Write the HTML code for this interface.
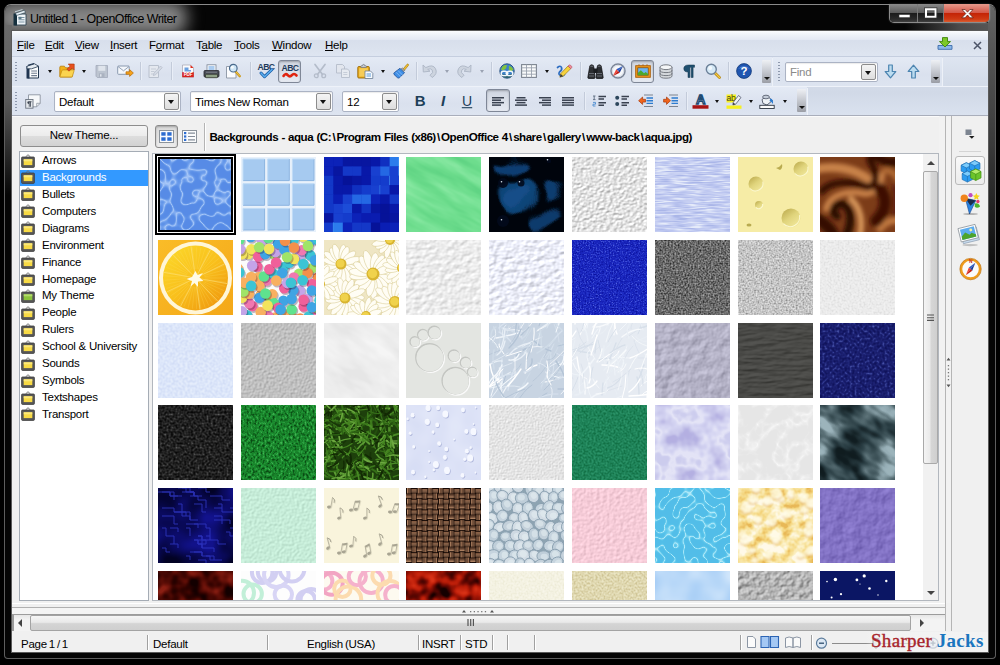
<!DOCTYPE html>
<html><head><meta charset="utf-8"><title>Untitled 1 - OpenOffice Writer</title>
<style>
*{box-sizing:border-box;margin:0;padding:0}
html,body{width:1000px;height:665px;overflow:hidden;background:#000}
body{position:relative;font-family:"Liberation Sans",sans-serif;font-size:11.5px;letter-spacing:-.25px;color:#000}
.abs{position:absolute}
#frame{left:4px;top:4px;width:992px;height:655px;border:1px solid #5e5e5e;border-top-color:#8a8a8a;border-radius:7px 7px 4px 4px;background:#050505}
#titleglow{left:-10px;top:-4px;width:192px;height:34px;border-radius:14px;background:#868686;filter:blur(8px)}#glowclip{left:5px;top:5px;width:300px;height:200px;overflow:hidden;border-radius:6px 0 0 0}
#title{left:30px;top:11.5px;font-size:12.4px;color:#000;white-space:nowrap;letter-spacing:-.52px}
#client{left:12px;top:31px;width:976px;height:621px;background:#f0f0f0;overflow:hidden;box-shadow:0 0 0 1px #5a5a5a}
#menubar{left:0;top:0;width:976px;height:26px;background:linear-gradient(#fcfdff 0,#eff3f9 14%,#e4e9f4 33%,#d8dfec 35%,#dae1ed 60%,#dfe6f2 100%)}
.mi{position:absolute;top:8px;white-space:nowrap}
.mi u{text-decoration:underline;text-underline-offset:1px}
#tbarea{left:0;top:26px;width:976px;height:59px;background:linear-gradient(#dee5f1 0,#d5ddea 35%,#d1d9e7 60%,#dae2ef 100%)}
.tb{position:absolute;background:linear-gradient(#e4eaf5,#dae1ee 60%,#dde4f0);box-shadow:1px 1px 0 #edf1f8}
.grip{position:absolute;width:2px;background-image:repeating-linear-gradient(#8e99ad 0 1px,transparent 1px 3px)}
.sep{position:absolute;width:1px;background:#c3cbda;box-shadow:1px 0 0 #e9eef7}
.ic{position:absolute;overflow:visible}
.dd{position:absolute;width:0;height:0;margin-left:.5px;border-left:2.5px solid transparent;border-right:2.5px solid transparent;border-top:3px solid #111}
.dd.dis{border-top-color:#9aa2b2}
.pressed{position:absolute;border:1px solid #7f8797;border-radius:3px;background:linear-gradient(#cfd5e0,#e6eaf2);box-shadow:inset 0 1px 2px rgba(0,0,0,.25)}
.combo{position:absolute;background:#fff;border:1px solid #abb3c4;border-radius:2px;box-shadow:inset 0 1px 1px rgba(0,0,0,.08)}
.combo span{position:absolute;left:4px;top:3px;white-space:nowrap}
.cbtn{position:absolute;right:1px;top:1px;bottom:1px;width:15px;border:1px solid #8c8c8c;border-radius:2px;background:linear-gradient(#f4f4f4,#dedede)}
.cbtn:after{content:"";position:absolute;left:3px;top:6px;border-left:3.5px solid transparent;border-right:3.5px solid transparent;border-top:4px solid #111}
.ovf{position:absolute;width:9px;border-radius:1px;background:linear-gradient(#eef0f4 0,#c9ccd3 45%,#9b9ea6 100%)}
.ovf:after{content:"";position:absolute;left:1.5px;bottom:3px;border-left:3px solid transparent;border-right:3px solid transparent;border-top:3px solid #111}
#panel{left:0;top:85px;width:976px;height:515px;background:#f0f0f0}
.btn{position:absolute;border:1px solid #8e8e8e;border-radius:3px;background:linear-gradient(#f5f5f5 0,#ececec 48%,#dddddd 52%,#d2d2d2 100%);text-align:center}
#list{left:8px;top:121px;width:129px;height:449px;background:#fff;border:1px solid #a5acb5}
.li{position:absolute;left:0;width:128px;height:16px;white-space:nowrap}
.li span{position:absolute;left:22px;top:1px}
.li.sel{background:#3399ff;color:#fff}
#gview{left:141px;top:122px;width:785px;height:448px;background:#fff;border:1px solid #b2b7be;overflow:hidden}
.th{position:absolute;width:75px;height:75px;overflow:hidden}
.th svg{position:absolute;left:0;top:0}
#status{left:0;top:600px;width:976px;height:21px;background:#f0f0f0}
.st{position:absolute;top:7px;white-space:nowrap;word-spacing:-1px}
.bs{margin:0 1.3px}.ssep{position:absolute;top:4px;width:1px;height:15px;background:#a0a0a0;box-shadow:1px 0 0 #fff}
</style></head><body>
<svg width="0" height="0" style="position:absolute"><defs><filter id="f0" x="0" y="0" width="100%" height="100%" color-interpolation-filters="sRGB"><feTurbulence type="turbulence" baseFrequency="0.085 0.085" numOctaves="1" seed="7"/><feColorMatrix type="matrix" values="0 0 0 1 0 0 0 0 1 0 0 0 0 1 0 0 0 0 0 1"/><feComponentTransfer><feFuncR type="table" tableValues="0.659 0.528 0.427 0.371 0.347 0.345 0.345 0.345 0.345 0.345 0.345 0.345 0.345 0.345 0.345 0.345 0.345 0.345 0.345 0.345 0.345 0.345 0.345 0.345 0.345"/><feFuncG type="table" tableValues="0.784 0.690 0.618 0.575 0.551 0.549 0.549 0.549 0.549 0.549 0.549 0.549 0.549 0.549 0.549 0.549 0.549 0.549 0.549 0.549 0.549 0.549 0.549 0.549 0.549"/><feFuncB type="table" tableValues="0.973 0.945 0.926 0.912 0.903 0.902 0.902 0.902 0.902 0.902 0.902 0.902 0.902 0.902 0.902 0.902 0.902 0.902 0.902 0.902 0.902 0.902 0.902 0.902 0.902"/></feComponentTransfer></filter><filter id="f1" x="0" y="0" width="100%" height="100%" color-interpolation-filters="sRGB"><feTurbulence type="fractalNoise" baseFrequency="0.08" numOctaves="2" seed="4"/><feColorMatrix type="matrix" values="0 0 0 0 .64  0 0 0 0 .78  0 0 0 0 .93  .35 0 0 0 -.1"/><feComposite in2="SourceGraphic" operator="in"/></filter><filter id="f2" x="0" y="0" width="100%" height="100%" color-interpolation-filters="sRGB"><feTurbulence type="fractalNoise" baseFrequency="0.03 0.14" numOctaves="3" seed="6"/><feColorMatrix type="matrix" values="0 0 0 1 0 0 0 0 1 0 0 0 0 1 0 0 0 0 0 1"/><feComponentTransfer><feFuncR type="table" tableValues="0.376 0.376 0.376 0.376 0.376 0.378 0.388 0.398 0.408 0.418 0.427 0.437 0.447 0.457 0.467 0.478 0.492 0.505 0.518 0.531 0.533 0.533 0.533 0.533 0.533"/><feFuncG type="table" tableValues="0.831 0.831 0.831 0.831 0.831 0.833 0.839 0.846 0.852 0.859 0.865 0.870 0.875 0.879 0.884 0.889 0.894 0.899 0.904 0.909 0.910 0.910 0.910 0.910 0.910"/><feFuncB type="table" tableValues="0.518 0.518 0.518 0.518 0.518 0.519 0.525 0.532 0.539 0.545 0.552 0.560 0.569 0.577 0.585 0.594 0.604 0.614 0.624 0.633 0.635 0.635 0.635 0.635 0.635"/></feComponentTransfer></filter><filter id="f3" x="-20%" y="-20%" width="140%" height="140%"><feTurbulence type="fractalNoise" baseFrequency="0.035" numOctaves="2" seed="3" result="n"/><feGaussianBlur in="SourceGraphic" stdDeviation="1.4" result="b"/><feDisplacementMap in="b" in2="n" scale="22" xChannelSelector="R" yChannelSelector="G"/></filter><filter id="f4" x="-20%" y="-20%" width="140%" height="140%"><feGaussianBlur stdDeviation="0.4"/></filter><filter id="f5" x="0" y="0" width="100%" height="100%" color-interpolation-filters="sRGB"><feTurbulence type="fractalNoise" baseFrequency="0.3 0.4" numOctaves="2" seed="3"/><feDiffuseLighting surfaceScale="1.0" diffuseConstant="1" lighting-color="#fff"><feDistantLight azimuth="225" elevation="45"/></feDiffuseLighting><feColorMatrix type="matrix" values="0.7 0 0 0 0.395 0 0.7 0 0 0.395 0 0 0.7 0 0.395 0 0 0 0 1"/></filter><filter id="f6" x="0" y="0" width="100%" height="100%" color-interpolation-filters="sRGB"><feTurbulence type="fractalNoise" baseFrequency="0.06 0.7" numOctaves="2" seed="8"/><feColorMatrix type="matrix" values="0 0 0 1 0 0 0 0 1 0 0 0 0 1 0 0 0 0 0 1"/><feComponentTransfer><feFuncR type="table" tableValues="0.667 0.667 0.667 0.667 0.667 0.667 0.667 0.684 0.702 0.720 0.737 0.753 0.769 0.784 0.800 0.825 0.851 0.876 0.902 0.902 0.902 0.902 0.902 0.902 0.902"/><feFuncG type="table" tableValues="0.714 0.714 0.714 0.714 0.714 0.714 0.714 0.729 0.745 0.761 0.776 0.790 0.804 0.818 0.831 0.855 0.878 0.902 0.925 0.925 0.925 0.925 0.925 0.925 0.925"/><feFuncB type="table" tableValues="0.910 0.910 0.910 0.910 0.910 0.910 0.910 0.918 0.925 0.933 0.941 0.945 0.949 0.953 0.957 0.963 0.969 0.975 0.980 0.980 0.980 0.980 0.980 0.980 0.980"/></feComponentTransfer></filter><filter id="f7" x="-10%" y="-10%" width="120%" height="120%"><feGaussianBlur stdDeviation="2"/></filter><filter id="f8" x="0" y="0" width="100%" height="100%" color-interpolation-filters="sRGB"><feTurbulence type="fractalNoise" baseFrequency="0.16 0.22" numOctaves="2" seed="5"/><feDiffuseLighting surfaceScale="1.0" diffuseConstant="1" lighting-color="#fff"><feDistantLight azimuth="225" elevation="45"/></feDiffuseLighting><feColorMatrix type="matrix" values="0.45 0 0 0 0.607 0 0.45 0 0 0.607 0 0 0.45 0 0.607 0 0 0 0 1"/></filter><filter id="f9" x="0" y="0" width="100%" height="100%" color-interpolation-filters="sRGB"><feTurbulence type="fractalNoise" baseFrequency="0.15 0.22" numOctaves="2" seed="7"/><feDiffuseLighting surfaceScale="1.3" diffuseConstant="1" lighting-color="#fff"><feDistantLight azimuth="225" elevation="45"/></feDiffuseLighting><feColorMatrix type="matrix" values="0.55 0 0 0 0.537 0 0.55 0 0 0.544 0 0 0.55 0 0.588 0 0 0 0 1"/></filter><filter id="f10" x="0" y="0" width="100%" height="100%" color-interpolation-filters="sRGB"><feTurbulence type="fractalNoise" baseFrequency="0.7 0.7" numOctaves="2" seed="2"/><feColorMatrix type="matrix" values="0 0 0 1 0 0 0 0 1 0 0 0 0 1 0 0 0 0 0 1"/><feComponentTransfer><feFuncR type="table" tableValues="0.047 0.047 0.047 0.047 0.047 0.047 0.047 0.058 0.069 0.080 0.089 0.095 0.102 0.108 0.131 0.157 0.183 0.212 0.251 0.290 0.329 0.345 0.345 0.345 0.345"/><feFuncG type="table" tableValues="0.078 0.078 0.078 0.078 0.078 0.078 0.078 0.092 0.105 0.118 0.130 0.141 0.152 0.163 0.187 0.216 0.244 0.275 0.314 0.353 0.392 0.408 0.408 0.408 0.408"/><feFuncB type="table" tableValues="0.627 0.627 0.627 0.627 0.627 0.627 0.627 0.651 0.675 0.699 0.719 0.732 0.745 0.758 0.775 0.792 0.810 0.827 0.842 0.857 0.872 0.878 0.878 0.878 0.878"/></feComponentTransfer></filter><filter id="f11" x="0" y="0" width="100%" height="100%" color-interpolation-filters="sRGB"><feTurbulence type="fractalNoise" baseFrequency="0.6 0.6" numOctaves="1" seed="4"/><feColorMatrix type="matrix" values="0 0 0 1 0 0 0 0 1 0 0 0 0 1 0 0 0 0 0 1"/><feComponentTransfer><feFuncR type="table" tableValues="0.149 0.149 0.149 0.149 0.149 0.157 0.196 0.235 0.275 0.314 0.350 0.383 0.416 0.448 0.481 0.515 0.549 0.583 0.618 0.652 0.659 0.659 0.659 0.659 0.659"/><feFuncG type="table" tableValues="0.149 0.149 0.149 0.149 0.149 0.157 0.196 0.235 0.275 0.314 0.350 0.383 0.416 0.448 0.481 0.515 0.549 0.583 0.618 0.652 0.659 0.659 0.659 0.659 0.659"/><feFuncB type="table" tableValues="0.149 0.149 0.149 0.149 0.149 0.157 0.196 0.235 0.275 0.314 0.350 0.383 0.416 0.448 0.481 0.515 0.549 0.583 0.618 0.652 0.659 0.659 0.659 0.659 0.659"/></feComponentTransfer></filter><filter id="f12" x="0" y="0" width="100%" height="100%" color-interpolation-filters="sRGB"><feTurbulence type="fractalNoise" baseFrequency="0.6 0.6" numOctaves="1" seed="6"/><feColorMatrix type="matrix" values="0 0 0 1 0 0 0 0 1 0 0 0 0 1 0 0 0 0 0 1"/><feComponentTransfer><feFuncR type="table" tableValues="0.549 0.549 0.549 0.549 0.549 0.556 0.592 0.628 0.664 0.700 0.730 0.751 0.773 0.794 0.815 0.836 0.858 0.879 0.900 0.921 0.925 0.925 0.925 0.925 0.925"/><feFuncG type="table" tableValues="0.549 0.549 0.549 0.549 0.549 0.556 0.592 0.628 0.664 0.700 0.730 0.751 0.773 0.794 0.815 0.836 0.858 0.879 0.900 0.921 0.925 0.925 0.925 0.925 0.925"/><feFuncB type="table" tableValues="0.549 0.549 0.549 0.549 0.549 0.556 0.592 0.628 0.664 0.700 0.730 0.751 0.773 0.794 0.815 0.836 0.858 0.879 0.900 0.921 0.925 0.925 0.925 0.925 0.925"/></feComponentTransfer></filter><filter id="f13" x="0" y="0" width="100%" height="100%" color-interpolation-filters="sRGB"><feTurbulence type="fractalNoise" baseFrequency="0.5 0.5" numOctaves="1" seed="9"/><feColorMatrix type="matrix" values="0 0 0 1 0 0 0 0 1 0 0 0 0 1 0 0 0 0 0 1"/><feComponentTransfer><feFuncR type="table" tableValues="0.878 0.878 0.878 0.878 0.878 0.878 0.878 0.886 0.894 0.902 0.910 0.918 0.925 0.929 0.933 0.937 0.941 0.945 0.949 0.949 0.949 0.949 0.949 0.949 0.949"/><feFuncG type="table" tableValues="0.878 0.878 0.878 0.878 0.878 0.878 0.878 0.886 0.894 0.902 0.910 0.918 0.925 0.929 0.933 0.937 0.941 0.945 0.949 0.949 0.949 0.949 0.949 0.949 0.949"/><feFuncB type="table" tableValues="0.878 0.878 0.878 0.878 0.878 0.878 0.878 0.886 0.894 0.902 0.910 0.918 0.925 0.929 0.933 0.937 0.941 0.945 0.949 0.949 0.949 0.949 0.949 0.949 0.949"/></feComponentTransfer></filter><filter id="f14" x="0" y="0" width="100%" height="100%" color-interpolation-filters="sRGB"><feTurbulence type="fractalNoise" baseFrequency="0.4 0.4" numOctaves="1" seed="3"/><feColorMatrix type="matrix" values="0 0 0 1 0 0 0 0 1 0 0 0 0 1 0 0 0 0 0 1"/><feComponentTransfer><feFuncR type="table" tableValues="0.824 0.824 0.824 0.824 0.824 0.824 0.824 0.830 0.837 0.843 0.850 0.856 0.863 0.869 0.876 0.882 0.889 0.895 0.902 0.902 0.902 0.902 0.902 0.902 0.902"/><feFuncG type="table" tableValues="0.867 0.867 0.867 0.867 0.867 0.867 0.867 0.873 0.878 0.884 0.890 0.896 0.902 0.907 0.912 0.918 0.923 0.928 0.933 0.933 0.933 0.933 0.933 0.933 0.933"/><feFuncB type="table" tableValues="0.965 0.965 0.965 0.965 0.965 0.965 0.965 0.967 0.970 0.973 0.975 0.978 0.980 0.982 0.983 0.984 0.986 0.987 0.988 0.988 0.988 0.988 0.988 0.988 0.988"/></feComponentTransfer></filter><filter id="f15" x="0" y="0" width="100%" height="100%" color-interpolation-filters="sRGB"><feTurbulence type="fractalNoise" baseFrequency="0.45 0.45" numOctaves="1" seed="3"/><feDiffuseLighting surfaceScale="0.8" diffuseConstant="1" lighting-color="#fff"><feDistantLight azimuth="225" elevation="45"/></feDiffuseLighting><feColorMatrix type="matrix" values="0.45 0 0 0 0.435 0 0.45 0 0 0.435 0 0 0.45 0 0.435 0 0 0 0 1"/></filter><filter id="f16" x="0" y="0" width="100%" height="100%" color-interpolation-filters="sRGB"><feTurbulence type="fractalNoise" baseFrequency="0.04 0.1" numOctaves="3" seed="11"/><feColorMatrix type="matrix" values="0 0 0 1 0 0 0 0 1 0 0 0 0 1 0 0 0 0 0 1"/><feComponentTransfer><feFuncR type="table" tableValues="0.902 0.902 0.902 0.902 0.902 0.902 0.902 0.908 0.914 0.920 0.925 0.929 0.933 0.937 0.941 0.946 0.951 0.956 0.961 0.961 0.961 0.961 0.961 0.961 0.961"/><feFuncG type="table" tableValues="0.902 0.902 0.902 0.902 0.902 0.902 0.902 0.908 0.914 0.920 0.925 0.929 0.933 0.937 0.941 0.946 0.951 0.956 0.961 0.961 0.961 0.961 0.961 0.961 0.961"/><feFuncB type="table" tableValues="0.902 0.902 0.902 0.902 0.902 0.902 0.902 0.908 0.914 0.920 0.925 0.929 0.933 0.937 0.941 0.946 0.951 0.956 0.961 0.961 0.961 0.961 0.961 0.961 0.961"/></feComponentTransfer></filter><filter id="f17" x="-20%" y="-20%" width="140%" height="140%"><feGaussianBlur stdDeviation="0.45"/></filter><filter id="f18" x="-20%" y="-20%" width="140%" height="140%"><feGaussianBlur stdDeviation="0.45"/></filter><filter id="f19" x="0" y="0" width="100%" height="100%" color-interpolation-filters="sRGB"><feTurbulence type="fractalNoise" baseFrequency="0.1 0.1" numOctaves="3" seed="5"/><feDiffuseLighting surfaceScale="1.3" diffuseConstant="1" lighting-color="#fff"><feDistantLight azimuth="225" elevation="45"/></feDiffuseLighting><feColorMatrix type="matrix" values="0.5 0 0 0 0.352 0 0.5 0 0 0.344 0 0 0.5 0 0.423 0 0 0 0 1"/></filter><filter id="f20" x="0" y="0" width="100%" height="100%" color-interpolation-filters="sRGB"><feTurbulence type="fractalNoise" baseFrequency="0.05 0.25" numOctaves="3" seed="2"/><feDiffuseLighting surfaceScale="1.5" diffuseConstant="1" lighting-color="#fff"><feDistantLight azimuth="225" elevation="45"/></feDiffuseLighting><feColorMatrix type="matrix" values="0.2 0 0 0 0.149 0 0.2 0 0 0.149 0 0 0.2 0 0.137 0 0 0 0 1"/></filter><filter id="f21" x="0" y="0" width="100%" height="100%" color-interpolation-filters="sRGB"><feTurbulence type="fractalNoise" baseFrequency="0.4 0.4" numOctaves="1" seed="5"/><feColorMatrix type="matrix" values="0 0 0 1 0 0 0 0 1 0 0 0 0 1 0 0 0 0 0 1"/><feComponentTransfer><feFuncR type="table" tableValues="0.063 0.063 0.063 0.063 0.063 0.063 0.063 0.063 0.070 0.079 0.088 0.096 0.103 0.110 0.117 0.144 0.176 0.207 0.244 0.292 0.339 0.386 0.392 0.392 0.392"/><feFuncG type="table" tableValues="0.078 0.078 0.078 0.078 0.078 0.078 0.078 0.078 0.086 0.095 0.104 0.113 0.122 0.131 0.140 0.171 0.208 0.244 0.285 0.334 0.384 0.433 0.439 0.439 0.439"/><feFuncB type="table" tableValues="0.361 0.361 0.361 0.361 0.361 0.361 0.361 0.361 0.373 0.389 0.405 0.420 0.434 0.447 0.461 0.497 0.537 0.578 0.618 0.656 0.694 0.733 0.737 0.737 0.737"/></feComponentTransfer></filter><filter id="f22" x="0" y="0" width="100%" height="100%" color-interpolation-filters="sRGB"><feTurbulence type="fractalNoise" baseFrequency="0.45 0.45" numOctaves="1" seed="8"/><feColorMatrix type="matrix" values="0 0 0 1 0 0 0 0 1 0 0 0 0 1 0 0 0 0 0 1"/><feComponentTransfer><feFuncR type="table" tableValues="0.031 0.031 0.031 0.031 0.031 0.031 0.031 0.048 0.064 0.080 0.097 0.113 0.129 0.146 0.162 0.178 0.204 0.243 0.282 0.322 0.361 0.376 0.376 0.376 0.376"/><feFuncG type="table" tableValues="0.031 0.031 0.031 0.031 0.031 0.031 0.031 0.048 0.064 0.080 0.097 0.113 0.129 0.146 0.162 0.178 0.204 0.243 0.282 0.322 0.361 0.376 0.376 0.376 0.376"/><feFuncB type="table" tableValues="0.031 0.031 0.031 0.031 0.031 0.031 0.031 0.048 0.064 0.080 0.097 0.113 0.129 0.146 0.162 0.178 0.204 0.243 0.282 0.322 0.361 0.376 0.376 0.376 0.376"/></feComponentTransfer></filter><filter id="f23" x="0" y="0" width="100%" height="100%" color-interpolation-filters="sRGB"><feTurbulence type="fractalNoise" baseFrequency="0.5 0.35" numOctaves="2" seed="3"/><feColorMatrix type="matrix" values="0 0 0 1 0 0 0 0 1 0 0 0 0 1 0 0 0 0 0 1"/><feComponentTransfer><feFuncR type="table" tableValues="0.039 0.039 0.039 0.039 0.039 0.039 0.039 0.050 0.061 0.071 0.082 0.091 0.098 0.105 0.112 0.124 0.156 0.188 0.220 0.252 0.259 0.259 0.259 0.259 0.259"/><feFuncG type="table" tableValues="0.290 0.290 0.290 0.290 0.290 0.290 0.290 0.333 0.376 0.419 0.461 0.492 0.516 0.539 0.562 0.586 0.615 0.643 0.672 0.700 0.706 0.706 0.706 0.706 0.706"/><feFuncB type="table" tableValues="0.078 0.078 0.078 0.078 0.078 0.078 0.078 0.094 0.111 0.127 0.143 0.157 0.169 0.181 0.194 0.210 0.238 0.267 0.295 0.324 0.329 0.329 0.329 0.329 0.329"/></feComponentTransfer></filter><filter id="f24" x="0" y="0" width="100%" height="100%" color-interpolation-filters="sRGB"><feTurbulence type="fractalNoise" baseFrequency="0.05 0.05" numOctaves="1" seed="2"/><feColorMatrix type="matrix" values="0 0 0 1 0 0 0 0 1 0 0 0 0 1 0 0 0 0 0 1"/><feComponentTransfer><feFuncR type="table" tableValues="0.847 0.847 0.847 0.847 0.847 0.847 0.847 0.847 0.850 0.854 0.858 0.863 0.867 0.871 0.875 0.879 0.883 0.886 0.886 0.886 0.886 0.886 0.886 0.886 0.886"/><feFuncG type="table" tableValues="0.871 0.871 0.871 0.871 0.871 0.871 0.871 0.871 0.874 0.877 0.881 0.885 0.888 0.892 0.896 0.899 0.903 0.906 0.906 0.906 0.906 0.906 0.906 0.906 0.906"/><feFuncB type="table" tableValues="0.961 0.961 0.961 0.961 0.961 0.961 0.961 0.961 0.962 0.964 0.965 0.967 0.969 0.970 0.972 0.974 0.975 0.976 0.976 0.976 0.976 0.976 0.976 0.976 0.976"/></feComponentTransfer></filter><filter id="f25" x="0" y="0" width="100%" height="100%" color-interpolation-filters="sRGB"><feTurbulence type="fractalNoise" baseFrequency="0.7 0.7" numOctaves="1" seed="6"/><feDiffuseLighting surfaceScale="0.7" diffuseConstant="1" lighting-color="#fff"><feDistantLight azimuth="225" elevation="45"/></feDiffuseLighting><feColorMatrix type="matrix" values="0.55 0 0 0 0.505 0 0.55 0 0 0.505 0 0 0.55 0 0.505 0 0 0 0 1"/></filter><filter id="f26" x="0" y="0" width="100%" height="100%" color-interpolation-filters="sRGB"><feTurbulence type="fractalNoise" baseFrequency="0.5 0.5" numOctaves="1" seed="3"/><feColorMatrix type="matrix" values="0 0 0 1 0 0 0 0 1 0 0 0 0 1 0 0 0 0 0 1"/><feComponentTransfer><feFuncR type="table" tableValues="0.071 0.071 0.071 0.071 0.071 0.071 0.071 0.078 0.086 0.094 0.102 0.110 0.118 0.127 0.136 0.145 0.154 0.163 0.173 0.173 0.173 0.173 0.173 0.173 0.173"/><feFuncG type="table" tableValues="0.439 0.439 0.439 0.439 0.439 0.439 0.439 0.451 0.463 0.475 0.486 0.498 0.510 0.522 0.533 0.545 0.557 0.569 0.580 0.580 0.580 0.580 0.580 0.580 0.580"/><feFuncB type="table" tableValues="0.267 0.267 0.267 0.267 0.267 0.267 0.267 0.280 0.293 0.306 0.319 0.332 0.345 0.356 0.366 0.376 0.387 0.397 0.408 0.408 0.408 0.408 0.408 0.408 0.408"/></feComponentTransfer></filter><filter id="f27" x="0" y="0" width="100%" height="100%" color-interpolation-filters="sRGB"><feTurbulence type="fractalNoise" baseFrequency="0.045 0.045" numOctaves="3" seed="10"/><feColorMatrix type="matrix" values="0 0 0 1 0 0 0 0 1 0 0 0 0 1 0 0 0 0 0 1"/><feComponentTransfer><feFuncR type="table" tableValues="0.706 0.706 0.706 0.706 0.706 0.706 0.706 0.713 0.740 0.767 0.790 0.811 0.831 0.861 0.891 0.895 0.853 0.812 0.800 0.800 0.800 0.800 0.800 0.800 0.800"/><feFuncG type="table" tableValues="0.690 0.690 0.690 0.690 0.690 0.690 0.690 0.699 0.728 0.758 0.784 0.808 0.831 0.861 0.891 0.895 0.853 0.812 0.800 0.800 0.800 0.800 0.800 0.800 0.800"/><feFuncB type="table" tableValues="0.886 0.886 0.886 0.886 0.886 0.886 0.886 0.890 0.901 0.913 0.925 0.937 0.949 0.958 0.967 0.967 0.952 0.937 0.933 0.933 0.933 0.933 0.933 0.933 0.933"/></feComponentTransfer></filter><filter id="f28" x="0" y="0" width="100%" height="100%" color-interpolation-filters="sRGB"><feTurbulence type="turbulence" baseFrequency="0.05 0.05" numOctaves="3" seed="4"/><feColorMatrix type="matrix" values="0 0 0 1 0 0 0 0 1 0 0 0 0 1 0 0 0 0 0 1"/><feComponentTransfer><feFuncR type="table" tableValues="0.973 0.961 0.950 0.939 0.931 0.923 0.915 0.910 0.904 0.902 0.902 0.902 0.902 0.902 0.902 0.902 0.902 0.902 0.902 0.902 0.902 0.902 0.902 0.902 0.902"/><feFuncG type="table" tableValues="0.973 0.961 0.950 0.939 0.931 0.923 0.915 0.910 0.904 0.902 0.902 0.902 0.902 0.902 0.902 0.902 0.902 0.902 0.902 0.902 0.902 0.902 0.902 0.902 0.902"/><feFuncB type="table" tableValues="0.973 0.961 0.950 0.939 0.931 0.923 0.915 0.910 0.904 0.902 0.902 0.902 0.902 0.902 0.902 0.902 0.902 0.902 0.902 0.902 0.902 0.902 0.902 0.902 0.902"/></feComponentTransfer></filter><filter id="f29" x="0" y="0" width="100%" height="100%" color-interpolation-filters="sRGB"><feTurbulence type="fractalNoise" baseFrequency="0.04 0.08" numOctaves="3" seed="7"/><feColorMatrix type="matrix" values="0 0 0 1 0 0 0 0 1 0 0 0 0 1 0 0 0 0 0 1"/><feComponentTransfer><feFuncR type="table" tableValues="0.063 0.063 0.063 0.063 0.063 0.063 0.063 0.071 0.103 0.134 0.165 0.205 0.247 0.289 0.341 0.424 0.506 0.589 0.612 0.612 0.612 0.612 0.612 0.612 0.612"/><feFuncG type="table" tableValues="0.110 0.110 0.110 0.110 0.110 0.110 0.110 0.121 0.161 0.201 0.241 0.285 0.329 0.374 0.428 0.513 0.598 0.682 0.706 0.706 0.706 0.706 0.706 0.706 0.706"/><feFuncB type="table" tableValues="0.125 0.125 0.125 0.125 0.125 0.125 0.125 0.137 0.180 0.222 0.264 0.308 0.353 0.398 0.452 0.539 0.626 0.713 0.737 0.737 0.737 0.737 0.737 0.737 0.737"/></feComponentTransfer></filter><filter id="f30" x="0" y="0" width="100%" height="100%" color-interpolation-filters="sRGB"><feTurbulence type="fractalNoise" baseFrequency="0.03 0.03" numOctaves="2" seed="5"/><feColorMatrix type="matrix" values="0 0 0 1 0 0 0 0 1 0 0 0 0 1 0 0 0 0 0 1"/><feComponentTransfer><feFuncR type="table" tableValues="0.008 0.008 0.008 0.008 0.008 0.008 0.008 0.008 0.012 0.018 0.024 0.030 0.036 0.042 0.047 0.053 0.059 0.065 0.071 0.071 0.071 0.071 0.071 0.071 0.071"/><feFuncG type="table" tableValues="0.008 0.008 0.008 0.008 0.008 0.008 0.008 0.008 0.012 0.018 0.024 0.030 0.036 0.042 0.047 0.053 0.059 0.065 0.071 0.071 0.071 0.071 0.071 0.071 0.071"/><feFuncB type="table" tableValues="0.141 0.141 0.141 0.141 0.141 0.141 0.141 0.141 0.174 0.214 0.255 0.296 0.336 0.375 0.410 0.444 0.479 0.514 0.549 0.549 0.549 0.549 0.549 0.549 0.549"/></feComponentTransfer></filter><filter id="f31" x="0" y="0" width="100%" height="100%" color-interpolation-filters="sRGB"><feTurbulence type="fractalNoise" baseFrequency="0.4 0.4" numOctaves="1" seed="8"/><feDiffuseLighting surfaceScale="0.7" diffuseConstant="1" lighting-color="#fff"><feDistantLight azimuth="225" elevation="45"/></feDiffuseLighting><feColorMatrix type="matrix" values="0.35 0 0 0 0.529 0 0.35 0 0 0.678 0 0 0.35 0 0.600 0 0 0 0 1"/></filter><filter id="f32" x="0" y="0" width="100%" height="100%" color-interpolation-filters="sRGB"><feTurbulence type="fractalNoise" baseFrequency="0.3 0.3" numOctaves="2" seed="4"/><feDiffuseLighting surfaceScale="0.8" diffuseConstant="1" lighting-color="#fff"><feDistantLight azimuth="225" elevation="45"/></feDiffuseLighting><feColorMatrix type="matrix" values="0.35 0 0 0 0.717 0 0.35 0 0 0.553 0 0 0.35 0 0.600 0 0 0 0 1"/></filter><filter id="f33" x="0" y="0" width="100%" height="100%" color-interpolation-filters="sRGB"><feTurbulence type="turbulence" baseFrequency="0.1 0.1" numOctaves="1" seed="4"/><feColorMatrix type="matrix" values="0 0 0 1 0 0 0 0 1 0 0 0 0 1 0 0 0 0 0 1"/><feComponentTransfer><feFuncR type="table" tableValues="0.722 0.464 0.356 0.325 0.322 0.322 0.322 0.322 0.322 0.322 0.322 0.322 0.322 0.322 0.322 0.322 0.322 0.322 0.322 0.322 0.322 0.322 0.322 0.322 0.322"/><feFuncG type="table" tableValues="0.925 0.825 0.773 0.748 0.745 0.745 0.745 0.745 0.745 0.745 0.745 0.745 0.745 0.745 0.745 0.745 0.745 0.745 0.745 0.745 0.745 0.745 0.745 0.745 0.745"/><feFuncB type="table" tableValues="0.980 0.943 0.924 0.911 0.910 0.910 0.910 0.910 0.910 0.910 0.910 0.910 0.910 0.910 0.910 0.910 0.910 0.910 0.910 0.910 0.910 0.910 0.910 0.910 0.910"/></feComponentTransfer></filter><filter id="f34" x="0" y="0" width="100%" height="100%" color-interpolation-filters="sRGB"><feTurbulence type="fractalNoise" baseFrequency="0.09 0.09" numOctaves="3" seed="12"/><feColorMatrix type="matrix" values="0 0 0 1 0 0 0 0 1 0 0 0 0 1 0 0 0 0 0 1"/><feComponentTransfer><feFuncR type="table" tableValues="0.910 0.910 0.910 0.910 0.910 0.910 0.910 0.928 0.946 0.959 0.965 0.972 0.978 0.984 0.989 0.994 0.999 1.000 1.000 1.000 1.000 1.000 1.000 1.000 1.000"/><feFuncG type="table" tableValues="0.722 0.722 0.722 0.722 0.722 0.722 0.722 0.764 0.807 0.842 0.866 0.890 0.909 0.928 0.945 0.960 0.976 0.980 0.980 0.980 0.980 0.980 0.980 0.980 0.980"/><feFuncB type="table" tableValues="0.345 0.345 0.345 0.345 0.345 0.345 0.345 0.400 0.455 0.509 0.564 0.619 0.673 0.728 0.783 0.838 0.892 0.910 0.910 0.910 0.910 0.910 0.910 0.910 0.910"/></feComponentTransfer></filter><filter id="f35" x="-20%" y="-20%" width="140%" height="140%"><feGaussianBlur stdDeviation="0.8"/></filter><filter id="f36" x="0" y="0" width="100%" height="100%" color-interpolation-filters="sRGB"><feTurbulence type="fractalNoise" baseFrequency="0.1 0.1" numOctaves="3" seed="9"/><feDiffuseLighting surfaceScale="1.2" diffuseConstant="1" lighting-color="#fff"><feDistantLight azimuth="225" elevation="45"/></feDiffuseLighting><feColorMatrix type="matrix" values="0.4 0 0 0 0.227 0 0.4 0 0 0.164 0 0 0.4 0 0.486 0 0 0 0 1"/></filter><filter id="f37" x="0" y="0" width="100%" height="100%" color-interpolation-filters="sRGB"><feTurbulence type="fractalNoise" baseFrequency="0.07 0.07" numOctaves="2" seed="3"/><feColorMatrix type="matrix" values="0 0 0 1 0 0 0 0 1 0 0 0 0 1 0 0 0 0 0 1"/><feComponentTransfer><feFuncR type="table" tableValues="0.078 0.078 0.078 0.078 0.078 0.078 0.078 0.078 0.108 0.145 0.183 0.220 0.260 0.302 0.343 0.384 0.424 0.463 0.502 0.541 0.549 0.549 0.549 0.549 0.549"/><feFuncG type="table" tableValues="0.000 0.000 0.000 0.000 0.000 0.000 0.000 0.000 0.003 0.007 0.011 0.015 0.025 0.037 0.049 0.060 0.075 0.091 0.107 0.122 0.125 0.125 0.125 0.125 0.125"/><feFuncB type="table" tableValues="0.000 0.000 0.000 0.000 0.000 0.000 0.000 0.000 0.001 0.002 0.003 0.004 0.009 0.016 0.023 0.030 0.041 0.053 0.064 0.076 0.078 0.078 0.078 0.078 0.078"/></feComponentTransfer></filter><filter id="f38" x="-20%" y="-20%" width="140%" height="140%"><feGaussianBlur stdDeviation="0.5"/></filter><filter id="f39" x="-20%" y="-20%" width="140%" height="140%"><feGaussianBlur stdDeviation="0.5"/></filter><filter id="f40" x="0" y="0" width="100%" height="100%" color-interpolation-filters="sRGB"><feTurbulence type="fractalNoise" baseFrequency="0.07 0.07" numOctaves="2" seed="8"/><feColorMatrix type="matrix" values="0 0 0 1 0 0 0 0 1 0 0 0 0 1 0 0 0 0 0 1"/><feComponentTransfer><feFuncR type="table" tableValues="0.086 0.086 0.086 0.086 0.086 0.086 0.086 0.111 0.201 0.290 0.380 0.466 0.549 0.632 0.715 0.757 0.795 0.834 0.863 0.863 0.863 0.863 0.863 0.863 0.863"/><feFuncG type="table" tableValues="0.000 0.000 0.000 0.000 0.000 0.000 0.000 0.002 0.011 0.019 0.028 0.044 0.065 0.087 0.108 0.133 0.159 0.184 0.204 0.204 0.204 0.204 0.204 0.204 0.204"/><feFuncB type="table" tableValues="0.000 0.000 0.000 0.000 0.000 0.000 0.000 0.001 0.003 0.005 0.007 0.012 0.018 0.024 0.031 0.047 0.064 0.081 0.094 0.094 0.094 0.094 0.094 0.094 0.094"/></feComponentTransfer></filter><filter id="f41" x="0" y="0" width="100%" height="100%" color-interpolation-filters="sRGB"><feTurbulence type="fractalNoise" baseFrequency="0.5 0.5" numOctaves="1" seed="3"/><feColorMatrix type="matrix" values="0 0 0 1 0 0 0 0 1 0 0 0 0 1 0 0 0 0 0 1"/><feComponentTransfer><feFuncR type="table" tableValues="0.933 0.933 0.933 0.933 0.933 0.933 0.933 0.937 0.941 0.945 0.949 0.953 0.957 0.959 0.962 0.965 0.967 0.970 0.973 0.973 0.973 0.973 0.973 0.973 0.973"/><feFuncG type="table" tableValues="0.925 0.925 0.925 0.925 0.925 0.925 0.925 0.929 0.933 0.937 0.941 0.945 0.949 0.952 0.954 0.957 0.959 0.962 0.965 0.965 0.965 0.965 0.965 0.965 0.965"/><feFuncB type="table" tableValues="0.847 0.847 0.847 0.847 0.847 0.847 0.847 0.854 0.860 0.867 0.873 0.880 0.886 0.892 0.897 0.902 0.907 0.912 0.918 0.918 0.918 0.918 0.918 0.918 0.918"/></feComponentTransfer></filter><filter id="f42" x="0" y="0" width="100%" height="100%" color-interpolation-filters="sRGB"><feTurbulence type="fractalNoise" baseFrequency="0.5 0.5" numOctaves="1" seed="5"/><feColorMatrix type="matrix" values="0 0 0 1 0 0 0 0 1 0 0 0 0 1 0 0 0 0 0 1"/><feComponentTransfer><feFuncR type="table" tableValues="0.812 0.812 0.812 0.812 0.812 0.812 0.812 0.823 0.834 0.845 0.856 0.867 0.878 0.886 0.894 0.902 0.910 0.918 0.925 0.925 0.925 0.925 0.925 0.925 0.925"/><feFuncG type="table" tableValues="0.769 0.769 0.769 0.769 0.769 0.769 0.769 0.782 0.795 0.808 0.821 0.834 0.847 0.856 0.865 0.875 0.884 0.893 0.902 0.902 0.902 0.902 0.902 0.902 0.902"/><feFuncB type="table" tableValues="0.588 0.588 0.588 0.588 0.588 0.588 0.588 0.605 0.622 0.639 0.656 0.673 0.690 0.705 0.719 0.733 0.748 0.762 0.776 0.776 0.776 0.776 0.776 0.776 0.776"/></feComponentTransfer></filter><filter id="f43" x="0" y="0" width="100%" height="100%" color-interpolation-filters="sRGB"><feTurbulence type="fractalNoise" baseFrequency="0.03 0.03" numOctaves="2" seed="3"/><feColorMatrix type="matrix" values="0 0 0 1 0 0 0 0 1 0 0 0 0 1 0 0 0 0 0 1"/><feComponentTransfer><feFuncR type="table" tableValues="0.643 0.643 0.643 0.643 0.643 0.643 0.643 0.643 0.656 0.673 0.689 0.705 0.722 0.741 0.761 0.780 0.800 0.816 0.816 0.816 0.816 0.816 0.816 0.816 0.816"/><feFuncG type="table" tableValues="0.800 0.800 0.800 0.800 0.800 0.800 0.800 0.800 0.808 0.818 0.827 0.837 0.847 0.858 0.870 0.881 0.893 0.902 0.902 0.902 0.902 0.902 0.902 0.902 0.902"/><feFuncB type="table" tableValues="0.965 0.965 0.965 0.965 0.965 0.965 0.965 0.965 0.966 0.968 0.969 0.971 0.973 0.976 0.979 0.982 0.986 0.988 0.988 0.988 0.988 0.988 0.988 0.988 0.988"/></feComponentTransfer></filter><filter id="f44" x="0" y="0" width="100%" height="100%" color-interpolation-filters="sRGB"><feTurbulence type="fractalNoise" baseFrequency="0.2 0.2" numOctaves="2" seed="6"/><feDiffuseLighting surfaceScale="1.5" diffuseConstant="1" lighting-color="#fff"><feDistantLight azimuth="225" elevation="45"/></feDiffuseLighting><feColorMatrix type="matrix" values="0.6 0 0 0 0.289 0 0.6 0 0 0.289 0 0 0.6 0 0.289 0 0 0 0 1"/></filter><filter id="f45" x="-20%" y="-20%" width="140%" height="140%"><feGaussianBlur stdDeviation="0.7"/></filter></defs></svg>
<div class="abs" id="frame"></div>
<div class="abs" style="left:905px;top:23px;width:90px;height:8px;background:linear-gradient(90deg,rgba(90,90,90,0),#4a4a4a 60%,#585858)"></div><div class="abs" style="left:988px;top:5px;width:7px;height:280px;border-radius:0 6px 0 0;background:linear-gradient(#646464,#4a4a4a 30%,#3a3a3a 50%,rgba(20,20,20,0))"></div><div class="abs" id="glowclip"><div class="abs" id="titleglow"></div><div class="abs" style="left:0;top:20px;width:7px;height:170px;background:linear-gradient(#6a6a6a,#585858 45%,rgba(40,40,40,0))"></div></div>
<svg class="ic" style="left:12.0px;top:9.0px" width="16" height="17" viewBox="0 0 16 17"><path d="M2.500 5h11.500v11H2.500z" fill="#eef4f8" stroke="#2c4454" stroke-width=".9"/><path d="M1.500 4.500h3.500v12H1.500z" fill="#16303e"/><path d="M3.500 4.200l9-3 1 2.300-9 3z" fill="#e4eef4" stroke="#2c4454" stroke-width=".6"/><path d="M3 2.800l7.500-2.300" stroke="#c4d4dc" stroke-width="1"/><path d="M6.500 8.500h6M6.500 10.800h6M6.500 13h6" stroke="#7c94a4" stroke-width="1.100"/><rect x="6.500" y="7.800" width="3" height="2.400" fill="#5c7c8c"/></svg>
<div class="abs" id="title">Untitled 1 - OpenOffice Writer</div>
<div class="abs" style="left:889px;top:4px;width:101px;height:19px;border:1px solid #8c8c8c;border-top:none;border-radius:0 0 5px 5px;overflow:hidden;box-shadow:0 0 2px rgba(255,255,255,.25)"><div class="abs" style="left:0;top:0;width:28px;height:19px;background:linear-gradient(#8a8a8a 0,#5c5c5c 45%,#1b1b1b 50%,#2a2a2a 80%,#4a4a4a 100%);border-right:1px solid #7a7a7a"></div><div class="abs" style="left:28px;top:0;width:26px;height:19px;background:linear-gradient(#8a8a8a 0,#5c5c5c 45%,#1b1b1b 50%,#2a2a2a 80%,#4a4a4a 100%);border-right:1px solid #7a7a7a"></div><div class="abs" style="left:54px;top:0;width:46px;height:19px;background:linear-gradient(#e79a8c 0,#d4594a 45%,#c42406 50%,#cf3a14 80%,#de6a3c 100%)"></div><svg class="abs" style="left:0;top:0" width="100" height="19" viewBox="0 0 100 19"><rect x="9" y="10.5" width="11" height="3.2" fill="#fff" stroke="#333" stroke-width=".6"/><rect x="36" y="5.2" width="9.6" height="7.6" fill="none" stroke="#fff" stroke-width="2"/><rect x="34.6" y="3.8" width="12.4" height="10.4" fill="none" stroke="#333" stroke-width=".6"/><path d="M72 5.5 L75.2 5.5 L77.5 8.2 L79.8 5.5 L83 5.5 L79.2 9.6 L83.2 13.8 L79.9 13.8 L77.5 11 L75.1 13.8 L71.8 13.8 L75.8 9.6 Z" fill="#fff" stroke="#5a1a10" stroke-width=".7"/></svg></div>
<div class="abs" id="client">
 <div class="abs" id="menubar"><div class="mi" style="left:5px"><u>F</u>ile</div><div class="mi" style="left:33px"><u>E</u>dit</div><div class="mi" style="left:63px"><u>V</u>iew</div><div class="mi" style="left:98px"><u>I</u>nsert</div><div class="mi" style="left:137px">F<u>o</u>rmat</div><div class="mi" style="left:184px">T<u>a</u>ble</div><div class="mi" style="left:222px"><u>T</u>ools</div><div class="mi" style="left:260px"><u>W</u>indow</div><div class="mi" style="left:313px"><u>H</u>elp</div><svg class="ic" style="left:924.5px;top:5.5px" width="16" height="13" viewBox="0 0 16 13"><path d="M1 8.500h14v3.800H1z" fill="#8cb8e8" stroke="#3c6cac" stroke-width=".9"/><path d="M5.500 .6h5v4h3L8 10 2.500 4.600h3z" fill="#7cc828" stroke="#3c8408" stroke-width=".9" stroke-linejoin="round"/></svg><svg class="ic" style="left:960.5px;top:9.5px" width="9" height="9" viewBox="0 0 9 9"><path d="M1 1l7 7M8 1L1 8" stroke="#4c5468" stroke-width="1.500"/></svg></div>
 <div class="abs" id="tbarea"></div>
 <div class="tb" style="left:0;top:26px;width:760px;height:29px"></div><div class="tb" style="left:761px;top:26px;width:169px;height:29px"></div><div class="tb" style="left:0;top:56px;width:795px;height:28px"></div><div class="abs" style="left:0;top:25px;width:976px;height:1px;background:#c5cedf"></div><div class="abs" style="left:0;top:55px;width:976px;height:1px;background:#eef2f9"></div><div class="abs" style="left:0;top:84px;width:976px;height:1px;background:#a9aebb"></div><div class="grip" style="left:3px;top:31px;height:19px"></div><div class="grip" style="left:766px;top:31px;height:19px"></div><div class="grip" style="left:3px;top:61px;height:19px"></div><div class="pressed" style="left:266px;top:29px;width:23px;height:23px"></div><div class="pressed" style="left:619px;top:29px;width:23px;height:23px"></div><div class="pressed" style="left:474px;top:58px;width:24px;height:23px"></div><svg class="ic" style="left:13.0px;top:32.0px" width="16" height="16" viewBox="0 0 16 16"><path d="M2.500 3.500h11v11.500h-11z" fill="#fcfdfe" stroke="#22364e" stroke-width="1"/><path d="M1.500 3h3v12.500h-3z" fill="#1f3450"/><path d="M2 3.200L9.500 .8l4.300 2.500-7.300 2.500H2z" fill="#e6ecf2" stroke="#22364e" stroke-width=".8" stroke-linejoin="round"/><path d="M3 2.300l6-1.800" stroke="#1f3450" stroke-width="1.200"/><path d="M6.200 8h5.800M6.200 10.300h5.800M6.200 12.600h5.800" stroke="#6f7c8e" stroke-width="1.100"/></svg><svg class="ic" style="left:47.0px;top:32.0px" width="16" height="16" viewBox="0 0 16 16"><path d="M.8 4.2q0-1 1-1h3.6l1.2 1.6h5.6q1 0 1 1V13q0 1-1 1H1.8q-1 0-1-1z" fill="#f2b21a" stroke="#b87c08" stroke-width=".8"/><path d="M.8 14l2-6.2q.3-.9 1.2-.9h10.400q1 0 .7.900L13.200 14z" fill="#fbd450" stroke="#c08a10" stroke-width=".7"/><path d="M9.200 1h6v6l-2-2-3.200 3.200-2-2L11.200 3z" fill="#e8501c" stroke="#a83008" stroke-width=".6"/></svg><svg class="ic" style="left:81.5px;top:32.0px" width="16" height="16" viewBox="0 0 16 16"><path d="M2 2.500h11.500v12H3.300L2 13.200z" fill="#bcc4d0" stroke="#a2aaba" stroke-width=".8"/><rect x="4.300" y="2.800" width="7" height="5" fill="#dfe4ec"/><rect x="5" y="10.300" width="5.500" height="4" fill="#aab2c0"/><rect x="6" y="11.200" width="1.500" height="2.400" fill="#dfe4ec"/></svg><svg class="ic" style="left:104.5px;top:34.0px" width="17" height="12" viewBox="0 0 17 12"><rect x=".7" y="1" width="11.500" height="8.300" rx=".8" fill="#f4f7fb" stroke="#8a9ab0" stroke-width="1"/><path d="M1 1.500l5.500 4.300L12 1.500" fill="none" stroke="#8a9ab0" stroke-width=".9"/><path d="M9 6.800h3.600V4.600L16.400 8l-3.800 3.400V9.200H9z" fill="#f6a21a" stroke="#b46a08" stroke-width=".7"/></svg><svg class="ic" style="left:135.0px;top:32.0px" width="16" height="16" viewBox="0 0 16 16"><path d="M2 2.500h9.500v12H2z" fill="#e4e8ef" stroke="#b4bcca" stroke-width=".9"/><path d="M4 6h5M4 8.500h3.500M4 11h3" stroke="#c4cbd6" stroke-width="1"/><path d="M13.500 3l1.700 1.700-6.500 7-2.400.900.700-2.500z" fill="#d4dae4" stroke="#b4bcca" stroke-width=".7"/></svg><svg class="ic" style="left:169.0px;top:33.0px" width="14" height="14" viewBox="0 0 14 14"><path d="M1.500 1h8l3 3v9.200h-11z" fill="#fbfbfd" stroke="#a4a4b0" stroke-width=".7"/><path d="M9.500 1l3 3h-3z" fill="#e02818"/><path d="M3.500 3.500h4v2.500h2.500v1.500h-6.500z" fill="#6aa0e0"/><rect x="1.200" y="8.200" width="11.600" height="5" fill="#d6201c"/><text x="7" y="12.300" font-size="4.600" font-family="Liberation Sans,sans-serif" font-weight="bold" fill="#fff" text-anchor="middle">PDF</text></svg><svg class="ic" style="left:190.5px;top:32.5px" width="17" height="15" viewBox="0 0 17 15"><rect x="4" y=".8" width="9" height="6.500" fill="#fbfcfe" stroke="#7a8494" stroke-width=".8"/><path d="M5.500 3h6M5.500 5h6" stroke="#5a9ae0" stroke-width="1.100"/><path d="M1 7.500q0-1 1-1h13q1 0 1 1V12q0 1-1 1H2q-1 0-1-1z" fill="#4a4e58" stroke="#24262c" stroke-width=".8"/><rect x="2.500" y="10.300" width="12" height="3.400" rx=".6" fill="#8ea086" stroke="#2c3028" stroke-width=".7"/><path d="M3 8.200h11" stroke="#8a8e98" stroke-width=".8"/></svg><svg class="ic" style="left:213.0px;top:32.0px" width="16" height="16" viewBox="0 0 16 16"><path d="M1.500 3.500h7l2.500 2.500v9h-9.500z" fill="#fbfcfe" stroke="#8a94a4" stroke-width=".9"/><path d="M10.500 8.500l4.300 4.700" stroke="#c89418" stroke-width="2.400" stroke-linecap="round"/><path d="M10.500 8.500l4.300 4.700" stroke="#f0c848" stroke-width="1" stroke-linecap="round"/><circle cx="8.300" cy="5.200" r="3.800" fill="#cfe6f6" stroke="#4a6a8c" stroke-width="1.200"/><circle cx="7.300" cy="4.200" r="1.500" fill="#fff" opacity=".8"/></svg><svg class="ic" style="left:246.0px;top:32.0px" width="16" height="16" viewBox="0 0 16 16"><text x="8" y="7" font-size="8.600" font-family="Liberation Sans,sans-serif" font-weight="bold" fill="#1e3a5c" text-anchor="middle" letter-spacing="-.5">ABC</text><path d="M3 10l3.500 3.700 7.500-7.200" fill="none" stroke="#1c5ea8" stroke-width="3" stroke-linecap="round" stroke-linejoin="round"/><path d="M3 10l3.500 3.700 7.500-7.200" fill="none" stroke="#5cb0f0" stroke-width="1.400" stroke-linecap="round" stroke-linejoin="round"/></svg><svg class="ic" style="left:269.5px;top:32.0px" width="16" height="16" viewBox="0 0 16 16"><text x="8" y="8" font-size="8.600" font-family="Liberation Sans,sans-serif" font-weight="bold" fill="#1e3a5c" text-anchor="middle" letter-spacing="-.5">ABC</text><path d="M1.500 13q2-3.200 4.200-.8t4.200 0 4.600.3" fill="none" stroke="#e02410" stroke-width="2.600" stroke-linecap="round"/></svg><svg class="ic" style="left:299.5px;top:32.0px" width="16" height="16" viewBox="0 0 16 16"><path d="M3 1.500l7.500 10M13 1.500L5.500 11.500" stroke="#b4bcca" stroke-width="1.700" stroke-linecap="round"/><circle cx="4.300" cy="12.800" r="1.900" fill="none" stroke="#b4bcca" stroke-width="1.300"/><circle cx="11.700" cy="12.800" r="1.900" fill="none" stroke="#b4bcca" stroke-width="1.300"/></svg><svg class="ic" style="left:323.0px;top:32.0px" width="16" height="16" viewBox="0 0 16 16"><path d="M1.500 1.500h6l2 2v6.500h-8z" fill="#e2e6ee" stroke="#b4bcca" stroke-width=".9"/><path d="M6.500 6h6l2 2v6.500h-8z" fill="#e6eaf0" stroke="#b4bcca" stroke-width=".9"/><path d="M8.300 9.500h4M8.300 11.500h4" stroke="#c2c9d5" stroke-width=".9"/></svg><svg class="ic" style="left:344.5px;top:32.5px" width="17" height="15" viewBox="0 0 17 15"><rect x=".8" y="2.500" width="11.500" height="11.500" rx="1" fill="#e9ab1c" stroke="#9a6a08" stroke-width=".9"/><rect x="2.200" y="4.200" width="8.700" height="8.400" fill="#f6cc58"/><path d="M3.800 3.500v-1q0-.8.800-.8h.9q0-1.300 1.100-1.300t1.100 1.300h.9q.8 0 .8.800v1z" fill="#c8ccd4" stroke="#70747c" stroke-width=".7"/><path d="M8 7h5.500l2.300 2.300v5.200H8z" fill="#f8fbfe" stroke="#6a7c94" stroke-width=".8"/><path d="M9.500 10h4.500M9.500 12h4.500" stroke="#5a9ad8" stroke-width="1"/></svg><svg class="ic" style="left:381.0px;top:32.0px" width="16" height="16" viewBox="0 0 16 16"><path d="M9.500 6.800L14 1.300q.7-.6 1.300 0t0 1.300L10.800 8z" fill="#f2c030" stroke="#a87c10" stroke-width=".7"/><path d="M7 5.300l4.500 4.500-5.200 5q-1 .6-2-.2L1 11.400q-.6-.9.200-1.700z" fill="#3f8ee6" stroke="#1c4c94" stroke-width=".8"/><path d="M3 9.200l4.500 4.500M5 7.500l4.500 4.500" stroke="#8cc0f6" stroke-width=".8"/><path d="M8.200 5.800l2.600 2.600 1-1-2.600-2.600z" fill="#a8aeb8" stroke="#5c626c" stroke-width=".5"/></svg><svg class="ic" style="left:410.0px;top:32.0px" width="16" height="16" viewBox="0 0 16 16"><path d="M1 2l.3 7 6.700-.8-2.300-1.800q3-1.600 4.600.8t-2.300 5l2.200 2.300q5.800-3.800 3.300-8.800T3.800 4.600z" fill="#cdd4df" stroke="#b0b9c8" stroke-width="1" stroke-linejoin="round"/></svg><svg class="ic" style="left:444.0px;top:32.0px" width="16" height="16" viewBox="0 0 16 16"><path d="M15 2l-.3 7-6.700-.8 2.300-1.800q-3-1.600-4.600.8t2.300 5L5.800 14.500Q0 10.700 2.500 5.700t9.700-1.100z" fill="#cdd4df" stroke="#b0b9c8" stroke-width="1" stroke-linejoin="round"/></svg><svg class="ic" style="left:487.0px;top:32.0px" width="16" height="16" viewBox="0 0 16 16"><circle cx="8" cy="8" r="7.200" fill="#3f82c8" stroke="#234c7c" stroke-width=".9"/><path d="M3.500 3.500q2.500-2 4.500-1.200L7 5.500 4 7.500 2 6.500zM10 2.800q3 .8 4.400 3.700l-2.200 2-2.400-1.800z" fill="#84c43c"/><path d="M1.500 10.500q2.500 4.300 6.500 4.500t6.500-4.500q-6.500 2.500-13 0z" fill="#2c5a3c" opacity=".55"/><rect x="2.200" y="8.200" width="5.800" height="4.400" rx="2.200" fill="none" stroke="#f4f8fc" stroke-width="1.400"/><rect x="8" y="8.200" width="5.800" height="4.400" rx="2.200" fill="none" stroke="#f4f8fc" stroke-width="1.400"/><path d="M6.500 10.400h3" stroke="#f4f8fc" stroke-width="1.300"/></svg><svg class="ic" style="left:509.0px;top:33.0px" width="16" height="14" viewBox="0 0 16 14"><rect x=".6" y=".6" width="14.800" height="12.800" fill="#fafbfc" stroke="#7c8490" stroke-width="1.100"/><path d="M.6 3.800h14.800M.6 7h14.800M.6 10.200h14.800M5.500 .6v12.800M10.500 .6v12.800" stroke="#9aa2ae" stroke-width=".9"/></svg><svg class="ic" style="left:544.0px;top:32.5px" width="16" height="15" viewBox="0 0 16 15"><path d="M1.500 3.500q3-2.500 4 0t-2 4.500q-1.500 2.500 1 3.500t4-1" fill="none" stroke="#2c6cc0" stroke-width="1.700" stroke-linecap="round"/><path d="M12 2l2.700 2.700-7.500 7.500-3.300 1 .7-3.400z" fill="#f6d23c" stroke="#9c7c14" stroke-width=".7"/><path d="M12 2l2.700 2.700 1-1q.5-.7-.2-1.500l-1-1q-.8-.6-1.500 0z" fill="#f08c9c" stroke="#b04858" stroke-width=".6"/><path d="M4.600 9.800l2.600 2.400-3.300 1z" fill="#3c3c3c"/></svg><svg class="ic" style="left:575.0px;top:32.5px" width="17" height="15" viewBox="0 0 17 15"><path d="M2.500 3.500q0-2.700 2.200-2.700t2.200 2.700L8 13.500q0 1-1 1H1.800q-1 0-1-1zM10.100 3.500q0-2.700 2.200-2.700t2.200 2.700l1.700 10q0 1-1 1H10q-1 0-1-1z" fill="#2c2e32" stroke="#0c0c0e" stroke-width=".7"/><rect x="6.700" y="4.500" width="3.600" height="4.500" fill="#1c1e22"/><path d="M2 9.500h5M10 9.500h5M2 12h5M10 12h5" stroke="#6c7078" stroke-width=".9"/><path d="M3.300 2.200h3M10.700 2.200h3" stroke="#70747c" stroke-width="1"/></svg><svg class="ic" style="left:598.0px;top:32.0px" width="16" height="16" viewBox="0 0 16 16"><circle cx="8" cy="8" r="7" fill="#f6f8fb" stroke="#7c8698" stroke-width="1.500"/><circle cx="8" cy="8" r="5.600" fill="none" stroke="#c8d0dc" stroke-width=".7"/><path d="M8 8L6.300 6.300 13 3z" fill="#2c5cc8"/><path d="M8 8l1.700 1.700L13 3z" fill="#1c3c94"/><path d="M8 8L6.300 6.300 3 13z" fill="#f04030"/><path d="M8 8l1.700 1.700L3 13z" fill="#c01c14"/></svg><svg class="ic" style="left:623.0px;top:33.0px" width="16" height="14" viewBox="0 0 16 14"><rect x=".7" y="1.700" width="14.600" height="11.600" fill="#f09a1c" stroke="#a85c08" stroke-width=".9"/><rect x="2.800" y="3.800" width="10.400" height="7.400" fill="#6cb4f0" stroke="#7c4408" stroke-width=".7"/><path d="M2.800 11.200V9l3-2.700L9 9.300l1.700-1.400 2.500 2v1.300z" fill="#4ca82c"/><path d="M4 1.500V.6M8 1.500V.6M12 1.500V.6" stroke="#a85c08" stroke-width="1.200"/></svg><svg class="ic" style="left:646.5px;top:32.5px" width="14" height="15" viewBox="0 0 14 15"><path d="M1 3.200v8.600q0 2.400 6 2.400t6-2.400V3.200z" fill="#d4d8dc" stroke="#6c7078" stroke-width=".9"/><ellipse cx="7" cy="3.200" rx="6" ry="2.400" fill="#f4f6f8" stroke="#6c7078" stroke-width=".9"/><path d="M1 6.200q0 2.400 6 2.400t6-2.400M1 9.200q0 2.400 6 2.400t6-2.400" fill="none" stroke="#6c7078" stroke-width=".9"/></svg><svg class="ic" style="left:671.0px;top:33.0px" width="12" height="14" viewBox="0 0 12 14"><path d="M5.800 1h5.700v2.300h-1.400V13.500H8.200V3.300H6.900V13.500H5V8Q.8 8 .8 4.500T5.800 1z" fill="#1f5070" stroke="#123248" stroke-width=".5"/></svg><svg class="ic" style="left:692.5px;top:32.0px" width="16" height="16" viewBox="0 0 16 16"><path d="M9.700 9.700l4.800 4.800" stroke="#b8860c" stroke-width="2.800" stroke-linecap="round"/><path d="M9.700 9.700l4.800 4.800" stroke="#f4cc48" stroke-width="1.200" stroke-linecap="round"/><circle cx="6.300" cy="6.300" r="5" fill="#d4e8f6" stroke="#6c8098" stroke-width="1.400"/><circle cx="5.200" cy="5" r="2" fill="#fff" opacity=".7"/></svg><svg class="ic" style="left:724.0px;top:32.0px" width="16" height="16" viewBox="0 0 16 16"><circle cx="8" cy="8" r="7.400" fill="#1f55b0" stroke="#123878" stroke-width=".8"/><path d="M2 6q6-6 12 0-6-2.500-12 0z" fill="#5c8cd8" opacity=".8"/><text x="8" y="12.200" font-size="11.500" font-family="Liberation Sans,sans-serif" font-weight="bold" fill="#fff" text-anchor="middle">?</text></svg><svg class="ic" style="left:871.5px;top:32.5px" width="13" height="15" viewBox="0 0 13 15"><path d="M4.700 1h3.600v6.500h3.500L6.500 13.800 1.200 7.500h3.500z" fill="#bcdcf0" stroke="#4c84b0" stroke-width="1.200" stroke-linejoin="round"/></svg><svg class="ic" style="left:894.5px;top:32.5px" width="13" height="15" viewBox="0 0 13 15"><path d="M4.700 14h3.600V7.500h3.500L6.500 1.200 1.200 7.500h3.500z" fill="#bcdcf0" stroke="#4c84b0" stroke-width="1.200" stroke-linejoin="round"/></svg><div class="dd" style="left:35px;top:39px"></div><div class="dd" style="left:69px;top:39px"></div><div class="dd" style="left:368px;top:39px"></div><div class="dd dis" style="left:432.5px;top:39px"></div><div class="dd dis" style="left:467px;top:39px"></div><div class="dd" style="left:532px;top:39px"></div><div class="sep" style="left:128px;top:31px;height:18px"></div><div class="sep" style="left:159px;top:31px;height:18px"></div><div class="sep" style="left:238px;top:31px;height:18px"></div><div class="sep" style="left:404px;top:31px;height:18px"></div><div class="sep" style="left:479px;top:31px;height:18px"></div><div class="sep" style="left:568px;top:31px;height:18px"></div><div class="sep" style="left:716px;top:31px;height:18px"></div><div class="ovf" style="left:750px;top:29px;height:23px"></div><div class="ovf" style="left:919px;top:29px;height:23px"></div><div class="ovf" style="left:785px;top:58px;height:23px"></div><div class="combo" style="left:773px;top:31px;width:93px;height:20px"><span style="color:#8a8a8a">Find</span><div class="cbtn"></div></div><svg class="ic" style="left:13.0px;top:62.5px" width="16" height="15" viewBox="0 0 16 15"><path d="M3.500 .8h11.700v8.500l-3.500 3.500h-8.200z" fill="#f6f8fa" stroke="#8c94a0" stroke-width=".9"/><path d="M15.200 9.300h-3.500v3.500" fill="none" stroke="#8c94a0" stroke-width=".8"/><rect x=".7" y="5.500" width="7.300" height="8.700" fill="#e4e8ec" stroke="#6c7480" stroke-width=".9"/><path d="M4.200 7.300h2.300v.9h-.6v4.500h-.8V8.200h-.5v4.500h-.8V10Q2.300 10 2.300 8.600t1.900-1.300z" fill="#3c4450"/></svg><div class="combo" style="left:42px;top:60px;width:127px;height:21px"><span style="top:3.5px">Default</span><div class="cbtn"></div></div><div class="combo" style="left:178px;top:60px;width:143px;height:21px"><span style="top:3.5px">Times New Roman</span><div class="cbtn"></div></div><div class="combo" style="left:330px;top:60px;width:57px;height:21px"><span style="top:3.5px">12</span><div class="cbtn"></div></div><svg class="ic" style="left:402.0px;top:63.0px" width="12" height="14" viewBox="0 0 12 14"><text x="6" y="12.300" font-size="15" font-family="Liberation Sans,sans-serif" font-weight="bold" fill="#1d3f58" text-anchor="middle">B</text></svg><svg class="ic" style="left:425.0px;top:63.0px" width="12" height="14" viewBox="0 0 12 14"><text x="6" y="12.300" font-size="15" font-family="Liberation Sans,sans-serif" font-weight="bold" font-style="italic" fill="#1d3f58" text-anchor="middle">I</text></svg><svg class="ic" style="left:449.0px;top:62.5px" width="12" height="15" viewBox="0 0 12 15"><text x="6" y="11.500" font-size="14" font-family="Liberation Sans,sans-serif" fill="#1d3f58" text-anchor="middle">U</text><path d="M.8 13.700h10.400" stroke="#1d3f58" stroke-width="1.100"/></svg><svg class="ic" style="left:480.0px;top:64.5px" width="12" height="11" viewBox="0 0 12 11"><rect x="0" y="1.00" width="12" height="1.500" fill="#3a4250"/><rect x="0" y="3.45" width="9" height="1.500" fill="#3a4250"/><rect x="0" y="5.90" width="12" height="1.500" fill="#3a4250"/><rect x="0" y="8.35" width="9" height="1.500" fill="#3a4250"/></svg><svg class="ic" style="left:503.0px;top:64.5px" width="12" height="11" viewBox="0 0 12 11"><rect x="1.5" y="1.00" width="9.0" height="1.500" fill="#3a4250"/><rect x="0" y="3.45" width="12" height="1.500" fill="#3a4250"/><rect x="1.5" y="5.90" width="9.0" height="1.500" fill="#3a4250"/><rect x="0" y="8.35" width="12" height="1.500" fill="#3a4250"/></svg><svg class="ic" style="left:526.5px;top:64.5px" width="12" height="11" viewBox="0 0 12 11"><rect x="0" y="1.00" width="12" height="1.500" fill="#3a4250"/><rect x="3" y="3.45" width="9" height="1.500" fill="#3a4250"/><rect x="0" y="5.90" width="12" height="1.500" fill="#3a4250"/><rect x="3" y="8.35" width="9" height="1.500" fill="#3a4250"/></svg><svg class="ic" style="left:550.0px;top:64.5px" width="12" height="11" viewBox="0 0 12 11"><rect x="0" y="1.00" width="12" height="1.500" fill="#3a4250"/><rect x="0" y="3.45" width="12" height="1.500" fill="#3a4250"/><rect x="0" y="5.90" width="12" height="1.500" fill="#3a4250"/><rect x="0" y="8.35" width="12" height="1.500" fill="#3a4250"/></svg><svg class="ic" style="left:580.0px;top:64.0px" width="15" height="12" viewBox="0 0 15 12"><path d="M1 1h2.500M2.200 1v3.600M1 4.600h2.500" stroke="#5c6c80" stroke-width=".9" fill="none"/><path d="M1 7.400h2.500v1.800h-2.500v1.800h2.500" stroke="#4c8cd0" stroke-width=".9" fill="none"/><path d="M6.500 1.600h7.500M6.500 4h5.500M6.500 7.800h7.500M6.500 10.200h5.500" stroke="#3a4250" stroke-width="1.500"/></svg><svg class="ic" style="left:603.0px;top:64.0px" width="15" height="12" viewBox="0 0 15 12"><circle cx="2.200" cy="2.800" r="2" fill="#2c465c"/><circle cx="2.200" cy="9" r="2" fill="#2c465c"/><path d="M6.500 1.600h7.500M6.500 4h5.500M6.500 7.800h7.500M6.500 10.200h5.500" stroke="#3a4250" stroke-width="1.500"/></svg><svg class="ic" style="left:626.0px;top:63.0px" width="16" height="14" viewBox="0 0 16 14"><path d="M6 1h9M6 12.500h9" stroke="#7c8490" stroke-width="1.100"/><path d="M8.500 4h6.500M8.500 6.700h6.500M8.500 9.400h6.500" stroke="#2c7cd0" stroke-width="1.400"/><path d="M7.500 5.300H4.600V3L.6 6.700l4 3.700V8.100h2.900z" fill="#f0641c" stroke="#a83808" stroke-width=".7" stroke-linejoin="round"/></svg><svg class="ic" style="left:650.5px;top:63.0px" width="16" height="14" viewBox="0 0 16 14"><path d="M6 1h9M6 12.500h9" stroke="#7c8490" stroke-width="1.100"/><path d="M8.500 4h6.500M8.500 6.700h6.500M8.500 9.400h6.500" stroke="#2c7cd0" stroke-width="1.400"/><path d="M.6 5.300h2.900V3l4 3.700-4 3.700V8.100H.6z" fill="#f0641c" stroke="#a83808" stroke-width=".7" stroke-linejoin="round"/></svg><svg class="ic" style="left:679.5px;top:62.5px" width="17" height="15" viewBox="0 0 17 15"><text x="8.500" y="10" font-size="13" font-family="Liberation Sans,sans-serif" font-weight="bold" fill="#e4eef6" stroke="#1d4a72" stroke-width="1.300" text-anchor="middle">A</text><rect x=".5" y="11.200" width="16" height="3.500" fill="#a81414"/></svg><svg class="ic" style="left:714.0px;top:62.5px" width="16" height="15" viewBox="0 0 16 15"><rect x=".5" y=".5" width="9.500" height="8" fill="#f6f020"/><text x="5" y="7.200" font-size="8.500" font-family="Liberation Sans,sans-serif" fill="#3c3c1c" text-anchor="middle">ab</text><path d="M12.500 1.500l2.500 2L9.500 10.300l-2.600.8.300-2.700z" fill="#f0f2f6" stroke="#50586c" stroke-width=".8"/><path d="M6.900 11.100l.3-2.700 2.300 1.900z" fill="#3c3c3c"/><rect x=".5" y="11.500" width="15" height="3.300" fill="#f6f020"/></svg><svg class="ic" style="left:747.0px;top:62.5px" width="16" height="15" viewBox="0 0 16 15"><path d="M3 5.500l5-3.500 5.500 4.500-5.500 4.500-4-1.500z" fill="#eef2f6" stroke="#4c5464" stroke-width=".9" stroke-linejoin="round"/><ellipse cx="7" cy="3" rx="3.400" ry="1.800" fill="#c4ccd8" stroke="#4c5464" stroke-width=".8"/><path d="M11.500 4.500q3 .5 2.500 5.500-1.500-2.500-3.500-3z" fill="#2c7cd0"/><rect x=".8" y="11.300" width="14.400" height="3.200" fill="#fbfbfb" stroke="#2c3440" stroke-width=".9"/></svg><div class="dd" style="left:702px;top:69px"></div><div class="dd" style="left:736px;top:69px"></div><div class="dd" style="left:770px;top:69px"></div><div class="sep" style="left:572px;top:61px;height:18px"></div><div class="sep" style="left:674px;top:61px;height:18px"></div>
 <div class="abs" id="panel"><div class="abs" style="left:0;top:0;width:976px;height:1px;background:#fbfbfb"></div><div class="btn" style="left:8px;top:9px;width:128px;height:22px;line-height:18.5px">New Theme...</div><div class="pressed" style="left:143px;top:9px;width:23px;height:23px;background:linear-gradient(#d9d9d9,#ececec);border-color:#8a8a8a"></div><svg class="ic" style="left:147.0px;top:14.0px" width="15" height="13" viewBox="0 0 15 13"><rect x=".5" y=".5" width="14" height="12" fill="#fbfcfd" stroke="#8c949c" stroke-width="1"/><rect x="2.300" y="2.200" width="4.300" height="3.500" fill="#2c6cd0"/><rect x="8.300" y="2.200" width="4.300" height="3.500" fill="#2c6cd0"/><rect x="2.300" y="7.300" width="4.300" height="3.500" fill="#2c6cd0"/><rect x="8.300" y="7.300" width="4.300" height="3.500" fill="#2c6cd0"/></svg><svg class="ic" style="left:170.0px;top:13.5px" width="15" height="13" viewBox="0 0 15 13"><rect x=".5" y=".5" width="14" height="12" fill="#fbfcfd" stroke="#8c949c" stroke-width="1"/><rect x="2" y="2" width="2.300" height="2.200" fill="#2c6cd0"/><rect x="2" y="5.400" width="2.300" height="2.200" fill="#2c6cd0"/><rect x="2" y="8.800" width="2.300" height="2.200" fill="#2c6cd0"/><path d="M6 3.100h7M6 6.500h7M6 9.900h7" stroke="#848c98" stroke-width="1.100"/></svg><div class="sep" style="left:192px;top:7px;height:28px;background:#b4b4b4;box-shadow:1px 0 0 #fff"></div><div class="abs" id="hdr" style="left:197.5px;top:13.5px;font-weight:bold;font-size:11.6px;white-space:nowrap;letter-spacing:-0.5px;word-spacing:.6px">Backgrounds - aqua (C:<span class="bs">\</span>Program Files (x86)<span class="bs">\</span>OpenOffice 4<span class="bs">\</span>share<span class="bs">\</span>gallery<span class="bs">\</span>www-back<span class="bs">\</span>aqua.jpg)</div><div class="abs" id="list" style="left:7px;top:35px;width:130px;height:450px"><div class="li" style="top:1.00px"><svg class="ic" style="left:1.0px;top:0.5px" width="14" height="14" viewBox="0 0 14 14"><path d="M4.500 3L7 .7 9.500 3" fill="none" stroke="#6c6c6c" stroke-width=".9"/><rect x=".6" y="3" width="12.800" height="10.400" rx=".8" fill="#585858" stroke="#3c3c3c" stroke-width=".8"/><rect x="2.700" y="5.300" width="8.600" height="5.800" fill="#f8da44"/><rect x="2.700" y="5.300" width="8.600" height="2" fill="#fbe87c"/></svg><span>Arrows</span></div><div class="li sel" style="top:17.93px"><svg class="ic" style="left:1.0px;top:0.5px" width="14" height="14" viewBox="0 0 14 14"><path d="M4.500 3L7 .7 9.500 3" fill="none" stroke="#6c6c6c" stroke-width=".9"/><rect x=".6" y="3" width="12.800" height="10.400" rx=".8" fill="#585858" stroke="#3c3c3c" stroke-width=".8"/><rect x="2.700" y="5.300" width="8.600" height="5.800" fill="#f8da44"/><rect x="2.700" y="5.300" width="8.600" height="2" fill="#fbe87c"/></svg><span>Backgrounds</span></div><div class="li" style="top:34.86px"><svg class="ic" style="left:1.0px;top:0.5px" width="14" height="14" viewBox="0 0 14 14"><path d="M4.500 3L7 .7 9.500 3" fill="none" stroke="#6c6c6c" stroke-width=".9"/><rect x=".6" y="3" width="12.800" height="10.400" rx=".8" fill="#585858" stroke="#3c3c3c" stroke-width=".8"/><rect x="2.700" y="5.300" width="8.600" height="5.800" fill="#f8da44"/><rect x="2.700" y="5.300" width="8.600" height="2" fill="#fbe87c"/></svg><span>Bullets</span></div><div class="li" style="top:51.79px"><svg class="ic" style="left:1.0px;top:0.5px" width="14" height="14" viewBox="0 0 14 14"><path d="M4.500 3L7 .7 9.500 3" fill="none" stroke="#6c6c6c" stroke-width=".9"/><rect x=".6" y="3" width="12.800" height="10.400" rx=".8" fill="#585858" stroke="#3c3c3c" stroke-width=".8"/><rect x="2.700" y="5.300" width="8.600" height="5.800" fill="#f8da44"/><rect x="2.700" y="5.300" width="8.600" height="2" fill="#fbe87c"/></svg><span>Computers</span></div><div class="li" style="top:68.72px"><svg class="ic" style="left:1.0px;top:0.5px" width="14" height="14" viewBox="0 0 14 14"><path d="M4.500 3L7 .7 9.500 3" fill="none" stroke="#6c6c6c" stroke-width=".9"/><rect x=".6" y="3" width="12.800" height="10.400" rx=".8" fill="#585858" stroke="#3c3c3c" stroke-width=".8"/><rect x="2.700" y="5.300" width="8.600" height="5.800" fill="#f8da44"/><rect x="2.700" y="5.300" width="8.600" height="2" fill="#fbe87c"/></svg><span>Diagrams</span></div><div class="li" style="top:85.65px"><svg class="ic" style="left:1.0px;top:0.5px" width="14" height="14" viewBox="0 0 14 14"><path d="M4.500 3L7 .7 9.500 3" fill="none" stroke="#6c6c6c" stroke-width=".9"/><rect x=".6" y="3" width="12.800" height="10.400" rx=".8" fill="#585858" stroke="#3c3c3c" stroke-width=".8"/><rect x="2.700" y="5.300" width="8.600" height="5.800" fill="#f8da44"/><rect x="2.700" y="5.300" width="8.600" height="2" fill="#fbe87c"/></svg><span>Environment</span></div><div class="li" style="top:102.58px"><svg class="ic" style="left:1.0px;top:0.5px" width="14" height="14" viewBox="0 0 14 14"><path d="M4.500 3L7 .7 9.500 3" fill="none" stroke="#6c6c6c" stroke-width=".9"/><rect x=".6" y="3" width="12.800" height="10.400" rx=".8" fill="#585858" stroke="#3c3c3c" stroke-width=".8"/><rect x="2.700" y="5.300" width="8.600" height="5.800" fill="#f8da44"/><rect x="2.700" y="5.300" width="8.600" height="2" fill="#fbe87c"/></svg><span>Finance</span></div><div class="li" style="top:119.51px"><svg class="ic" style="left:1.0px;top:0.5px" width="14" height="14" viewBox="0 0 14 14"><path d="M4.500 3L7 .7 9.500 3" fill="none" stroke="#6c6c6c" stroke-width=".9"/><rect x=".6" y="3" width="12.800" height="10.400" rx=".8" fill="#585858" stroke="#3c3c3c" stroke-width=".8"/><rect x="2.700" y="5.300" width="8.600" height="5.800" fill="#f8da44"/><rect x="2.700" y="5.300" width="8.600" height="2" fill="#fbe87c"/></svg><span>Homepage</span></div><div class="li" style="top:136.44px"><svg class="ic" style="left:1.0px;top:0.5px" width="14" height="14" viewBox="0 0 14 14"><path d="M4.500 3L7 .7 9.500 3" fill="none" stroke="#6c6c6c" stroke-width=".9"/><rect x=".6" y="3" width="12.800" height="10.400" rx=".8" fill="#585858" stroke="#3c3c3c" stroke-width=".8"/><rect x="2.700" y="5.300" width="8.600" height="5.800" fill="#8cc43c"/><rect x="2.700" y="5.300" width="8.600" height="2" fill="#b4dc6c"/></svg><span>My Theme</span></div><div class="li" style="top:153.37px"><svg class="ic" style="left:1.0px;top:0.5px" width="14" height="14" viewBox="0 0 14 14"><path d="M4.500 3L7 .7 9.500 3" fill="none" stroke="#6c6c6c" stroke-width=".9"/><rect x=".6" y="3" width="12.800" height="10.400" rx=".8" fill="#585858" stroke="#3c3c3c" stroke-width=".8"/><rect x="2.700" y="5.300" width="8.600" height="5.800" fill="#f8da44"/><rect x="2.700" y="5.300" width="8.600" height="2" fill="#fbe87c"/></svg><span>People</span></div><div class="li" style="top:170.30px"><svg class="ic" style="left:1.0px;top:0.5px" width="14" height="14" viewBox="0 0 14 14"><path d="M4.500 3L7 .7 9.500 3" fill="none" stroke="#6c6c6c" stroke-width=".9"/><rect x=".6" y="3" width="12.800" height="10.400" rx=".8" fill="#585858" stroke="#3c3c3c" stroke-width=".8"/><rect x="2.700" y="5.300" width="8.600" height="5.800" fill="#f8da44"/><rect x="2.700" y="5.300" width="8.600" height="2" fill="#fbe87c"/></svg><span>Rulers</span></div><div class="li" style="top:187.23px"><svg class="ic" style="left:1.0px;top:0.5px" width="14" height="14" viewBox="0 0 14 14"><path d="M4.500 3L7 .7 9.500 3" fill="none" stroke="#6c6c6c" stroke-width=".9"/><rect x=".6" y="3" width="12.800" height="10.400" rx=".8" fill="#585858" stroke="#3c3c3c" stroke-width=".8"/><rect x="2.700" y="5.300" width="8.600" height="5.800" fill="#f8da44"/><rect x="2.700" y="5.300" width="8.600" height="2" fill="#fbe87c"/></svg><span>School &amp; University</span></div><div class="li" style="top:204.16px"><svg class="ic" style="left:1.0px;top:0.5px" width="14" height="14" viewBox="0 0 14 14"><path d="M4.500 3L7 .7 9.500 3" fill="none" stroke="#6c6c6c" stroke-width=".9"/><rect x=".6" y="3" width="12.800" height="10.400" rx=".8" fill="#585858" stroke="#3c3c3c" stroke-width=".8"/><rect x="2.700" y="5.300" width="8.600" height="5.800" fill="#f8da44"/><rect x="2.700" y="5.300" width="8.600" height="2" fill="#fbe87c"/></svg><span>Sounds</span></div><div class="li" style="top:221.09px"><svg class="ic" style="left:1.0px;top:0.5px" width="14" height="14" viewBox="0 0 14 14"><path d="M4.500 3L7 .7 9.500 3" fill="none" stroke="#6c6c6c" stroke-width=".9"/><rect x=".6" y="3" width="12.800" height="10.400" rx=".8" fill="#585858" stroke="#3c3c3c" stroke-width=".8"/><rect x="2.700" y="5.300" width="8.600" height="5.800" fill="#f8da44"/><rect x="2.700" y="5.300" width="8.600" height="2" fill="#fbe87c"/></svg><span>Symbols</span></div><div class="li" style="top:238.02px"><svg class="ic" style="left:1.0px;top:0.5px" width="14" height="14" viewBox="0 0 14 14"><path d="M4.500 3L7 .7 9.500 3" fill="none" stroke="#6c6c6c" stroke-width=".9"/><rect x=".6" y="3" width="12.800" height="10.400" rx=".8" fill="#585858" stroke="#3c3c3c" stroke-width=".8"/><rect x="2.700" y="5.300" width="8.600" height="5.800" fill="#f8da44"/><rect x="2.700" y="5.300" width="8.600" height="2" fill="#fbe87c"/></svg><span>Textshapes</span></div><div class="li" style="top:254.95px"><svg class="ic" style="left:1.0px;top:0.5px" width="14" height="14" viewBox="0 0 14 14"><path d="M4.500 3L7 .7 9.500 3" fill="none" stroke="#6c6c6c" stroke-width=".9"/><rect x=".6" y="3" width="12.800" height="10.400" rx=".8" fill="#585858" stroke="#3c3c3c" stroke-width=".8"/><rect x="2.700" y="5.300" width="8.600" height="5.800" fill="#f8da44"/><rect x="2.700" y="5.300" width="8.600" height="2" fill="#fbe87c"/></svg><span>Transport</span></div></div><div class="abs" id="gview" style="left:140px;top:37px;width:787px;height:448px"><div class="abs" style="left:2px;top:0px;width:81px;height:81px;border:2px solid #000"></div><div class="abs" style="left:5px;top:3px;width:75px;height:75px;border:2px solid #000"></div><div class="th" style="left:7px;top:5px;width:71px;height:71px"><svg width="71" height="71" viewBox="0 0 75 75"><rect width="75" height="75" filter="url(#f0)"/></svg></div><div class="th" style="left:88px;top:3px"><svg width="75" height="75" viewBox="0 0 75 75"><rect width="75" height="75" fill="#e8f1fb"/><rect x="2" y="2" width="21.600" height="21.600" fill="#a6caf0"/><path d="M2 23.6h21.600v-21.600" fill="none" stroke="#8cb4e0" stroke-width="1"/><path d="M2 23.6v-21.600h21.600" fill="none" stroke="#c0dcf6" stroke-width="1"/><rect x="26.7" y="2" width="21.600" height="21.600" fill="#a6caf0"/><path d="M26.7 23.6h21.600v-21.600" fill="none" stroke="#8cb4e0" stroke-width="1"/><path d="M26.7 23.6v-21.600h21.600" fill="none" stroke="#c0dcf6" stroke-width="1"/><rect x="51.4" y="2" width="21.600" height="21.600" fill="#a6caf0"/><path d="M51.4 23.6h21.600v-21.600" fill="none" stroke="#8cb4e0" stroke-width="1"/><path d="M51.4 23.6v-21.600h21.600" fill="none" stroke="#c0dcf6" stroke-width="1"/><rect x="2" y="26.7" width="21.600" height="21.600" fill="#a6caf0"/><path d="M2 48.3h21.600v-21.600" fill="none" stroke="#8cb4e0" stroke-width="1"/><path d="M2 48.3v-21.600h21.600" fill="none" stroke="#c0dcf6" stroke-width="1"/><rect x="26.7" y="26.7" width="21.600" height="21.600" fill="#a6caf0"/><path d="M26.7 48.3h21.600v-21.600" fill="none" stroke="#8cb4e0" stroke-width="1"/><path d="M26.7 48.3v-21.600h21.600" fill="none" stroke="#c0dcf6" stroke-width="1"/><rect x="51.4" y="26.7" width="21.600" height="21.600" fill="#a6caf0"/><path d="M51.4 48.3h21.600v-21.600" fill="none" stroke="#8cb4e0" stroke-width="1"/><path d="M51.4 48.3v-21.600h21.600" fill="none" stroke="#c0dcf6" stroke-width="1"/><rect x="2" y="51.4" width="21.600" height="21.600" fill="#a6caf0"/><path d="M2 73.0h21.600v-21.600" fill="none" stroke="#8cb4e0" stroke-width="1"/><path d="M2 73.0v-21.600h21.600" fill="none" stroke="#c0dcf6" stroke-width="1"/><rect x="26.7" y="51.4" width="21.600" height="21.600" fill="#a6caf0"/><path d="M26.7 73.0h21.600v-21.600" fill="none" stroke="#8cb4e0" stroke-width="1"/><path d="M26.7 73.0v-21.600h21.600" fill="none" stroke="#c0dcf6" stroke-width="1"/><rect x="51.4" y="51.4" width="21.600" height="21.600" fill="#a6caf0"/><path d="M51.4 73.0h21.600v-21.600" fill="none" stroke="#8cb4e0" stroke-width="1"/><path d="M51.4 73.0v-21.600h21.600" fill="none" stroke="#c0dcf6" stroke-width="1"/></svg></div><div class="th" style="left:171px;top:3px"><svg width="75" height="75" viewBox="0 0 75 75"><rect width="75" height="75" fill="#0818a8"/><rect x="0.0" y="0.0" width="9.7" height="9.7" fill="#0c22b8"/><rect x="9.4" y="0.0" width="9.7" height="9.7" fill="#0c22b8"/><rect x="18.8" y="0.0" width="9.7" height="9.7" fill="#0816a0"/><rect x="28.1" y="0.0" width="9.7" height="9.7" fill="#0816a0"/><rect x="37.5" y="0.0" width="9.7" height="9.7" fill="#0816a0"/><rect x="46.9" y="0.0" width="9.7" height="9.7" fill="#0818a8"/><rect x="56.2" y="0.0" width="9.7" height="9.7" fill="#1030c0"/><rect x="65.6" y="0.0" width="9.7" height="9.7" fill="#2c7cec"/><path d="M75.0 0.0v9.4" stroke="#48a0f8" stroke-width="1"/><rect x="0.0" y="9.4" width="9.7" height="9.7" fill="#0c22b8"/><rect x="9.4" y="9.4" width="9.7" height="9.7" fill="#0816a0"/><rect x="18.8" y="9.4" width="9.7" height="9.7" fill="#1438c8"/><rect x="28.1" y="9.4" width="9.7" height="9.7" fill="#1438c8"/><rect x="37.5" y="9.4" width="9.7" height="9.7" fill="#0818a8"/><rect x="46.9" y="9.4" width="9.7" height="9.7" fill="#1840d0"/><rect x="56.2" y="9.4" width="9.7" height="9.7" fill="#2468e4"/><rect x="65.6" y="9.4" width="9.7" height="9.7" fill="#1840d0"/><path d="M75.0 9.4v9.4" stroke="#48a0f8" stroke-width="1"/><rect x="0.0" y="18.8" width="9.7" height="9.7" fill="#1238c8"/><rect x="9.4" y="18.8" width="9.7" height="9.7" fill="#0818a8"/><rect x="18.8" y="18.8" width="9.7" height="9.7" fill="#061298"/><rect x="28.1" y="18.8" width="9.7" height="9.7" fill="#0816a0"/><rect x="37.5" y="18.8" width="9.7" height="9.7" fill="#0818a8"/><rect x="46.9" y="18.8" width="9.7" height="9.7" fill="#143ccc"/><rect x="56.2" y="18.8" width="9.7" height="9.7" fill="#143ccc"/><path d="M65.6 18.8v9.4" stroke="#48a0f8" stroke-width="1"/><rect x="65.6" y="18.8" width="9.7" height="9.7" fill="#1840d0"/><rect x="0.0" y="28.1" width="9.7" height="9.7" fill="#1238c8"/><rect x="9.4" y="28.1" width="9.7" height="9.7" fill="#0818a8"/><rect x="18.8" y="28.1" width="9.7" height="9.7" fill="#0818a8"/><rect x="28.1" y="28.1" width="9.7" height="9.7" fill="#1030c0"/><rect x="37.5" y="28.1" width="9.7" height="9.7" fill="#143ccc"/><rect x="46.9" y="28.1" width="9.7" height="9.7" fill="#1840d0"/><path d="M56.2 28.1v9.4" stroke="#48a0f8" stroke-width="1"/><rect x="56.2" y="28.1" width="9.7" height="9.7" fill="#1840d0"/><rect x="65.6" y="28.1" width="9.7" height="9.7" fill="#0818a8"/><rect x="0.0" y="37.5" width="9.7" height="9.7" fill="#1238c8"/><rect x="9.4" y="37.5" width="9.7" height="9.7" fill="#0a1eb4"/><rect x="18.8" y="37.5" width="9.7" height="9.7" fill="#1840d0"/><rect x="28.1" y="37.5" width="9.7" height="9.7" fill="#2468e4"/><rect x="37.5" y="37.5" width="9.7" height="9.7" fill="#2468e4"/><rect x="46.9" y="37.5" width="9.7" height="9.7" fill="#0c22b8"/><rect x="56.2" y="37.5" width="9.7" height="9.7" fill="#0818a8"/><rect x="65.6" y="37.5" width="9.7" height="9.7" fill="#1438c8"/><rect x="0.0" y="46.9" width="9.7" height="9.7" fill="#1238c8"/><rect x="9.4" y="46.9" width="9.7" height="9.7" fill="#1840d0"/><rect x="18.8" y="46.9" width="9.7" height="9.7" fill="#1c4cd8"/><rect x="28.1" y="46.9" width="9.7" height="9.7" fill="#0818a8"/><rect x="37.5" y="46.9" width="9.7" height="9.7" fill="#1234c4"/><rect x="46.9" y="46.9" width="9.7" height="9.7" fill="#0816a0"/><rect x="56.2" y="46.9" width="9.7" height="9.7" fill="#061298"/><rect x="65.6" y="46.9" width="9.7" height="9.7" fill="#0818a8"/><rect x="0.0" y="56.2" width="9.7" height="9.7" fill="#0816a0"/><rect x="9.4" y="56.2" width="9.7" height="9.7" fill="#1840d0"/><rect x="18.8" y="56.2" width="9.7" height="9.7" fill="#143ccc"/><rect x="28.1" y="56.2" width="9.7" height="9.7" fill="#0c22b8"/><rect x="37.5" y="56.2" width="9.7" height="9.7" fill="#0a1cb0"/><rect x="46.9" y="56.2" width="9.7" height="9.7" fill="#0a1cb0"/><rect x="56.2" y="56.2" width="9.7" height="9.7" fill="#061298"/><rect x="65.6" y="56.2" width="9.7" height="9.7" fill="#0816a0"/><rect x="0.0" y="65.6" width="9.7" height="9.7" fill="#143ccc"/><path d="M9.4 65.6v9.4" stroke="#48a0f8" stroke-width="1"/><rect x="9.4" y="65.6" width="9.7" height="9.7" fill="#2c7cec"/><rect x="18.8" y="65.6" width="9.7" height="9.7" fill="#0c22b8"/><rect x="28.1" y="65.6" width="9.7" height="9.7" fill="#1438c8"/><rect x="37.5" y="65.6" width="9.7" height="9.7" fill="#1438c8"/><rect x="46.9" y="65.6" width="9.7" height="9.7" fill="#061298"/><rect x="56.2" y="65.6" width="9.7" height="9.7" fill="#0a1eb4"/><rect x="65.6" y="65.6" width="9.7" height="9.7" fill="#0c22b8"/></svg></div><div class="th" style="left:253px;top:3px"><svg width="75" height="75" viewBox="0 0 75 75"><g transform="rotate(28 37 37) scale(1.5) translate(-12 -12)"><rect width="75" height="75" filter="url(#f2)"/></g></svg></div><div class="th" style="left:336px;top:3px"><svg width="75" height="75" viewBox="0 0 75 75"><rect width="75" height="75" fill="#00040c"/><g filter="url(#f3)"><ellipse cx="22" cy="9" rx="17" ry="7" fill="#0e3e72" transform="rotate(-12 22 9)"/><path d="M14 30 C22 20 40 24 46 32 C50 42 44 56 34 56 C22 58 10 46 14 30z" fill="#104478"/><ellipse cx="63" cy="32" rx="8" ry="14" fill="#0e3c70"/><ellipse cx="54" cy="64" rx="14" ry="8" fill="#0e3a6c" transform="rotate(-20 54 64)"/><ellipse cx="30" cy="40" rx="10" ry="8" fill="#164e88"/></g><circle cx="14" cy="26" r="5" fill="#020a1c" opacity=".9"/><circle cx="12.5" cy="24.8" r=".8" fill="#dfe8f0" filter="url(#f4)"/><circle cx="32" cy="26" r="3.5" fill="#020a1c" opacity=".9"/><circle cx="30.5" cy="24.8" r=".8" fill="#dfe8f0" filter="url(#f4)"/><circle cx="14" cy="64" r="6" fill="#020a1c" opacity=".9"/><circle cx="12.5" cy="62.8" r=".8" fill="#dfe8f0" filter="url(#f4)"/><circle cx="60" cy="4" r="2.2" fill="#020a1c" opacity=".9"/><circle cx="58.5" cy="2.8" r=".8" fill="#dfe8f0" filter="url(#f4)"/></svg></div><div class="th" style="left:419px;top:3px"><svg width="75" height="75" viewBox="0 0 75 75"><rect width="75" height="75" filter="url(#f5)"/></svg></div><div class="th" style="left:502px;top:3px"><svg width="75" height="75" viewBox="0 0 75 75"><rect width="75" height="75" filter="url(#f6)"/></svg></div><div class="th" style="left:585px;top:3px"><svg width="75" height="75" viewBox="0 0 75 75"><rect width="75" height="75" fill="#f6eca6"/><defs><linearGradient id="ch" x1=".2" y1=".1" x2=".8" y2=".9"><stop offset="0" stop-color="#c4b458"/><stop offset=".45" stop-color="#e0d47c"/><stop offset="1" stop-color="#f0e698"/></linearGradient></defs><circle cx="18" cy="27" r="7.5" fill="url(#ch)"/><path d="M12.0 31.5a7.5 7.5 0 0 0 12.8 -6.8" fill="none" stroke="#fdf9d4" stroke-width="1.100" opacity=".9"/><circle cx="63" cy="12" r="7.5" fill="url(#ch)"/><path d="M57.0 16.5a7.5 7.5 0 0 0 12.8 -6.8" fill="none" stroke="#fdf9d4" stroke-width="1.100" opacity=".9"/><circle cx="21" cy="48" r="4" fill="url(#ch)"/><path d="M17.8 50.4a4 4 0 0 0 6.8 -3.6" fill="none" stroke="#fdf9d4" stroke-width="1.100" opacity=".9"/><circle cx="53" cy="61" r="9.5" fill="url(#ch)"/><path d="M45.4 66.7a9.5 9.5 0 0 0 16.1 -8.6" fill="none" stroke="#fdf9d4" stroke-width="1.100" opacity=".9"/><path d="M38 11q4-1 6-4q1 4-2 6z" fill="#b9ab50"/><ellipse cx="11" cy="68" rx="2.500" ry="1.500" fill="#b9ab50"/></svg></div><div class="th" style="left:667px;top:3px"><svg width="75" height="75" viewBox="0 0 75 75"><rect width="75" height="75" fill="#7c3c18"/><g filter="url(#f7)" fill="none" stroke-linecap="round"><path d="M-4 12 C15 8 35 12 48 22" stroke="#c8824a" stroke-width="9"/><path d="M6 52 C10 36 30 33 45 37 C56 37 61 28 62 18" stroke="#c98248" stroke-width="6"/><path d="M31 42 C40 50 43 62 40 78" stroke="#d8985c" stroke-width="6"/><path d="M60 72 C66 64 74 62 80 64" stroke="#c07840" stroke-width="7"/><path d="M64 14 C70 12 74 16 78 22" stroke="#b06a34" stroke-width="6"/><path d="M2 34 C12 22 34 25 48 30 C59 29 56 12 50 4 C49 0 52 -3 56 -4" stroke="#340a00" stroke-width="7"/><path d="M26 78 C33 64 31 50 22 47 C13 47 11 56 17 59" stroke="#2c0800" stroke-width="8"/><path d="M56 -2 C62 5 72 6 80 4" stroke="#340a00" stroke-width="10"/><path d="M60 32 C68 42 66 54 56 64" stroke="#3c1002" stroke-width="12"/><path d="M-3 62 C4 66 12 72 14 80" stroke="#340a00" stroke-width="12"/><path d="M74 30 C76 40 76 50 74 58" stroke="#5a1c08" stroke-width="5"/></g></svg></div><div class="th" style="left:5px;top:86px"><svg width="75" height="75" viewBox="0 0 75 75"><defs><linearGradient id="obg" x1="0" y1="0" x2="1" y2="1"><stop offset="0" stop-color="#fabc28"/><stop offset="1" stop-color="#f4a818"/></linearGradient><linearGradient id="og" x1=".15" y1=".1" x2=".85" y2=".9"><stop offset="0" stop-color="#fbd428"/><stop offset=".5" stop-color="#f9c01c"/><stop offset="1" stop-color="#f09c10"/></linearGradient></defs><rect width="75" height="75" fill="url(#obg)"/><circle cx="37.500" cy="38" r="36.500" fill="#fff6d8"/><circle cx="37.500" cy="38" r="32.500" fill="url(#og)"/><path d="M37.500 38L69.0 43.6" stroke="#fde488" stroke-width="1" opacity=".55"/><path d="M37.500 38L59.7 61.0" stroke="#fde488" stroke-width="1" opacity=".55"/><path d="M37.500 38L42.0 69.7" stroke="#fde488" stroke-width="1" opacity=".55"/><path d="M37.500 38L22.5 66.3" stroke="#fde488" stroke-width="1" opacity=".55"/><path d="M37.500 38L8.7 52.0" stroke="#fde488" stroke-width="1" opacity=".55"/><path d="M37.500 38L6.0 32.4" stroke="#fde488" stroke-width="1" opacity=".55"/><path d="M37.500 38L15.3 15.0" stroke="#fde488" stroke-width="1" opacity=".55"/><path d="M37.500 38L33.0 6.3" stroke="#fde488" stroke-width="1" opacity=".55"/><path d="M37.500 38L52.5 9.7" stroke="#fde488" stroke-width="1" opacity=".55"/><path d="M37.500 38L66.3 24.0" stroke="#fde488" stroke-width="1" opacity=".55"/><path d="M46.5 38.0L68.5 38.0" stroke="#fde070" stroke-width=".5" opacity=".4"/><path d="M46.4 39.3L68.2 42.3" stroke="#fde070" stroke-width=".5" opacity=".4"/><path d="M46.2 40.5L67.3 46.5" stroke="#fde070" stroke-width=".5" opacity=".4"/><path d="M45.7 41.7L65.8 50.6" stroke="#fde070" stroke-width=".5" opacity=".4"/><path d="M45.1 42.8L63.8 54.4" stroke="#fde070" stroke-width=".5" opacity=".4"/><path d="M44.4 43.8L61.2 57.9" stroke="#fde070" stroke-width=".5" opacity=".4"/><path d="M43.5 44.7L58.2 61.0" stroke="#fde070" stroke-width=".5" opacity=".4"/><path d="M42.5 45.5L54.8 63.7" stroke="#fde070" stroke-width=".5" opacity=".4"/><path d="M41.4 46.1L51.1 65.9" stroke="#fde070" stroke-width=".5" opacity=".4"/><path d="M40.3 46.6L47.1 67.5" stroke="#fde070" stroke-width=".5" opacity=".4"/><path d="M39.1 46.9L42.9 68.5" stroke="#fde070" stroke-width=".5" opacity=".4"/><path d="M37.8 47.0L38.6 69.0" stroke="#fde070" stroke-width=".5" opacity=".4"/><path d="M36.6 47.0L34.3 68.8" stroke="#fde070" stroke-width=".5" opacity=".4"/><path d="M35.3 46.7L30.0 68.1" stroke="#fde070" stroke-width=".5" opacity=".4"/><path d="M34.1 46.3L25.9 66.7" stroke="#fde070" stroke-width=".5" opacity=".4"/><path d="M33.0 45.8L22.0 64.8" stroke="#fde070" stroke-width=".5" opacity=".4"/><path d="M32.0 45.1L18.4 62.4" stroke="#fde070" stroke-width=".5" opacity=".4"/><path d="M31.0 44.3L15.2 59.5" stroke="#fde070" stroke-width=".5" opacity=".4"/><path d="M30.2 43.3L12.4 56.2" stroke="#fde070" stroke-width=".5" opacity=".4"/><path d="M29.6 42.2L10.1 52.6" stroke="#fde070" stroke-width=".5" opacity=".4"/><path d="M29.0 41.1L8.4 48.6" stroke="#fde070" stroke-width=".5" opacity=".4"/><path d="M28.7 39.9L7.2 44.4" stroke="#fde070" stroke-width=".5" opacity=".4"/><path d="M28.5 38.6L6.6 40.2" stroke="#fde070" stroke-width=".5" opacity=".4"/><path d="M28.5 37.4L6.6 35.8" stroke="#fde070" stroke-width=".5" opacity=".4"/><path d="M28.7 36.1L7.2 31.6" stroke="#fde070" stroke-width=".5" opacity=".4"/><path d="M29.0 34.9L8.4 27.4" stroke="#fde070" stroke-width=".5" opacity=".4"/><path d="M29.6 33.8L10.1 23.4" stroke="#fde070" stroke-width=".5" opacity=".4"/><path d="M30.2 32.7L12.4 19.8" stroke="#fde070" stroke-width=".5" opacity=".4"/><path d="M31.0 31.7L15.2 16.5" stroke="#fde070" stroke-width=".5" opacity=".4"/><path d="M32.0 30.9L18.4 13.6" stroke="#fde070" stroke-width=".5" opacity=".4"/><path d="M33.0 30.2L22.0 11.2" stroke="#fde070" stroke-width=".5" opacity=".4"/><path d="M34.1 29.7L25.9 9.3" stroke="#fde070" stroke-width=".5" opacity=".4"/><path d="M35.3 29.3L30.0 7.9" stroke="#fde070" stroke-width=".5" opacity=".4"/><path d="M36.6 29.0L34.3 7.2" stroke="#fde070" stroke-width=".5" opacity=".4"/><path d="M37.8 29.0L38.6 7.0" stroke="#fde070" stroke-width=".5" opacity=".4"/><path d="M39.1 29.1L42.9 7.5" stroke="#fde070" stroke-width=".5" opacity=".4"/><path d="M40.3 29.4L47.1 8.5" stroke="#fde070" stroke-width=".5" opacity=".4"/><path d="M41.4 29.9L51.1 10.1" stroke="#fde070" stroke-width=".5" opacity=".4"/><path d="M42.5 30.5L54.8 12.3" stroke="#fde070" stroke-width=".5" opacity=".4"/><path d="M43.5 31.3L58.2 15.0" stroke="#fde070" stroke-width=".5" opacity=".4"/><path d="M44.4 32.2L61.2 18.1" stroke="#fde070" stroke-width=".5" opacity=".4"/><path d="M45.1 33.2L63.8 21.6" stroke="#fde070" stroke-width=".5" opacity=".4"/><path d="M45.7 34.3L65.8 25.4" stroke="#fde070" stroke-width=".5" opacity=".4"/><path d="M46.2 35.5L67.3 29.5" stroke="#fde070" stroke-width=".5" opacity=".4"/><path d="M46.4 36.7L68.2 33.7" stroke="#fde070" stroke-width=".5" opacity=".4"/><path d="M37.500 31l2 4 5.500-2-3.500 4.500 4 3.500-5.500 .5 0 5.500-3.500-4-4 3.500 1.500-5.500-5.500-2 5.500-2z" fill="#fffbe6"/></svg></div><div class="th" style="left:88px;top:86px"><svg width="75" height="75" viewBox="0 0 75 75"><rect width="75" height="75" fill="#fbfbfb"/><circle cx="17.4" cy="28.0" r="5.300" fill="#301030" opacity=".3"/><circle cx="16.2" cy="26.4" r="5.300" fill="#f0609a"/><circle cx="12.4" cy="27.2" r="5.300" fill="#301030" opacity=".3"/><circle cx="11.2" cy="25.6" r="5.300" fill="#c4a4e8"/><circle cx="26.4" cy="42.2" r="5.300" fill="#301030" opacity=".3"/><circle cx="25.2" cy="40.6" r="5.300" fill="#f078b0"/><circle cx="34.3" cy="15.8" r="5.300" fill="#301030" opacity=".3"/><circle cx="33.1" cy="14.2" r="5.300" fill="#a0e468"/><circle cx="19.0" cy="38.8" r="5.300" fill="#301030" opacity=".3"/><circle cx="17.8" cy="37.2" r="5.300" fill="#f8b060"/><circle cx="70.2" cy="16.6" r="5.300" fill="#301030" opacity=".3"/><circle cx="69.0" cy="15.0" r="5.300" fill="#3cc4d4"/><circle cx="12.5" cy="67.6" r="5.300" fill="#301030" opacity=".3"/><circle cx="11.3" cy="66.0" r="5.300" fill="#f0609a"/><circle cx="29.6" cy="58.6" r="5.300" fill="#301030" opacity=".3"/><circle cx="28.4" cy="57.0" r="5.300" fill="#a0e468"/><circle cx="7.3" cy="77.0" r="5.300" fill="#301030" opacity=".3"/><circle cx="6.1" cy="75.4" r="5.300" fill="#3cc4d4"/><circle cx="21.2" cy="79.5" r="5.300" fill="#301030" opacity=".3"/><circle cx="20.0" cy="77.9" r="5.300" fill="#f0609a"/><circle cx="60.2" cy="52.0" r="5.300" fill="#301030" opacity=".3"/><circle cx="59.0" cy="50.4" r="5.300" fill="#c4a4e8"/><circle cx="76.7" cy="76.0" r="5.300" fill="#301030" opacity=".3"/><circle cx="75.5" cy="74.4" r="5.300" fill="#f078b0"/><circle cx="60.1" cy="16.9" r="5.300" fill="#301030" opacity=".3"/><circle cx="58.9" cy="15.3" r="5.300" fill="#c4a4e8"/><circle cx="43.7" cy="28.9" r="5.300" fill="#301030" opacity=".3"/><circle cx="42.5" cy="27.3" r="5.300" fill="#3cc4d4"/><circle cx="49.5" cy="24.3" r="5.300" fill="#301030" opacity=".3"/><circle cx="48.3" cy="22.7" r="5.300" fill="#3cc4d4"/><circle cx="1.4" cy="80.7" r="5.300" fill="#301030" opacity=".3"/><circle cx="0.2" cy="79.1" r="5.300" fill="#f078b0"/><circle cx="63.9" cy="68.1" r="5.300" fill="#301030" opacity=".3"/><circle cx="62.7" cy="66.5" r="5.300" fill="#f0609a"/><circle cx="8.4" cy="15.5" r="5.300" fill="#301030" opacity=".3"/><circle cx="7.2" cy="13.9" r="5.300" fill="#f2e45c"/><circle cx="11.6" cy="10.8" r="5.300" fill="#301030" opacity=".3"/><circle cx="10.4" cy="9.2" r="5.300" fill="#f2e45c"/><circle cx="20.9" cy="56.6" r="5.300" fill="#301030" opacity=".3"/><circle cx="19.7" cy="55.0" r="5.300" fill="#f8b060"/><circle cx="60.3" cy="80.1" r="5.300" fill="#301030" opacity=".3"/><circle cx="59.1" cy="78.5" r="5.300" fill="#f4904a"/><circle cx="81.6" cy="42.7" r="5.300" fill="#301030" opacity=".3"/><circle cx="80.4" cy="41.1" r="5.300" fill="#a0e468"/><circle cx="11.0" cy="-1.5" r="5.300" fill="#301030" opacity=".3"/><circle cx="9.8" cy="-3.1" r="5.300" fill="#3fa4e4"/><circle cx="33.5" cy="35.4" r="5.300" fill="#301030" opacity=".3"/><circle cx="32.3" cy="33.8" r="5.300" fill="#3cc4d4"/><circle cx="63.3" cy="-1.7" r="5.300" fill="#301030" opacity=".3"/><circle cx="62.1" cy="-3.3" r="5.300" fill="#f2e45c"/><circle cx="68.9" cy="78.4" r="5.300" fill="#301030" opacity=".3"/><circle cx="67.7" cy="76.8" r="5.300" fill="#3cc4d4"/><circle cx="24.1" cy="38.1" r="5.300" fill="#301030" opacity=".3"/><circle cx="22.9" cy="36.5" r="5.300" fill="#5fe28e"/><circle cx="18.5" cy="18.0" r="5.300" fill="#301030" opacity=".3"/><circle cx="17.3" cy="16.4" r="5.300" fill="#f0609a"/><circle cx="35.6" cy="13.7" r="5.300" fill="#301030" opacity=".3"/><circle cx="34.4" cy="12.1" r="5.300" fill="#c4a4e8"/><circle cx="67.4" cy="60.3" r="5.300" fill="#301030" opacity=".3"/><circle cx="66.2" cy="58.7" r="5.300" fill="#c4a4e8"/><circle cx="32.4" cy="55.8" r="5.300" fill="#301030" opacity=".3"/><circle cx="31.2" cy="54.2" r="5.300" fill="#f8b060"/><circle cx="78.1" cy="39.2" r="5.300" fill="#301030" opacity=".3"/><circle cx="76.9" cy="37.6" r="5.300" fill="#f4904a"/><circle cx="43.6" cy="62.4" r="5.300" fill="#301030" opacity=".3"/><circle cx="42.4" cy="60.8" r="5.300" fill="#3fa4e4"/><circle cx="61.9" cy="11.8" r="5.300" fill="#301030" opacity=".3"/><circle cx="60.7" cy="10.2" r="5.300" fill="#f078b0"/><circle cx="72.7" cy="1.3" r="5.300" fill="#301030" opacity=".3"/><circle cx="71.5" cy="-0.3" r="5.300" fill="#3fa4e4"/><circle cx="45.1" cy="75.9" r="5.300" fill="#301030" opacity=".3"/><circle cx="43.9" cy="74.3" r="5.300" fill="#f8b060"/><circle cx="78.0" cy="1.0" r="5.300" fill="#301030" opacity=".3"/><circle cx="76.8" cy="-0.6" r="5.300" fill="#3cc4d4"/><circle cx="42.4" cy="34.6" r="5.300" fill="#301030" opacity=".3"/><circle cx="41.2" cy="33.0" r="5.300" fill="#3fa4e4"/><circle cx="21.7" cy="1.2" r="5.300" fill="#301030" opacity=".3"/><circle cx="20.5" cy="-0.4" r="5.300" fill="#c4a4e8"/><circle cx="68.1" cy="7.5" r="5.300" fill="#301030" opacity=".3"/><circle cx="66.9" cy="5.9" r="5.300" fill="#a0e468"/><circle cx="35.3" cy="79.1" r="5.300" fill="#301030" opacity=".3"/><circle cx="34.1" cy="77.5" r="5.300" fill="#f8b060"/><circle cx="19.6" cy="59.4" r="5.300" fill="#301030" opacity=".3"/><circle cx="18.4" cy="57.8" r="5.300" fill="#3fa4e4"/><circle cx="59.2" cy="35.5" r="5.300" fill="#301030" opacity=".3"/><circle cx="58.0" cy="33.9" r="5.300" fill="#a0e468"/><circle cx="29.5" cy="30.8" r="5.300" fill="#301030" opacity=".3"/><circle cx="28.3" cy="29.2" r="5.300" fill="#f0609a"/><circle cx="28.5" cy="77.8" r="5.300" fill="#301030" opacity=".3"/><circle cx="27.3" cy="76.2" r="5.300" fill="#f078b0"/><circle cx="34.3" cy="65.0" r="5.300" fill="#301030" opacity=".3"/><circle cx="33.1" cy="63.4" r="5.300" fill="#5fe28e"/><circle cx="54.2" cy="20.5" r="5.300" fill="#301030" opacity=".3"/><circle cx="53.0" cy="18.9" r="5.300" fill="#f2e45c"/><circle cx="53.7" cy="1.4" r="5.300" fill="#301030" opacity=".3"/><circle cx="52.5" cy="-0.2" r="5.300" fill="#3cc4d4"/><circle cx="38.4" cy="69.5" r="5.300" fill="#301030" opacity=".3"/><circle cx="37.2" cy="67.9" r="5.300" fill="#f0609a"/><circle cx="-2.2" cy="29.8" r="5.300" fill="#301030" opacity=".3"/><circle cx="-3.4" cy="28.2" r="5.300" fill="#f8b060"/><circle cx="53.4" cy="51.9" r="5.300" fill="#301030" opacity=".3"/><circle cx="52.2" cy="50.3" r="5.300" fill="#3fa4e4"/><circle cx="77.1" cy="69.3" r="5.300" fill="#301030" opacity=".3"/><circle cx="75.9" cy="67.7" r="5.300" fill="#a0e468"/><circle cx="38.3" cy="5.0" r="5.300" fill="#301030" opacity=".3"/><circle cx="37.1" cy="3.4" r="5.300" fill="#3fa4e4"/><circle cx="80.3" cy="55.6" r="5.300" fill="#301030" opacity=".3"/><circle cx="79.1" cy="54.0" r="5.300" fill="#3cc4d4"/><circle cx="-0.6" cy="1.9" r="5.300" fill="#301030" opacity=".3"/><circle cx="-1.8" cy="0.3" r="5.300" fill="#5fe28e"/><circle cx="63.7" cy="61.4" r="5.300" fill="#301030" opacity=".3"/><circle cx="62.5" cy="59.8" r="5.300" fill="#f0609a"/><circle cx="2.1" cy="73.0" r="5.300" fill="#301030" opacity=".3"/><circle cx="0.9" cy="71.4" r="5.300" fill="#c4a4e8"/><circle cx="44.6" cy="11.0" r="5.300" fill="#301030" opacity=".3"/><circle cx="43.4" cy="9.4" r="5.300" fill="#3fa4e4"/><circle cx="44.5" cy="49.8" r="5.300" fill="#301030" opacity=".3"/><circle cx="43.3" cy="48.2" r="5.300" fill="#f0609a"/><circle cx="40.8" cy="71.2" r="5.300" fill="#301030" opacity=".3"/><circle cx="39.6" cy="69.6" r="5.300" fill="#3fa4e4"/><circle cx="9.4" cy="64.8" r="5.300" fill="#301030" opacity=".3"/><circle cx="8.2" cy="63.2" r="5.300" fill="#f078b0"/><circle cx="45.2" cy="2.3" r="5.300" fill="#301030" opacity=".3"/><circle cx="44.0" cy="0.7" r="5.300" fill="#f4904a"/><circle cx="72.1" cy="29.8" r="5.300" fill="#301030" opacity=".3"/><circle cx="70.9" cy="28.2" r="5.300" fill="#a0e468"/><circle cx="67.8" cy="34.5" r="5.300" fill="#301030" opacity=".3"/><circle cx="66.6" cy="32.9" r="5.300" fill="#f4904a"/><circle cx="75.1" cy="21.9" r="5.300" fill="#301030" opacity=".3"/><circle cx="73.9" cy="20.3" r="5.300" fill="#3fa4e4"/><circle cx="72.2" cy="45.6" r="5.300" fill="#301030" opacity=".3"/><circle cx="71.0" cy="44.0" r="5.300" fill="#f0609a"/><circle cx="81.5" cy="7.8" r="5.300" fill="#301030" opacity=".3"/><circle cx="80.3" cy="6.2" r="5.300" fill="#a0e468"/><circle cx="20.9" cy="73.7" r="5.300" fill="#301030" opacity=".3"/><circle cx="19.7" cy="72.1" r="5.300" fill="#f8b060"/><circle cx="36.4" cy="42.2" r="5.300" fill="#301030" opacity=".3"/><circle cx="35.2" cy="40.6" r="5.300" fill="#f8b060"/><circle cx="2.2" cy="59.4" r="5.300" fill="#301030" opacity=".3"/><circle cx="1.0" cy="57.8" r="5.300" fill="#f2e45c"/><circle cx="72.1" cy="52.1" r="5.300" fill="#301030" opacity=".3"/><circle cx="70.9" cy="50.5" r="5.300" fill="#3fa4e4"/><circle cx="51.4" cy="78.1" r="5.300" fill="#301030" opacity=".3"/><circle cx="50.2" cy="76.5" r="5.300" fill="#f8b060"/><circle cx="25.5" cy="15.7" r="5.300" fill="#301030" opacity=".3"/><circle cx="24.3" cy="14.1" r="5.300" fill="#3fa4e4"/><circle cx="9.1" cy="55.3" r="5.300" fill="#301030" opacity=".3"/><circle cx="7.9" cy="53.7" r="5.300" fill="#f8b060"/><circle cx="36.3" cy="24.1" r="5.300" fill="#301030" opacity=".3"/><circle cx="35.1" cy="22.5" r="5.300" fill="#f0609a"/><circle cx="11.3" cy="38.7" r="5.300" fill="#301030" opacity=".3"/><circle cx="10.1" cy="37.1" r="5.300" fill="#f8b060"/><circle cx="81.3" cy="30.8" r="5.300" fill="#301030" opacity=".3"/><circle cx="80.1" cy="29.2" r="5.300" fill="#c4a4e8"/><circle cx="47.3" cy="18.8" r="5.300" fill="#301030" opacity=".3"/><circle cx="46.1" cy="17.2" r="5.300" fill="#a0e468"/><circle cx="51.9" cy="71.1" r="5.300" fill="#301030" opacity=".3"/><circle cx="50.7" cy="69.5" r="5.300" fill="#5fe28e"/><circle cx="51.8" cy="60.5" r="5.300" fill="#301030" opacity=".3"/><circle cx="50.6" cy="58.9" r="5.300" fill="#3fa4e4"/><circle cx="2.1" cy="15.8" r="5.300" fill="#301030" opacity=".3"/><circle cx="0.9" cy="14.2" r="5.300" fill="#f2e45c"/><circle cx="28.5" cy="-0.4" r="5.300" fill="#301030" opacity=".3"/><circle cx="27.3" cy="-2.0" r="5.300" fill="#5fe28e"/><circle cx="27.8" cy="67.2" r="5.300" fill="#301030" opacity=".3"/><circle cx="26.6" cy="65.6" r="5.300" fill="#f2e45c"/><circle cx="54.0" cy="39.2" r="5.300" fill="#301030" opacity=".3"/><circle cx="52.8" cy="37.6" r="5.300" fill="#f078b0"/><circle cx="19.3" cy="8.8" r="5.300" fill="#301030" opacity=".3"/><circle cx="18.1" cy="7.2" r="5.300" fill="#a0e468"/><circle cx="79.7" cy="61.9" r="5.300" fill="#301030" opacity=".3"/><circle cx="78.5" cy="60.3" r="5.300" fill="#3cc4d4"/><circle cx="54.1" cy="9.2" r="5.300" fill="#301030" opacity=".3"/><circle cx="52.9" cy="7.6" r="5.300" fill="#f4904a"/><circle cx="0.3" cy="10.9" r="5.300" fill="#301030" opacity=".3"/><circle cx="-0.9" cy="9.3" r="5.300" fill="#c4a4e8"/><circle cx="3.6" cy="53.0" r="5.300" fill="#301030" opacity=".3"/><circle cx="2.4" cy="51.4" r="5.300" fill="#a0e468"/><circle cx="63.5" cy="25.6" r="5.300" fill="#301030" opacity=".3"/><circle cx="62.3" cy="24.0" r="5.300" fill="#3cc4d4"/><circle cx="47.5" cy="44.7" r="5.300" fill="#301030" opacity=".3"/><circle cx="46.3" cy="43.1" r="5.300" fill="#c4a4e8"/><circle cx="19.7" cy="47.6" r="5.300" fill="#301030" opacity=".3"/><circle cx="18.5" cy="46.0" r="5.300" fill="#f8b060"/><circle cx="51.1" cy="44.3" r="5.300" fill="#301030" opacity=".3"/><circle cx="49.9" cy="42.7" r="5.300" fill="#3cc4d4"/><circle cx="72.1" cy="68.8" r="5.300" fill="#301030" opacity=".3"/><circle cx="70.9" cy="67.2" r="5.300" fill="#3fa4e4"/><circle cx="-0.5" cy="34.1" r="5.300" fill="#301030" opacity=".3"/><circle cx="-1.7" cy="32.5" r="5.300" fill="#3cc4d4"/><circle cx="4.7" cy="44.4" r="5.300" fill="#301030" opacity=".3"/><circle cx="3.5" cy="42.8" r="5.300" fill="#f8b060"/><circle cx="29.3" cy="10.7" r="5.300" fill="#301030" opacity=".3"/><circle cx="28.1" cy="9.1" r="5.300" fill="#f2e45c"/><circle cx="11.3" cy="47.5" r="5.300" fill="#301030" opacity=".3"/><circle cx="10.1" cy="45.9" r="5.300" fill="#3cc4d4"/><circle cx="25.6" cy="55.1" r="5.300" fill="#301030" opacity=".3"/><circle cx="24.4" cy="53.5" r="5.300" fill="#5fe28e"/><circle cx="62.8" cy="41.8" r="5.300" fill="#301030" opacity=".3"/><circle cx="61.6" cy="40.2" r="5.300" fill="#3cc4d4"/></svg></div><div class="th" style="left:171px;top:86px"><svg width="75" height="75" viewBox="0 0 75 75"><rect width="75" height="75" fill="#efe6c4"/><ellipse cx="28.6" cy="24" rx="9.4" ry="3.4" transform="rotate(3 17 24)" fill="#fffdf4" stroke="#d6c88c" stroke-width=".5"/><ellipse cx="27.5" cy="24" rx="8.3" ry="3.4" transform="rotate(21 17 24)" fill="#fffdf4" stroke="#d6c88c" stroke-width=".5"/><ellipse cx="28.3" cy="24" rx="9.1" ry="3.4" transform="rotate(37 17 24)" fill="#fffdf4" stroke="#d6c88c" stroke-width=".5"/><ellipse cx="28.5" cy="24" rx="9.3" ry="3.4" transform="rotate(63 17 24)" fill="#fffdf4" stroke="#d6c88c" stroke-width=".5"/><ellipse cx="28.5" cy="24" rx="9.3" ry="3.4" transform="rotate(83 17 24)" fill="#fffdf4" stroke="#d6c88c" stroke-width=".5"/><ellipse cx="28.6" cy="24" rx="9.4" ry="3.4" transform="rotate(104 17 24)" fill="#fffdf4" stroke="#d6c88c" stroke-width=".5"/><ellipse cx="27.8" cy="24" rx="8.6" ry="3.4" transform="rotate(129 17 24)" fill="#fffdf4" stroke="#d6c88c" stroke-width=".5"/><ellipse cx="28.4" cy="24" rx="9.2" ry="3.4" transform="rotate(149 17 24)" fill="#fffdf4" stroke="#d6c88c" stroke-width=".5"/><ellipse cx="28.1" cy="24" rx="8.9" ry="3.4" transform="rotate(166 17 24)" fill="#fffdf4" stroke="#d6c88c" stroke-width=".5"/><ellipse cx="27.5" cy="24" rx="8.3" ry="3.4" transform="rotate(194 17 24)" fill="#fffdf4" stroke="#d6c88c" stroke-width=".5"/><ellipse cx="28.4" cy="24" rx="9.2" ry="3.4" transform="rotate(215 17 24)" fill="#fffdf4" stroke="#d6c88c" stroke-width=".5"/><ellipse cx="27.7" cy="24" rx="8.5" ry="3.4" transform="rotate(236 17 24)" fill="#fffdf4" stroke="#d6c88c" stroke-width=".5"/><ellipse cx="28.6" cy="24" rx="9.4" ry="3.4" transform="rotate(250 17 24)" fill="#fffdf4" stroke="#d6c88c" stroke-width=".5"/><ellipse cx="27.9" cy="24" rx="8.7" ry="3.4" transform="rotate(278 17 24)" fill="#fffdf4" stroke="#d6c88c" stroke-width=".5"/><ellipse cx="27.4" cy="24" rx="8.2" ry="3.4" transform="rotate(292 17 24)" fill="#fffdf4" stroke="#d6c88c" stroke-width=".5"/><ellipse cx="27.6" cy="24" rx="8.4" ry="3.4" transform="rotate(319 17 24)" fill="#fffdf4" stroke="#d6c88c" stroke-width=".5"/><ellipse cx="28.2" cy="24" rx="9.0" ry="3.4" transform="rotate(343 17 24)" fill="#fffdf4" stroke="#d6c88c" stroke-width=".5"/><ellipse cx="62.3" cy="34" rx="10.7" ry="4.0" transform="rotate(-3 49 34)" fill="#fffdf4" stroke="#d6c88c" stroke-width=".5"/><ellipse cx="62.9" cy="34" rx="11.3" ry="4.0" transform="rotate(20 49 34)" fill="#fffdf4" stroke="#d6c88c" stroke-width=".5"/><ellipse cx="62.0" cy="34" rx="10.4" ry="4.0" transform="rotate(46 49 34)" fill="#fffdf4" stroke="#d6c88c" stroke-width=".5"/><ellipse cx="62.4" cy="34" rx="10.8" ry="4.0" transform="rotate(65 49 34)" fill="#fffdf4" stroke="#d6c88c" stroke-width=".5"/><ellipse cx="63.0" cy="34" rx="11.4" ry="4.0" transform="rotate(88 49 34)" fill="#fffdf4" stroke="#d6c88c" stroke-width=".5"/><ellipse cx="61.7" cy="34" rx="10.1" ry="4.0" transform="rotate(101 49 34)" fill="#fffdf4" stroke="#d6c88c" stroke-width=".5"/><ellipse cx="61.6" cy="34" rx="10.0" ry="4.0" transform="rotate(128 49 34)" fill="#fffdf4" stroke="#d6c88c" stroke-width=".5"/><ellipse cx="61.2" cy="34" rx="9.6" ry="4.0" transform="rotate(149 49 34)" fill="#fffdf4" stroke="#d6c88c" stroke-width=".5"/><ellipse cx="62.1" cy="34" rx="10.5" ry="4.0" transform="rotate(173 49 34)" fill="#fffdf4" stroke="#d6c88c" stroke-width=".5"/><ellipse cx="62.3" cy="34" rx="10.7" ry="4.0" transform="rotate(187 49 34)" fill="#fffdf4" stroke="#d6c88c" stroke-width=".5"/><ellipse cx="61.4" cy="34" rx="9.8" ry="4.0" transform="rotate(210 49 34)" fill="#fffdf4" stroke="#d6c88c" stroke-width=".5"/><ellipse cx="61.3" cy="34" rx="9.7" ry="4.0" transform="rotate(233 49 34)" fill="#fffdf4" stroke="#d6c88c" stroke-width=".5"/><ellipse cx="62.7" cy="34" rx="11.1" ry="4.0" transform="rotate(251 49 34)" fill="#fffdf4" stroke="#d6c88c" stroke-width=".5"/><ellipse cx="61.0" cy="34" rx="9.4" ry="4.0" transform="rotate(277 49 34)" fill="#fffdf4" stroke="#d6c88c" stroke-width=".5"/><ellipse cx="61.0" cy="34" rx="9.4" ry="4.0" transform="rotate(299 49 34)" fill="#fffdf4" stroke="#d6c88c" stroke-width=".5"/><ellipse cx="62.8" cy="34" rx="11.2" ry="4.0" transform="rotate(316 49 34)" fill="#fffdf4" stroke="#d6c88c" stroke-width=".5"/><ellipse cx="61.6" cy="34" rx="10.0" ry="4.0" transform="rotate(340 49 34)" fill="#fffdf4" stroke="#d6c88c" stroke-width=".5"/><ellipse cx="31.8" cy="58" rx="8.6" ry="3.4" transform="rotate(-1 21 58)" fill="#fffdf4" stroke="#d6c88c" stroke-width=".5"/><ellipse cx="33.0" cy="58" rx="9.8" ry="3.4" transform="rotate(17 21 58)" fill="#fffdf4" stroke="#d6c88c" stroke-width=".5"/><ellipse cx="31.8" cy="58" rx="8.6" ry="3.4" transform="rotate(38 21 58)" fill="#fffdf4" stroke="#d6c88c" stroke-width=".5"/><ellipse cx="31.8" cy="58" rx="8.6" ry="3.4" transform="rotate(66 21 58)" fill="#fffdf4" stroke="#d6c88c" stroke-width=".5"/><ellipse cx="31.5" cy="58" rx="8.3" ry="3.4" transform="rotate(90 21 58)" fill="#fffdf4" stroke="#d6c88c" stroke-width=".5"/><ellipse cx="32.8" cy="58" rx="9.6" ry="3.4" transform="rotate(111 21 58)" fill="#fffdf4" stroke="#d6c88c" stroke-width=".5"/><ellipse cx="32.8" cy="58" rx="9.6" ry="3.4" transform="rotate(129 21 58)" fill="#fffdf4" stroke="#d6c88c" stroke-width=".5"/><ellipse cx="32.7" cy="58" rx="9.5" ry="3.4" transform="rotate(148 21 58)" fill="#fffdf4" stroke="#d6c88c" stroke-width=".5"/><ellipse cx="32.0" cy="58" rx="8.8" ry="3.4" transform="rotate(172 21 58)" fill="#fffdf4" stroke="#d6c88c" stroke-width=".5"/><ellipse cx="32.4" cy="58" rx="9.2" ry="3.4" transform="rotate(190 21 58)" fill="#fffdf4" stroke="#d6c88c" stroke-width=".5"/><ellipse cx="31.2" cy="58" rx="8.0" ry="3.4" transform="rotate(211 21 58)" fill="#fffdf4" stroke="#d6c88c" stroke-width=".5"/><ellipse cx="31.5" cy="58" rx="8.3" ry="3.4" transform="rotate(235 21 58)" fill="#fffdf4" stroke="#d6c88c" stroke-width=".5"/><ellipse cx="32.6" cy="58" rx="9.4" ry="3.4" transform="rotate(254 21 58)" fill="#fffdf4" stroke="#d6c88c" stroke-width=".5"/><ellipse cx="31.0" cy="58" rx="7.8" ry="3.4" transform="rotate(272 21 58)" fill="#fffdf4" stroke="#d6c88c" stroke-width=".5"/><ellipse cx="32.2" cy="58" rx="9.0" ry="3.4" transform="rotate(293 21 58)" fill="#fffdf4" stroke="#d6c88c" stroke-width=".5"/><ellipse cx="31.5" cy="58" rx="8.3" ry="3.4" transform="rotate(316 21 58)" fill="#fffdf4" stroke="#d6c88c" stroke-width=".5"/><ellipse cx="32.9" cy="58" rx="9.7" ry="3.4" transform="rotate(338 21 58)" fill="#fffdf4" stroke="#d6c88c" stroke-width=".5"/><ellipse cx="82.8" cy="62" rx="9.4" ry="3.7" transform="rotate(-2 71 62)" fill="#fffdf4" stroke="#d6c88c" stroke-width=".5"/><ellipse cx="83.2" cy="62" rx="9.8" ry="3.7" transform="rotate(25 71 62)" fill="#fffdf4" stroke="#d6c88c" stroke-width=".5"/><ellipse cx="82.9" cy="62" rx="9.5" ry="3.7" transform="rotate(40 71 62)" fill="#fffdf4" stroke="#d6c88c" stroke-width=".5"/><ellipse cx="82.3" cy="62" rx="8.9" ry="3.7" transform="rotate(63 71 62)" fill="#fffdf4" stroke="#d6c88c" stroke-width=".5"/><ellipse cx="82.6" cy="62" rx="9.2" ry="3.7" transform="rotate(83 71 62)" fill="#fffdf4" stroke="#d6c88c" stroke-width=".5"/><ellipse cx="82.6" cy="62" rx="9.2" ry="3.7" transform="rotate(109 71 62)" fill="#fffdf4" stroke="#d6c88c" stroke-width=".5"/><ellipse cx="83.9" cy="62" rx="10.5" ry="3.7" transform="rotate(129 71 62)" fill="#fffdf4" stroke="#d6c88c" stroke-width=".5"/><ellipse cx="82.8" cy="62" rx="9.4" ry="3.7" transform="rotate(152 71 62)" fill="#fffdf4" stroke="#d6c88c" stroke-width=".5"/><ellipse cx="82.6" cy="62" rx="9.2" ry="3.7" transform="rotate(170 71 62)" fill="#fffdf4" stroke="#d6c88c" stroke-width=".5"/><ellipse cx="83.0" cy="62" rx="9.6" ry="3.7" transform="rotate(190 71 62)" fill="#fffdf4" stroke="#d6c88c" stroke-width=".5"/><ellipse cx="83.9" cy="62" rx="10.5" ry="3.7" transform="rotate(215 71 62)" fill="#fffdf4" stroke="#d6c88c" stroke-width=".5"/><ellipse cx="82.0" cy="62" rx="8.6" ry="3.7" transform="rotate(231 71 62)" fill="#fffdf4" stroke="#d6c88c" stroke-width=".5"/><ellipse cx="82.1" cy="62" rx="8.7" ry="3.7" transform="rotate(254 71 62)" fill="#fffdf4" stroke="#d6c88c" stroke-width=".5"/><ellipse cx="83.5" cy="62" rx="10.1" ry="3.7" transform="rotate(271 71 62)" fill="#fffdf4" stroke="#d6c88c" stroke-width=".5"/><ellipse cx="83.4" cy="62" rx="10.0" ry="3.7" transform="rotate(293 71 62)" fill="#fffdf4" stroke="#d6c88c" stroke-width=".5"/><ellipse cx="83.9" cy="62" rx="10.5" ry="3.7" transform="rotate(316 71 62)" fill="#fffdf4" stroke="#d6c88c" stroke-width=".5"/><ellipse cx="82.1" cy="62" rx="8.7" ry="3.7" transform="rotate(342 71 62)" fill="#fffdf4" stroke="#d6c88c" stroke-width=".5"/><ellipse cx="76.9" cy="0" rx="8.9" ry="3.1" transform="rotate(-3 66 0)" fill="#fffdf4" stroke="#d6c88c" stroke-width=".5"/><ellipse cx="75.8" cy="0" rx="7.8" ry="3.1" transform="rotate(22 66 0)" fill="#fffdf4" stroke="#d6c88c" stroke-width=".5"/><ellipse cx="76.6" cy="0" rx="8.6" ry="3.1" transform="rotate(45 66 0)" fill="#fffdf4" stroke="#d6c88c" stroke-width=".5"/><ellipse cx="75.9" cy="0" rx="7.9" ry="3.1" transform="rotate(63 66 0)" fill="#fffdf4" stroke="#d6c88c" stroke-width=".5"/><ellipse cx="75.7" cy="0" rx="7.7" ry="3.1" transform="rotate(81 66 0)" fill="#fffdf4" stroke="#d6c88c" stroke-width=".5"/><ellipse cx="76.3" cy="0" rx="8.3" ry="3.1" transform="rotate(102 66 0)" fill="#fffdf4" stroke="#d6c88c" stroke-width=".5"/><ellipse cx="75.3" cy="0" rx="7.3" ry="3.1" transform="rotate(128 66 0)" fill="#fffdf4" stroke="#d6c88c" stroke-width=".5"/><ellipse cx="75.2" cy="0" rx="7.2" ry="3.1" transform="rotate(150 66 0)" fill="#fffdf4" stroke="#d6c88c" stroke-width=".5"/><ellipse cx="76.3" cy="0" rx="8.3" ry="3.1" transform="rotate(165 66 0)" fill="#fffdf4" stroke="#d6c88c" stroke-width=".5"/><ellipse cx="76.8" cy="0" rx="8.8" ry="3.1" transform="rotate(190 66 0)" fill="#fffdf4" stroke="#d6c88c" stroke-width=".5"/><ellipse cx="76.4" cy="0" rx="8.4" ry="3.1" transform="rotate(213 66 0)" fill="#fffdf4" stroke="#d6c88c" stroke-width=".5"/><ellipse cx="76.7" cy="0" rx="8.7" ry="3.1" transform="rotate(229 66 0)" fill="#fffdf4" stroke="#d6c88c" stroke-width=".5"/><ellipse cx="76.2" cy="0" rx="8.2" ry="3.1" transform="rotate(250 66 0)" fill="#fffdf4" stroke="#d6c88c" stroke-width=".5"/><ellipse cx="76.8" cy="0" rx="8.8" ry="3.1" transform="rotate(279 66 0)" fill="#fffdf4" stroke="#d6c88c" stroke-width=".5"/><ellipse cx="75.9" cy="0" rx="7.9" ry="3.1" transform="rotate(300 66 0)" fill="#fffdf4" stroke="#d6c88c" stroke-width=".5"/><ellipse cx="76.6" cy="0" rx="8.6" ry="3.1" transform="rotate(320 66 0)" fill="#fffdf4" stroke="#d6c88c" stroke-width=".5"/><ellipse cx="76.9" cy="0" rx="8.9" ry="3.1" transform="rotate(335 66 0)" fill="#fffdf4" stroke="#d6c88c" stroke-width=".5"/><ellipse cx="51.9" cy="76" rx="7.9" ry="3.1" transform="rotate(4 42 76)" fill="#fffdf4" stroke="#d6c88c" stroke-width=".5"/><ellipse cx="51.9" cy="76" rx="7.9" ry="3.1" transform="rotate(24 42 76)" fill="#fffdf4" stroke="#d6c88c" stroke-width=".5"/><ellipse cx="52.4" cy="76" rx="8.4" ry="3.1" transform="rotate(40 42 76)" fill="#fffdf4" stroke="#d6c88c" stroke-width=".5"/><ellipse cx="52.6" cy="76" rx="8.6" ry="3.1" transform="rotate(59 42 76)" fill="#fffdf4" stroke="#d6c88c" stroke-width=".5"/><ellipse cx="51.6" cy="76" rx="7.6" ry="3.1" transform="rotate(89 42 76)" fill="#fffdf4" stroke="#d6c88c" stroke-width=".5"/><ellipse cx="51.2" cy="76" rx="7.2" ry="3.1" transform="rotate(110 42 76)" fill="#fffdf4" stroke="#d6c88c" stroke-width=".5"/><ellipse cx="51.6" cy="76" rx="7.6" ry="3.1" transform="rotate(131 42 76)" fill="#fffdf4" stroke="#d6c88c" stroke-width=".5"/><ellipse cx="51.9" cy="76" rx="7.9" ry="3.1" transform="rotate(153 42 76)" fill="#fffdf4" stroke="#d6c88c" stroke-width=".5"/><ellipse cx="51.1" cy="76" rx="7.1" ry="3.1" transform="rotate(174 42 76)" fill="#fffdf4" stroke="#d6c88c" stroke-width=".5"/><ellipse cx="52.6" cy="76" rx="8.6" ry="3.1" transform="rotate(186 42 76)" fill="#fffdf4" stroke="#d6c88c" stroke-width=".5"/><ellipse cx="52.1" cy="76" rx="8.1" ry="3.1" transform="rotate(213 42 76)" fill="#fffdf4" stroke="#d6c88c" stroke-width=".5"/><ellipse cx="51.3" cy="76" rx="7.3" ry="3.1" transform="rotate(228 42 76)" fill="#fffdf4" stroke="#d6c88c" stroke-width=".5"/><ellipse cx="51.1" cy="76" rx="7.1" ry="3.1" transform="rotate(253 42 76)" fill="#fffdf4" stroke="#d6c88c" stroke-width=".5"/><ellipse cx="52.5" cy="76" rx="8.5" ry="3.1" transform="rotate(280 42 76)" fill="#fffdf4" stroke="#d6c88c" stroke-width=".5"/><ellipse cx="52.4" cy="76" rx="8.4" ry="3.1" transform="rotate(301 42 76)" fill="#fffdf4" stroke="#d6c88c" stroke-width=".5"/><ellipse cx="51.2" cy="76" rx="7.2" ry="3.1" transform="rotate(316 42 76)" fill="#fffdf4" stroke="#d6c88c" stroke-width=".5"/><ellipse cx="51.2" cy="76" rx="7.2" ry="3.1" transform="rotate(341 42 76)" fill="#fffdf4" stroke="#d6c88c" stroke-width=".5"/><ellipse cx="5.9" cy="44" rx="7.9" ry="3.1" transform="rotate(0 -4 44)" fill="#fffdf4" stroke="#d6c88c" stroke-width=".5"/><ellipse cx="5.2" cy="44" rx="7.2" ry="3.1" transform="rotate(21 -4 44)" fill="#fffdf4" stroke="#d6c88c" stroke-width=".5"/><ellipse cx="6.0" cy="44" rx="8.0" ry="3.1" transform="rotate(38 -4 44)" fill="#fffdf4" stroke="#d6c88c" stroke-width=".5"/><ellipse cx="6.1" cy="44" rx="8.1" ry="3.1" transform="rotate(59 -4 44)" fill="#fffdf4" stroke="#d6c88c" stroke-width=".5"/><ellipse cx="5.6" cy="44" rx="7.6" ry="3.1" transform="rotate(81 -4 44)" fill="#fffdf4" stroke="#d6c88c" stroke-width=".5"/><ellipse cx="6.1" cy="44" rx="8.1" ry="3.1" transform="rotate(102 -4 44)" fill="#fffdf4" stroke="#d6c88c" stroke-width=".5"/><ellipse cx="5.4" cy="44" rx="7.4" ry="3.1" transform="rotate(126 -4 44)" fill="#fffdf4" stroke="#d6c88c" stroke-width=".5"/><ellipse cx="6.1" cy="44" rx="8.1" ry="3.1" transform="rotate(145 -4 44)" fill="#fffdf4" stroke="#d6c88c" stroke-width=".5"/><ellipse cx="5.8" cy="44" rx="7.8" ry="3.1" transform="rotate(174 -4 44)" fill="#fffdf4" stroke="#d6c88c" stroke-width=".5"/><ellipse cx="5.6" cy="44" rx="7.6" ry="3.1" transform="rotate(187 -4 44)" fill="#fffdf4" stroke="#d6c88c" stroke-width=".5"/><ellipse cx="6.1" cy="44" rx="8.1" ry="3.1" transform="rotate(209 -4 44)" fill="#fffdf4" stroke="#d6c88c" stroke-width=".5"/><ellipse cx="6.1" cy="44" rx="8.1" ry="3.1" transform="rotate(236 -4 44)" fill="#fffdf4" stroke="#d6c88c" stroke-width=".5"/><ellipse cx="5.7" cy="44" rx="7.7" ry="3.1" transform="rotate(251 -4 44)" fill="#fffdf4" stroke="#d6c88c" stroke-width=".5"/><ellipse cx="5.9" cy="44" rx="7.9" ry="3.1" transform="rotate(274 -4 44)" fill="#fffdf4" stroke="#d6c88c" stroke-width=".5"/><ellipse cx="7.0" cy="44" rx="9.0" ry="3.1" transform="rotate(295 -4 44)" fill="#fffdf4" stroke="#d6c88c" stroke-width=".5"/><ellipse cx="6.3" cy="44" rx="8.3" ry="3.1" transform="rotate(318 -4 44)" fill="#fffdf4" stroke="#d6c88c" stroke-width=".5"/><ellipse cx="6.3" cy="44" rx="8.3" ry="3.1" transform="rotate(341 -4 44)" fill="#fffdf4" stroke="#d6c88c" stroke-width=".5"/><ellipse cx="87.7" cy="28" rx="7.7" ry="3.1" transform="rotate(3 78 28)" fill="#fffdf4" stroke="#d6c88c" stroke-width=".5"/><ellipse cx="88.9" cy="28" rx="8.9" ry="3.1" transform="rotate(23 78 28)" fill="#fffdf4" stroke="#d6c88c" stroke-width=".5"/><ellipse cx="88.3" cy="28" rx="8.3" ry="3.1" transform="rotate(39 78 28)" fill="#fffdf4" stroke="#d6c88c" stroke-width=".5"/><ellipse cx="87.1" cy="28" rx="7.1" ry="3.1" transform="rotate(62 78 28)" fill="#fffdf4" stroke="#d6c88c" stroke-width=".5"/><ellipse cx="88.5" cy="28" rx="8.5" ry="3.1" transform="rotate(80 78 28)" fill="#fffdf4" stroke="#d6c88c" stroke-width=".5"/><ellipse cx="88.4" cy="28" rx="8.4" ry="3.1" transform="rotate(102 78 28)" fill="#fffdf4" stroke="#d6c88c" stroke-width=".5"/><ellipse cx="87.7" cy="28" rx="7.7" ry="3.1" transform="rotate(123 78 28)" fill="#fffdf4" stroke="#d6c88c" stroke-width=".5"/><ellipse cx="88.1" cy="28" rx="8.1" ry="3.1" transform="rotate(144 78 28)" fill="#fffdf4" stroke="#d6c88c" stroke-width=".5"/><ellipse cx="87.5" cy="28" rx="7.5" ry="3.1" transform="rotate(172 78 28)" fill="#fffdf4" stroke="#d6c88c" stroke-width=".5"/><ellipse cx="88.8" cy="28" rx="8.8" ry="3.1" transform="rotate(191 78 28)" fill="#fffdf4" stroke="#d6c88c" stroke-width=".5"/><ellipse cx="87.9" cy="28" rx="7.9" ry="3.1" transform="rotate(210 78 28)" fill="#fffdf4" stroke="#d6c88c" stroke-width=".5"/><ellipse cx="88.7" cy="28" rx="8.7" ry="3.1" transform="rotate(235 78 28)" fill="#fffdf4" stroke="#d6c88c" stroke-width=".5"/><ellipse cx="88.3" cy="28" rx="8.3" ry="3.1" transform="rotate(251 78 28)" fill="#fffdf4" stroke="#d6c88c" stroke-width=".5"/><ellipse cx="87.2" cy="28" rx="7.2" ry="3.1" transform="rotate(271 78 28)" fill="#fffdf4" stroke="#d6c88c" stroke-width=".5"/><ellipse cx="87.1" cy="28" rx="7.1" ry="3.1" transform="rotate(301 78 28)" fill="#fffdf4" stroke="#d6c88c" stroke-width=".5"/><ellipse cx="88.5" cy="28" rx="8.5" ry="3.1" transform="rotate(322 78 28)" fill="#fffdf4" stroke="#d6c88c" stroke-width=".5"/><ellipse cx="88.5" cy="28" rx="8.5" ry="3.1" transform="rotate(341 78 28)" fill="#fffdf4" stroke="#d6c88c" stroke-width=".5"/><circle cx="17" cy="24" r="5.5" fill="#d8b430"/><circle cx="16.5" cy="23.5" r="4.0" fill="#f0d24c"/><circle cx="49" cy="34" r="6.5" fill="#d8b430"/><circle cx="48.5" cy="33.5" r="4.7" fill="#f0d24c"/><circle cx="21" cy="58" r="5.5" fill="#d8b430"/><circle cx="20.5" cy="57.5" r="4.0" fill="#f0d24c"/><circle cx="71" cy="62" r="6" fill="#d8b430"/><circle cx="70.5" cy="61.5" r="4.3" fill="#f0d24c"/><circle cx="66" cy="0" r="5" fill="#d8b430"/><circle cx="65.5" cy="-0.5" r="3.6" fill="#f0d24c"/><circle cx="42" cy="76" r="5" fill="#d8b430"/><circle cx="41.5" cy="75.5" r="3.6" fill="#f0d24c"/><circle cx="-4" cy="44" r="5" fill="#d8b430"/><circle cx="-4.5" cy="43.5" r="3.6" fill="#f0d24c"/><circle cx="78" cy="28" r="5" fill="#d8b430"/><circle cx="77.5" cy="27.5" r="3.6" fill="#f0d24c"/></svg></div><div class="th" style="left:253px;top:86px"><svg width="75" height="75" viewBox="0 0 75 75"><rect width="75" height="75" filter="url(#f8)"/></svg></div><div class="th" style="left:336px;top:86px"><svg width="75" height="75" viewBox="0 0 75 75"><rect width="75" height="75" filter="url(#f9)"/></svg></div><div class="th" style="left:419px;top:86px"><svg width="75" height="75" viewBox="0 0 75 75"><rect width="75" height="75" filter="url(#f10)"/></svg></div><div class="th" style="left:502px;top:86px"><svg width="75" height="75" viewBox="0 0 75 75"><rect width="75" height="75" filter="url(#f11)"/></svg></div><div class="th" style="left:585px;top:86px"><svg width="75" height="75" viewBox="0 0 75 75"><rect width="75" height="75" filter="url(#f12)"/></svg></div><div class="th" style="left:667px;top:86px"><svg width="75" height="75" viewBox="0 0 75 75"><rect width="75" height="75" filter="url(#f13)"/></svg></div><div class="th" style="left:5px;top:169px"><svg width="75" height="75" viewBox="0 0 75 75"><rect width="75" height="75" filter="url(#f14)"/></svg></div><div class="th" style="left:88px;top:169px"><svg width="75" height="75" viewBox="0 0 75 75"><rect width="75" height="75" filter="url(#f15)"/></svg></div><div class="th" style="left:171px;top:169px"><svg width="75" height="75" viewBox="0 0 75 75"><g transform="rotate(35 37 37) scale(1.5) translate(-12 -12)"><rect width="75" height="75" filter="url(#f16)"/></g></svg></div><div class="th" style="left:253px;top:169px"><svg width="75" height="75" viewBox="0 0 75 75"><rect width="75" height="75" fill="#e3e5e1"/><circle cx="24.8" cy="35.8" r="13.5" fill="none" stroke="#fafafa" stroke-width="1.3"/><circle cx="23.4" cy="34.4" r="13.5" fill="none" stroke="#c4c6c2" stroke-width="1.6"/><circle cx="24" cy="35" r="13.5" fill="#e5e7e3"/><circle cx="10.0" cy="19.8" r="4.5" fill="none" stroke="#fafafa" stroke-width="1.3"/><circle cx="8.6" cy="18.4" r="4.5" fill="none" stroke="#c4c6c2" stroke-width="1.6"/><circle cx="9.2" cy="19" r="4.5" fill="#e5e7e3"/><circle cx="18.1" cy="13.0" r="5" fill="none" stroke="#fafafa" stroke-width="1.3"/><circle cx="16.7" cy="11.6" r="5" fill="none" stroke="#c4c6c2" stroke-width="1.6"/><circle cx="17.3" cy="12.2" r="5" fill="#e5e7e3"/><circle cx="29.6" cy="10.8" r="6" fill="none" stroke="#fafafa" stroke-width="1.3"/><circle cx="28.2" cy="9.4" r="6" fill="none" stroke="#c4c6c2" stroke-width="1.6"/><circle cx="28.8" cy="10" r="6" fill="#e5e7e3"/><circle cx="50.599999999999994" cy="59.0" r="13" fill="none" stroke="#fafafa" stroke-width="1.3"/><circle cx="49.199999999999996" cy="57.6" r="13" fill="none" stroke="#c4c6c2" stroke-width="1.6"/><circle cx="49.8" cy="58.2" r="13" fill="#e5e7e3"/><circle cx="49.199999999999996" cy="34.0" r="5.5" fill="none" stroke="#fafafa" stroke-width="1.3"/><circle cx="47.8" cy="32.6" r="5.5" fill="none" stroke="#c4c6c2" stroke-width="1.6"/><circle cx="48.4" cy="33.2" r="5.5" fill="#e5e7e3"/><circle cx="60.8" cy="40.8" r="5" fill="none" stroke="#fafafa" stroke-width="1.3"/><circle cx="59.4" cy="39.4" r="5" fill="none" stroke="#c4c6c2" stroke-width="1.6"/><circle cx="60" cy="40" r="5" fill="#e5e7e3"/><circle cx="67.5" cy="50.199999999999996" r="4.5" fill="none" stroke="#fafafa" stroke-width="1.3"/><circle cx="66.10000000000001" cy="48.8" r="4.5" fill="none" stroke="#c4c6c2" stroke-width="1.6"/><circle cx="66.7" cy="49.4" r="4.5" fill="#e5e7e3"/></svg></div><div class="th" style="left:336px;top:169px"><svg width="75" height="75" viewBox="0 0 75 75"><rect width="75" height="75" fill="#c8d4e2"/><g stroke-linecap="round" fill="none" filter="url(#f17)"><path d="M-7 2Q-7 -2 -9 -10" stroke="#ffffff" stroke-width="0.7"/><path d="M5 57Q12 55 22 49" stroke="#e8eff6" stroke-width="1.4"/><path d="M28 80Q34 68 43 62" stroke="#b4c4d6" stroke-width="1"/><path d="M24 76Q27 72 32 66" stroke="#e8eff6" stroke-width="0.7"/><path d="M76 66Q76 57 83 45" stroke="#b4c4d6" stroke-width="1"/><path d="M49 11Q56 3 66 -2" stroke="#d0dce8" stroke-width="0.7"/><path d="M34 15Q40 11 40 -0" stroke="#d0dce8" stroke-width="1.4"/><path d="M79 62Q87 63 93 58" stroke="#e8eff6" stroke-width="1.4"/><path d="M18 7Q27 6 33 8" stroke="#ffffff" stroke-width="1"/><path d="M49 79Q51 73 58 70" stroke="#b4c4d6" stroke-width="1"/><path d="M61 41Q73 31 78 24" stroke="#ffffff" stroke-width="0.7"/><path d="M55 67Q61 61 66 55" stroke="#b4c4d6" stroke-width="1"/><path d="M78 35Q76 27 72 20" stroke="#d0dce8" stroke-width="0.7"/><path d="M14 59Q12 44 13 36" stroke="#d8e2ee" stroke-width="1.4"/><path d="M17 7Q29 3 34 -7" stroke="#ffffff" stroke-width="0.7"/><path d="M75 68Q81 62 87 53" stroke="#f4f8fc" stroke-width="1.4"/><path d="M54 36Q62 29 65 21" stroke="#d8e2ee" stroke-width="0.7"/><path d="M25 38Q34 35 37 29" stroke="#e8eff6" stroke-width="1.4"/><path d="M60 -4Q60 -12 61 -17" stroke="#e8eff6" stroke-width="1"/><path d="M70 19Q70 13 65 1" stroke="#d8e2ee" stroke-width="0.7"/><path d="M34 65Q36 57 41 50" stroke="#d0dce8" stroke-width="1"/><path d="M26 9Q30 11 38 6" stroke="#d8e2ee" stroke-width="0.7"/><path d="M60 -2Q64 -8 69 -16" stroke="#b4c4d6" stroke-width="1.4"/><path d="M8 -5Q19 -4 25 -8" stroke="#d8e2ee" stroke-width="0.7"/><path d="M16 16Q18 12 20 3" stroke="#d8e2ee" stroke-width="0.7"/><path d="M13 5Q25 8 31 9" stroke="#d8e2ee" stroke-width="1.4"/><path d="M9 25Q5 16 -6 11" stroke="#f4f8fc" stroke-width="1"/><path d="M27 11Q26 0 31 -11" stroke="#b4c4d6" stroke-width="1.4"/><path d="M13 67Q12 57 6 55" stroke="#ffffff" stroke-width="0.7"/><path d="M56 59Q62 59 71 54" stroke="#ffffff" stroke-width="1"/><path d="M12 68Q14 60 17 52" stroke="#b4c4d6" stroke-width="1"/><path d="M51 -8Q57 -18 60 -25" stroke="#d0dce8" stroke-width="0.7"/><path d="M33 24Q42 18 53 14" stroke="#f4f8fc" stroke-width="0.7"/><path d="M52 66Q53 63 56 56" stroke="#d0dce8" stroke-width="0.7"/><path d="M64 57Q73 53 86 53" stroke="#b4c4d6" stroke-width="0.7"/><path d="M32 4Q35 -8 33 -14" stroke="#d0dce8" stroke-width="1"/><path d="M33 16Q32 8 30 -4" stroke="#d8e2ee" stroke-width="1"/><path d="M22 8Q31 13 35 10" stroke="#d8e2ee" stroke-width="0.7"/><path d="M58 2Q62 -7 71 -15" stroke="#b4c4d6" stroke-width="1"/><path d="M62 40Q60 31 64 23" stroke="#d8e2ee" stroke-width="0.7"/><path d="M-3 45Q-5 38 -0 27" stroke="#d8e2ee" stroke-width="1.4"/><path d="M64 53Q71 56 77 54" stroke="#f4f8fc" stroke-width="1"/><path d="M4 19Q9 10 5 4" stroke="#f4f8fc" stroke-width="0.7"/><path d="M49 7Q57 2 65 -4" stroke="#e8eff6" stroke-width="1.4"/><path d="M69 5Q72 -3 72 -12" stroke="#e8eff6" stroke-width="1"/><path d="M35 10Q40 4 45 -3" stroke="#ffffff" stroke-width="0.7"/><path d="M55 35Q58 28 60 24" stroke="#b4c4d6" stroke-width="0.7"/><path d="M61 -2Q71 -6 80 -15" stroke="#d0dce8" stroke-width="0.7"/><path d="M1 63Q4 59 10 56" stroke="#ffffff" stroke-width="1.4"/><path d="M-3 18Q-5 5 -1 -3" stroke="#ffffff" stroke-width="1"/><path d="M6 -5Q17 -16 24 -20" stroke="#d0dce8" stroke-width="0.7"/><path d="M14 69Q20 61 26 55" stroke="#d8e2ee" stroke-width="1.4"/><path d="M7 15Q14 14 29 10" stroke="#f4f8fc" stroke-width="1.4"/><path d="M49 1Q53 -10 63 -17" stroke="#d0dce8" stroke-width="1"/><path d="M6 33Q12 22 11 15" stroke="#d0dce8" stroke-width="1"/><path d="M22 49Q28 49 32 41" stroke="#b4c4d6" stroke-width="0.7"/><path d="M-7 39Q-12 29 -11 18" stroke="#b4c4d6" stroke-width="1.4"/><path d="M76 67Q80 60 84 48" stroke="#b4c4d6" stroke-width="0.7"/><path d="M-8 36Q0 31 12 27" stroke="#b4c4d6" stroke-width="0.7"/><path d="M31 13Q39 6 40 4" stroke="#b4c4d6" stroke-width="1.4"/><path d="M57 39Q62 29 61 26" stroke="#d0dce8" stroke-width="1"/><path d="M27 33Q31 28 42 23" stroke="#b4c4d6" stroke-width="1.4"/><path d="M52 60Q58 54 63 51" stroke="#e8eff6" stroke-width="0.7"/><path d="M2 14Q2 6 7 4" stroke="#d0dce8" stroke-width="1.4"/><path d="M31 14Q29 8 35 -0" stroke="#ffffff" stroke-width="0.7"/><path d="M15 31Q9 23 10 21" stroke="#ffffff" stroke-width="1"/><path d="M61 79Q65 68 62 64" stroke="#f4f8fc" stroke-width="0.7"/><path d="M69 66Q78 66 92 66" stroke="#b4c4d6" stroke-width="1.4"/><path d="M70 42Q75 41 75 32" stroke="#f4f8fc" stroke-width="1.4"/><path d="M38 47Q44 42 43 36" stroke="#b4c4d6" stroke-width="1.4"/><path d="M69 2Q67 -5 65 -13" stroke="#d8e2ee" stroke-width="1"/><path d="M50 45Q50 38 56 31" stroke="#d8e2ee" stroke-width="0.7"/><path d="M24 72Q32 67 35 60" stroke="#d0dce8" stroke-width="1.4"/><path d="M63 54Q65 46 65 39" stroke="#d8e2ee" stroke-width="1"/><path d="M63 38Q62 31 60 26" stroke="#d0dce8" stroke-width="1"/><path d="M68 49Q80 50 85 47" stroke="#d0dce8" stroke-width="1.4"/><path d="M33 -2Q39 -14 41 -23" stroke="#d0dce8" stroke-width="1"/><path d="M15 75Q10 68 13 59" stroke="#f4f8fc" stroke-width="1.4"/><path d="M77 80Q83 79 92 71" stroke="#d0dce8" stroke-width="1"/><path d="M28 -7Q33 -22 35 -28" stroke="#ffffff" stroke-width="0.7"/><path d="M44 58Q53 51 59 40" stroke="#b4c4d6" stroke-width="0.7"/><path d="M1 65Q12 64 20 57" stroke="#e8eff6" stroke-width="1"/><path d="M-0 42Q8 37 13 38" stroke="#e8eff6" stroke-width="1.4"/><path d="M13 72Q17 63 21 59" stroke="#ffffff" stroke-width="0.7"/><path d="M69 56Q74 54 79 51" stroke="#d8e2ee" stroke-width="1.4"/><path d="M5 46Q3 33 5 27" stroke="#d0dce8" stroke-width="1.4"/><path d="M29 67Q35 65 39 60" stroke="#f4f8fc" stroke-width="1.4"/><path d="M17 33Q27 30 33 28" stroke="#ffffff" stroke-width="1"/><path d="M8 56Q12 52 11 45" stroke="#ffffff" stroke-width="1"/><path d="M-8 25Q-6 20 -2 16" stroke="#d0dce8" stroke-width="1"/><path d="M1 76Q8 69 13 58" stroke="#e8eff6" stroke-width="1"/><path d="M16 75Q25 70 36 66" stroke="#b4c4d6" stroke-width="1"/><path d="M67 9Q69 2 74 -12" stroke="#f4f8fc" stroke-width="1"/><path d="M36 50Q40 44 48 42" stroke="#ffffff" stroke-width="1.4"/><path d="M8 23Q3 21 4 13" stroke="#d0dce8" stroke-width="0.7"/><path d="M-7 23Q-5 15 -5 0" stroke="#ffffff" stroke-width="1"/><path d="M8 32Q14 28 16 18" stroke="#e8eff6" stroke-width="1.4"/><path d="M59 45Q66 40 70 39" stroke="#e8eff6" stroke-width="1"/><path d="M-7 77Q-6 68 -3 58" stroke="#ffffff" stroke-width="0.7"/><path d="M35 49Q42 49 44 42" stroke="#d8e2ee" stroke-width="1.4"/><path d="M19 67Q21 58 25 46" stroke="#d8e2ee" stroke-width="1.4"/><path d="M44 17Q54 26 62 28" stroke="#b4c4d6" stroke-width="1.4"/><path d="M48 23Q49 17 51 10" stroke="#e8eff6" stroke-width="0.7"/><path d="M-4 28Q-2 18 5 13" stroke="#e8eff6" stroke-width="1"/><path d="M67 4Q69 -4 79 -9" stroke="#d8e2ee" stroke-width="0.7"/><path d="M-3 65Q5 63 13 56" stroke="#ffffff" stroke-width="1.4"/><path d="M58 62Q62 49 59 43" stroke="#d0dce8" stroke-width="1.4"/><path d="M3 39Q14 34 19 30" stroke="#e8eff6" stroke-width="0.7"/><path d="M56 5Q61 -2 64 -3" stroke="#d0dce8" stroke-width="0.7"/><path d="M26 54Q26 43 26 34" stroke="#ffffff" stroke-width="0.7"/><path d="M73 7Q66 1 62 -6" stroke="#d0dce8" stroke-width="1.4"/><path d="M4 56Q11 47 13 42" stroke="#f4f8fc" stroke-width="1.4"/><path d="M45 77Q60 70 69 71" stroke="#d8e2ee" stroke-width="1"/><path d="M-1 65Q4 57 14 46" stroke="#ffffff" stroke-width="1"/><path d="M67 30Q72 34 83 32" stroke="#d8e2ee" stroke-width="1"/><path d="M42 29Q46 15 45 5" stroke="#ffffff" stroke-width="1"/><path d="M80 55Q85 48 89 37" stroke="#e8eff6" stroke-width="0.7"/><path d="M12 11Q9 6 12 -5" stroke="#d8e2ee" stroke-width="1"/><path d="M-5 21Q-17 15 -26 12" stroke="#f4f8fc" stroke-width="1"/><path d="M10 5Q16 -2 22 -1" stroke="#d8e2ee" stroke-width="1.4"/><path d="M23 20Q18 13 10 9" stroke="#d8e2ee" stroke-width="1.4"/><path d="M70 -1Q74 -6 85 -15" stroke="#f4f8fc" stroke-width="1"/><path d="M61 56Q70 50 71 44" stroke="#b4c4d6" stroke-width="0.7"/><path d="M48 8Q57 4 68 -5" stroke="#ffffff" stroke-width="0.7"/><path d="M50 3Q53 -5 55 -12" stroke="#b4c4d6" stroke-width="1"/><path d="M58 37Q66 37 67 30" stroke="#b4c4d6" stroke-width="0.7"/><path d="M10 45Q13 44 23 40" stroke="#e8eff6" stroke-width="0.7"/><path d="M20 25Q29 16 32 6" stroke="#b4c4d6" stroke-width="1.4"/><path d="M34 20Q41 9 43 5" stroke="#d0dce8" stroke-width="0.7"/><path d="M75 13Q77 10 82 3" stroke="#b4c4d6" stroke-width="0.7"/><path d="M62 62Q58 55 57 49" stroke="#ffffff" stroke-width="1"/><path d="M-6 37Q-7 30 -3 23" stroke="#e8eff6" stroke-width="0.7"/><path d="M9 66Q19 61 31 64" stroke="#e8eff6" stroke-width="0.7"/><path d="M35 30Q38 25 42 21" stroke="#e8eff6" stroke-width="0.7"/><path d="M60 23Q68 12 73 8" stroke="#d8e2ee" stroke-width="1.4"/><path d="M74 42Q76 35 85 27" stroke="#ffffff" stroke-width="1"/><path d="M48 30Q57 25 66 16" stroke="#d0dce8" stroke-width="1.4"/><path d="M52 64Q57 54 61 42" stroke="#d0dce8" stroke-width="1"/><path d="M21 21Q28 13 30 3" stroke="#b4c4d6" stroke-width="0.7"/><path d="M58 5Q62 -3 61 -7" stroke="#d8e2ee" stroke-width="1"/><path d="M19 78Q28 78 29 74" stroke="#d0dce8" stroke-width="0.7"/><path d="M58 54Q60 46 58 38" stroke="#ffffff" stroke-width="1"/><path d="M52 26Q53 14 51 7" stroke="#d0dce8" stroke-width="1.4"/><path d="M43 24Q48 23 54 24" stroke="#ffffff" stroke-width="0.7"/><path d="M22 5Q31 0 33 -6" stroke="#b4c4d6" stroke-width="0.7"/><path d="M76 55Q73 46 67 38" stroke="#b4c4d6" stroke-width="1.4"/><path d="M62 -1Q65 -11 75 -15" stroke="#b4c4d6" stroke-width="1"/><path d="M60 56Q67 47 72 42" stroke="#e8eff6" stroke-width="1"/><path d="M75 -6Q75 -10 82 -14" stroke="#d8e2ee" stroke-width="1.4"/><path d="M63 -1Q64 -9 72 -14" stroke="#f4f8fc" stroke-width="0.7"/><path d="M21 31Q28 22 41 20" stroke="#e8eff6" stroke-width="1.4"/><path d="M49 40Q54 40 61 48" stroke="#e8eff6" stroke-width="0.7"/><path d="M37 46Q37 39 38 30" stroke="#ffffff" stroke-width="1"/><path d="M15 74Q7 62 5 54" stroke="#b4c4d6" stroke-width="1.4"/><path d="M22 -8Q33 -10 38 -20" stroke="#e8eff6" stroke-width="0.7"/><path d="M12 25Q15 18 16 6" stroke="#e8eff6" stroke-width="1.4"/><path d="M5 55Q2 49 1 41" stroke="#ffffff" stroke-width="1.4"/><path d="M69 78Q76 76 84 68" stroke="#e8eff6" stroke-width="1"/><path d="M11 65Q18 57 29 50" stroke="#f4f8fc" stroke-width="1"/><path d="M8 54Q22 51 28 50" stroke="#d8e2ee" stroke-width="1"/><path d="M2 73Q5 64 8 53" stroke="#f4f8fc" stroke-width="1"/><path d="M24 24Q36 25 42 23" stroke="#d0dce8" stroke-width="1"/><path d="M38 36Q42 26 45 17" stroke="#b4c4d6" stroke-width="0.7"/><path d="M65 32Q67 29 70 22" stroke="#d0dce8" stroke-width="1"/><path d="M72 71Q80 64 83 51" stroke="#ffffff" stroke-width="0.7"/><path d="M-2 68Q-1 57 8 51" stroke="#f4f8fc" stroke-width="1.4"/><path d="M19 63Q28 52 32 46" stroke="#ffffff" stroke-width="1.4"/><path d="M69 23Q81 20 87 19" stroke="#b4c4d6" stroke-width="1"/><path d="M14 14Q12 6 17 2" stroke="#e8eff6" stroke-width="1"/><path d="M20 37Q27 38 30 31" stroke="#f4f8fc" stroke-width="1.4"/></g></svg></div><div class="th" style="left:419px;top:169px"><svg width="75" height="75" viewBox="0 0 75 75"><rect width="75" height="75" fill="#e6ebf2"/><g stroke-linecap="round" fill="none" filter="url(#f18)"><path d="M23 30Q24 24 24 13" stroke="#d8e0ea" stroke-width="1.4"/><path d="M-6 1Q0 -8 3 -9" stroke="#d8e0ea" stroke-width="1"/><path d="M42 12Q43 2 42 -11" stroke="#ffffff" stroke-width="1"/><path d="M45 41Q52 34 55 23" stroke="#f2f6fa" stroke-width="0.7"/><path d="M3 1Q4 -7 2 -21" stroke="#ffffff" stroke-width="1.4"/><path d="M66 11Q70 3 71 -9" stroke="#d8e0ea" stroke-width="1"/><path d="M69 63Q72 58 82 56" stroke="#f8fafc" stroke-width="1"/><path d="M15 56Q5 51 1 40" stroke="#f8fafc" stroke-width="1"/><path d="M35 77Q43 77 50 73" stroke="#f2f6fa" stroke-width="0.7"/><path d="M-1 37Q5 28 8 21" stroke="#d8e0ea" stroke-width="0.7"/><path d="M45 71Q42 62 34 52" stroke="#eaeff5" stroke-width="0.7"/><path d="M22 79Q16 72 15 57" stroke="#f2f6fa" stroke-width="0.7"/><path d="M1 56Q-4 48 -0 45" stroke="#d8e0ea" stroke-width="0.7"/><path d="M24 15Q29 7 28 4" stroke="#f8fafc" stroke-width="1"/><path d="M38 42Q45 37 54 27" stroke="#f8fafc" stroke-width="1.4"/><path d="M13 -3Q14 -4 19 -12" stroke="#ffffff" stroke-width="1"/><path d="M13 71Q14 61 10 51" stroke="#f8fafc" stroke-width="1.4"/><path d="M35 41Q39 34 44 20" stroke="#d8e0ea" stroke-width="1.4"/><path d="M66 35Q73 35 78 35" stroke="#d8e0ea" stroke-width="0.7"/><path d="M30 42Q43 42 50 46" stroke="#ffffff" stroke-width="1.4"/><path d="M35 2Q39 -2 42 -8" stroke="#ffffff" stroke-width="1"/><path d="M78 48Q91 46 98 50" stroke="#ffffff" stroke-width="1.4"/><path d="M17 60Q20 52 17 40" stroke="#ffffff" stroke-width="1.4"/><path d="M34 58Q36 52 40 44" stroke="#eaeff5" stroke-width="0.7"/><path d="M56 0Q64 -3 70 -5" stroke="#eaeff5" stroke-width="0.7"/><path d="M64 0Q65 -10 69 -18" stroke="#d8e0ea" stroke-width="0.7"/><path d="M73 48Q76 44 80 37" stroke="#eaeff5" stroke-width="1"/><path d="M68 -3Q72 -5 83 -13" stroke="#ffffff" stroke-width="1.4"/><path d="M31 64Q33 59 37 54" stroke="#f2f6fa" stroke-width="0.7"/><path d="M36 37Q45 34 47 28" stroke="#ffffff" stroke-width="1"/><path d="M67 72Q67 61 65 54" stroke="#d8e0ea" stroke-width="1.4"/><path d="M25 -4Q27 -14 28 -23" stroke="#f2f6fa" stroke-width="0.7"/><path d="M12 7Q15 -2 18 -3" stroke="#ffffff" stroke-width="1"/><path d="M57 47Q62 35 68 30" stroke="#f8fafc" stroke-width="1"/><path d="M28 70Q39 67 50 63" stroke="#d8e0ea" stroke-width="0.7"/><path d="M27 36Q32 35 41 29" stroke="#f2f6fa" stroke-width="0.7"/><path d="M75 78Q75 67 77 64" stroke="#ffffff" stroke-width="1.4"/><path d="M80 45Q88 45 96 41" stroke="#f2f6fa" stroke-width="1"/><path d="M36 2Q36 -4 37 -10" stroke="#f2f6fa" stroke-width="1.4"/><path d="M69 46Q71 39 76 28" stroke="#f8fafc" stroke-width="1"/><path d="M-2 44Q-2 37 4 35" stroke="#f8fafc" stroke-width="0.7"/><path d="M3 27Q9 29 18 30" stroke="#d8e0ea" stroke-width="1.4"/><path d="M73 60Q72 52 78 48" stroke="#f8fafc" stroke-width="0.7"/><path d="M65 60Q69 51 72 42" stroke="#d8e0ea" stroke-width="1.4"/><path d="M71 62Q71 51 67 47" stroke="#d8e0ea" stroke-width="1"/><path d="M-4 75Q4 61 6 54" stroke="#d8e0ea" stroke-width="1"/><path d="M30 72Q30 69 31 60" stroke="#d8e0ea" stroke-width="1.4"/><path d="M34 37Q43 33 57 35" stroke="#f2f6fa" stroke-width="1"/><path d="M21 4Q23 2 28 -3" stroke="#f8fafc" stroke-width="1.4"/><path d="M-7 22Q-3 18 3 15" stroke="#f2f6fa" stroke-width="0.7"/><path d="M77 46Q82 41 88 37" stroke="#eaeff5" stroke-width="1"/><path d="M23 36Q21 33 16 24" stroke="#f8fafc" stroke-width="0.7"/><path d="M16 -3Q19 -6 29 -12" stroke="#f8fafc" stroke-width="1.4"/><path d="M80 47Q89 37 89 34" stroke="#ffffff" stroke-width="1"/><path d="M15 79Q21 72 29 70" stroke="#f2f6fa" stroke-width="1.4"/><path d="M64 14Q70 20 76 18" stroke="#eaeff5" stroke-width="1"/><path d="M27 -5Q28 -20 32 -28" stroke="#f8fafc" stroke-width="0.7"/><path d="M19 -4Q23 -14 20 -17" stroke="#f8fafc" stroke-width="1.4"/><path d="M44 26Q51 12 57 6" stroke="#d8e0ea" stroke-width="0.7"/><path d="M19 55Q19 51 21 44" stroke="#d8e0ea" stroke-width="1"/><path d="M55 14Q64 7 75 3" stroke="#d8e0ea" stroke-width="0.7"/><path d="M43 52Q41 39 46 30" stroke="#f2f6fa" stroke-width="0.7"/><path d="M29 29Q28 26 26 17" stroke="#d8e0ea" stroke-width="1"/><path d="M15 65Q21 64 25 58" stroke="#ffffff" stroke-width="1.4"/><path d="M3 72Q9 72 13 66" stroke="#eaeff5" stroke-width="1.4"/><path d="M58 35Q65 33 77 25" stroke="#ffffff" stroke-width="1.4"/><path d="M43 48Q48 47 52 40" stroke="#eaeff5" stroke-width="1.4"/><path d="M35 65Q44 63 50 53" stroke="#d8e0ea" stroke-width="1.4"/><path d="M8 30Q13 25 21 19" stroke="#d8e0ea" stroke-width="1"/><path d="M27 65Q22 60 21 56" stroke="#f8fafc" stroke-width="0.7"/><path d="M66 60Q74 52 80 42" stroke="#eaeff5" stroke-width="0.7"/><path d="M-8 23Q0 15 4 8" stroke="#ffffff" stroke-width="1.4"/><path d="M20 15Q24 8 26 6" stroke="#f2f6fa" stroke-width="1"/><path d="M50 14Q58 7 69 6" stroke="#f8fafc" stroke-width="1.4"/><path d="M24 71Q32 71 36 67" stroke="#f8fafc" stroke-width="1"/><path d="M48 48Q53 41 51 36" stroke="#f2f6fa" stroke-width="1"/><path d="M71 7Q68 -1 67 -13" stroke="#f2f6fa" stroke-width="0.7"/><path d="M33 40Q30 34 32 23" stroke="#eaeff5" stroke-width="1.4"/><path d="M79 43Q83 38 92 35" stroke="#ffffff" stroke-width="1"/><path d="M25 39Q29 34 30 26" stroke="#f8fafc" stroke-width="1.4"/><path d="M-5 77Q5 66 11 60" stroke="#eaeff5" stroke-width="0.7"/><path d="M70 72Q75 66 83 67" stroke="#ffffff" stroke-width="1"/><path d="M46 49Q51 49 54 41" stroke="#ffffff" stroke-width="0.7"/><path d="M1 29Q14 22 23 21" stroke="#d8e0ea" stroke-width="1.4"/><path d="M48 50Q46 40 45 35" stroke="#eaeff5" stroke-width="1.4"/><path d="M20 11Q22 4 24 -0" stroke="#ffffff" stroke-width="1.4"/><path d="M53 35Q55 29 61 23" stroke="#d8e0ea" stroke-width="0.7"/><path d="M15 36Q19 30 27 24" stroke="#d8e0ea" stroke-width="0.7"/><path d="M46 67Q50 55 50 49" stroke="#f8fafc" stroke-width="0.7"/><path d="M-5 46Q-6 38 -3 29" stroke="#f8fafc" stroke-width="0.7"/><path d="M79 44Q78 40 73 31" stroke="#f2f6fa" stroke-width="1"/><path d="M8 50Q6 42 5 34" stroke="#ffffff" stroke-width="1.4"/><path d="M32 47Q38 41 47 32" stroke="#eaeff5" stroke-width="1.4"/><path d="M67 30Q63 22 62 17" stroke="#d8e0ea" stroke-width="0.7"/><path d="M8 12Q11 5 15 -4" stroke="#ffffff" stroke-width="1"/><path d="M41 59Q50 55 59 46" stroke="#d8e0ea" stroke-width="0.7"/><path d="M55 57Q57 48 58 46" stroke="#d8e0ea" stroke-width="0.7"/><path d="M80 31Q83 23 92 20" stroke="#f8fafc" stroke-width="0.7"/><path d="M16 20Q14 11 12 4" stroke="#eaeff5" stroke-width="0.7"/><path d="M76 59Q74 50 80 46" stroke="#f2f6fa" stroke-width="1.4"/><path d="M57 73Q66 73 79 71" stroke="#ffffff" stroke-width="1.4"/><path d="M50 76Q54 64 54 52" stroke="#ffffff" stroke-width="1"/><path d="M24 4Q31 4 44 -4" stroke="#f8fafc" stroke-width="1.4"/><path d="M63 46Q71 44 75 46" stroke="#ffffff" stroke-width="1"/><path d="M16 18Q16 12 11 0" stroke="#f2f6fa" stroke-width="0.7"/><path d="M55 67Q56 61 55 48" stroke="#eaeff5" stroke-width="1"/><path d="M63 19Q73 15 77 12" stroke="#eaeff5" stroke-width="1"/><path d="M-7 48Q5 53 8 52" stroke="#f2f6fa" stroke-width="0.7"/><path d="M45 11Q42 5 43 -9" stroke="#ffffff" stroke-width="1.4"/><path d="M33 71Q36 61 34 57" stroke="#eaeff5" stroke-width="1.4"/><path d="M19 32Q23 19 25 12" stroke="#ffffff" stroke-width="1.4"/><path d="M27 37Q34 34 39 36" stroke="#d8e0ea" stroke-width="1.4"/><path d="M28 31Q37 24 39 19" stroke="#eaeff5" stroke-width="0.7"/><path d="M-0 30Q2 20 3 17" stroke="#eaeff5" stroke-width="1"/><path d="M27 39Q35 33 46 25" stroke="#ffffff" stroke-width="1"/><path d="M-1 36Q2 32 6 24" stroke="#f8fafc" stroke-width="1"/><path d="M35 50Q39 40 36 35" stroke="#f8fafc" stroke-width="1"/><path d="M59 6Q58 2 64 -5" stroke="#d8e0ea" stroke-width="0.7"/><path d="M26 11Q31 12 35 4" stroke="#eaeff5" stroke-width="1"/><path d="M60 -5Q62 -13 56 -16" stroke="#f8fafc" stroke-width="0.7"/><path d="M36 19Q37 16 44 6" stroke="#d8e0ea" stroke-width="1"/><path d="M78 65Q91 65 96 69" stroke="#f2f6fa" stroke-width="1"/><path d="M40 48Q42 43 47 40" stroke="#eaeff5" stroke-width="0.7"/><path d="M14 25Q7 15 5 5" stroke="#d8e0ea" stroke-width="0.7"/><path d="M-5 28Q6 27 14 19" stroke="#d8e0ea" stroke-width="1"/><path d="M9 9Q11 6 12 -1" stroke="#d8e0ea" stroke-width="1"/><path d="M34 19Q37 7 41 0" stroke="#f8fafc" stroke-width="0.7"/><path d="M11 59Q13 50 9 41" stroke="#d8e0ea" stroke-width="0.7"/><path d="M29 -7Q27 -12 27 -18" stroke="#f8fafc" stroke-width="1"/><path d="M15 5Q16 -7 25 -15" stroke="#f2f6fa" stroke-width="1"/><path d="M8 70Q6 61 8 46" stroke="#f2f6fa" stroke-width="1"/><path d="M68 5Q80 2 88 -5" stroke="#d8e0ea" stroke-width="1.4"/><path d="M79 38Q83 32 80 26" stroke="#f2f6fa" stroke-width="1.4"/><path d="M57 15Q53 8 58 0" stroke="#eaeff5" stroke-width="1.4"/><path d="M16 38Q13 29 18 27" stroke="#f2f6fa" stroke-width="1"/><path d="M10 51Q17 43 22 36" stroke="#f2f6fa" stroke-width="1.4"/><path d="M57 69Q64 64 68 56" stroke="#ffffff" stroke-width="1.4"/><path d="M60 13Q65 20 75 23" stroke="#f8fafc" stroke-width="0.7"/><path d="M48 7Q55 -0 61 -6" stroke="#f2f6fa" stroke-width="1"/><path d="M38 30Q48 23 53 22" stroke="#d8e0ea" stroke-width="1.4"/></g></svg></div><div class="th" style="left:502px;top:169px"><svg width="75" height="75" viewBox="0 0 75 75"><rect width="75" height="75" filter="url(#f19)"/></svg></div><div class="th" style="left:585px;top:169px"><svg width="75" height="75" viewBox="0 0 75 75"><rect width="75" height="75" filter="url(#f20)"/></svg></div><div class="th" style="left:667px;top:169px"><svg width="75" height="75" viewBox="0 0 75 75"><rect width="75" height="75" filter="url(#f21)"/></svg></div><div class="th" style="left:5px;top:251px"><svg width="75" height="75" viewBox="0 0 75 75"><rect width="75" height="75" filter="url(#f22)"/></svg></div><div class="th" style="left:88px;top:251px"><svg width="75" height="75" viewBox="0 0 75 75"><rect width="75" height="75" filter="url(#f23)"/></svg></div><div class="th" style="left:171px;top:251px"><svg width="75" height="75" viewBox="0 0 75 75"><rect width="75" height="75" fill="#1e400c"/><g stroke-linecap="round" fill="none"><path d="M9.0 53.6Q9.1 57.8 5.2 62.2" stroke="#24500e" stroke-width="2"/><path d="M10.6 39.8Q7.9 40.3 5.8 43.6" stroke="#44821f" stroke-width="1.2"/><path d="M73.3 54.0Q75.1 58.5 75.9 66.7" stroke="#6ca840" stroke-width="1.6"/><path d="M40.9 54.0Q36.7 60.9 35.2 65.2" stroke="#2e6414" stroke-width="1.2"/><path d="M63.7 -3.3Q68.5 -1.9 73.4 2.0" stroke="#6ca840" stroke-width="1.2"/><path d="M34.9 64.7Q40.5 63.9 42.1 66.4" stroke="#44821f" stroke-width="2"/><path d="M35.5 65.3Q40.2 68.4 45.5 72.7" stroke="#122804" stroke-width="1.6"/><path d="M37.6 22.0Q36.4 26.8 38.0 29.9" stroke="#3c7a1c" stroke-width="1.6"/><path d="M-4.8 1.0Q-5.8 5.8 -7.7 10.1" stroke="#44821f" stroke-width="2"/><path d="M4.6 51.9Q1.7 57.8 -0.0 62.8" stroke="#183408" stroke-width="1.6"/><path d="M15.9 9.3Q11.9 10.9 8.9 11.1" stroke="#6ca840" stroke-width="2"/><path d="M39.2 50.9Q45.5 55.6 48.2 59.5" stroke="#4a8c26" stroke-width="1.6"/><path d="M36.7 26.9Q41.3 30.9 45.4 35.4" stroke="#4a8c26" stroke-width="1.6"/><path d="M60.8 36.1Q58.6 35.8 55.2 39.2" stroke="#5c9c34" stroke-width="1.2"/><path d="M9.5 0.9Q13.5 6.2 15.5 11.6" stroke="#4a8c26" stroke-width="1.6"/><path d="M6.9 50.3Q4.0 51.0 -2.1 52.8" stroke="#24500e" stroke-width="1.2"/><path d="M69.9 46.1Q70.3 51.2 72.2 55.9" stroke="#356e18" stroke-width="1.6"/><path d="M6.8 56.3Q7.1 58.8 9.3 62.7" stroke="#2e6414" stroke-width="1.2"/><path d="M67.4 44.7Q69.0 46.2 73.5 51.1" stroke="#4a8c26" stroke-width="1.2"/><path d="M10.9 49.5Q8.9 50.1 5.8 53.6" stroke="#3c7a1c" stroke-width="2"/><path d="M75.1 28.7Q69.0 30.0 65.4 32.3" stroke="#4a8c26" stroke-width="2"/><path d="M58.3 59.3Q57.9 61.9 55.2 68.4" stroke="#2e6414" stroke-width="1.6"/><path d="M68.5 28.8Q66.2 35.5 66.0 40.5" stroke="#24500e" stroke-width="1.6"/><path d="M58.4 15.8Q64.6 19.6 68.2 21.0" stroke="#5c9c34" stroke-width="1.6"/><path d="M75.6 3.4Q76.0 7.2 72.6 12.5" stroke="#183408" stroke-width="2"/><path d="M48.1 59.4Q54.3 61.7 56.6 65.2" stroke="#183408" stroke-width="1.6"/><path d="M50.9 30.7Q46.1 34.6 41.3 35.0" stroke="#356e18" stroke-width="2"/><path d="M49.8 32.6Q47.8 35.1 49.3 41.3" stroke="#6ca840" stroke-width="2"/><path d="M31.9 16.0Q28.2 19.6 24.9 25.4" stroke="#6ca840" stroke-width="1.6"/><path d="M22.8 14.4Q17.7 15.7 12.6 17.2" stroke="#2e6414" stroke-width="2"/><path d="M46.4 13.4Q47.9 19.9 48.0 23.7" stroke="#44821f" stroke-width="2"/><path d="M64.7 17.3Q65.5 23.3 65.3 26.8" stroke="#5c9c34" stroke-width="2"/><path d="M79.1 -4.5Q82.2 -2.7 83.6 2.3" stroke="#6ca840" stroke-width="1.2"/><path d="M1.8 20.7Q-1.8 23.7 -9.3 22.7" stroke="#356e18" stroke-width="1.2"/><path d="M54.8 12.5Q56.5 18.9 60.0 21.6" stroke="#24500e" stroke-width="1.6"/><path d="M38.7 75.3Q31.4 76.3 26.5 76.6" stroke="#122804" stroke-width="1.6"/><path d="M55.9 8.4Q57.8 11.6 58.8 16.7" stroke="#356e18" stroke-width="1.2"/><path d="M51.8 47.8Q56.0 51.0 64.0 51.8" stroke="#24500e" stroke-width="2"/><path d="M26.3 1.4Q26.0 4.6 24.1 9.9" stroke="#356e18" stroke-width="1.2"/><path d="M75.0 7.6Q73.0 7.4 67.7 8.2" stroke="#183408" stroke-width="1.2"/><path d="M43.5 72.5Q43.5 77.9 46.0 84.1" stroke="#5c9c34" stroke-width="2"/><path d="M15.8 43.9Q13.0 44.6 7.2 49.2" stroke="#356e18" stroke-width="2"/><path d="M1.2 32.0Q-5.8 35.3 -10.0 38.5" stroke="#24500e" stroke-width="2"/><path d="M46.6 47.7Q45.7 52.1 47.6 59.3" stroke="#183408" stroke-width="1.6"/><path d="M20.3 48.3Q16.0 47.8 14.2 50.5" stroke="#3c7a1c" stroke-width="1.2"/><path d="M25.6 25.0Q30.7 28.0 34.4 29.9" stroke="#5c9c34" stroke-width="1.2"/><path d="M-2.2 14.8Q0.2 19.2 1.1 21.8" stroke="#24500e" stroke-width="2"/><path d="M31.0 22.6Q35.1 26.1 38.3 28.6" stroke="#183408" stroke-width="2"/><path d="M9.8 55.3Q11.1 60.5 9.9 62.5" stroke="#356e18" stroke-width="2"/><path d="M-0.3 52.9Q-0.9 59.4 -4.9 62.1" stroke="#44821f" stroke-width="1.6"/><path d="M12.9 34.4Q9.1 37.0 7.9 41.4" stroke="#183408" stroke-width="1.2"/><path d="M59.2 50.0Q64.7 52.7 70.2 56.1" stroke="#122804" stroke-width="1.2"/><path d="M79.8 42.2Q77.2 44.7 71.3 49.4" stroke="#183408" stroke-width="2"/><path d="M10.2 40.9Q8.6 44.9 3.0 45.6" stroke="#4a8c26" stroke-width="2"/><path d="M59.2 78.7Q57.1 82.8 51.5 86.8" stroke="#24500e" stroke-width="2"/><path d="M20.2 8.7Q18.7 14.2 15.1 17.7" stroke="#356e18" stroke-width="2"/><path d="M13.0 10.7Q8.9 12.8 6.6 14.6" stroke="#356e18" stroke-width="1.6"/><path d="M12.5 62.1Q15.7 67.0 17.0 70.0" stroke="#5c9c34" stroke-width="1.2"/><path d="M27.0 28.5Q31.5 29.8 37.7 28.6" stroke="#44821f" stroke-width="1.6"/><path d="M11.7 14.3Q8.5 16.8 3.9 23.0" stroke="#356e18" stroke-width="1.2"/><path d="M37.5 34.2Q40.1 37.4 41.0 44.0" stroke="#44821f" stroke-width="1.6"/><path d="M58.9 26.9Q64.6 29.7 67.0 35.0" stroke="#3c7a1c" stroke-width="1.6"/><path d="M70.7 1.6Q74.7 7.6 76.6 10.2" stroke="#4a8c26" stroke-width="1.2"/><path d="M53.0 20.1Q57.0 22.5 58.8 24.9" stroke="#356e18" stroke-width="1.2"/><path d="M53.3 23.5Q52.8 26.4 49.5 31.1" stroke="#24500e" stroke-width="1.6"/><path d="M54.2 30.2Q57.9 33.4 65.5 34.8" stroke="#122804" stroke-width="2"/><path d="M54.9 36.5Q54.8 41.9 53.7 46.2" stroke="#6ca840" stroke-width="1.6"/><path d="M7.1 29.2Q8.4 34.1 9.0 39.5" stroke="#122804" stroke-width="1.2"/><path d="M-3.3 49.7Q-1.2 54.4 -2.2 57.1" stroke="#44821f" stroke-width="1.6"/><path d="M36.7 9.0Q32.5 13.3 30.0 13.9" stroke="#183408" stroke-width="1.6"/><path d="M10.9 7.9Q8.8 12.1 6.3 18.9" stroke="#24500e" stroke-width="2"/><path d="M4.8 29.4Q2.3 30.3 -0.6 34.5" stroke="#24500e" stroke-width="1.2"/><path d="M13.7 43.3Q17.7 47.7 20.1 49.6" stroke="#122804" stroke-width="1.6"/><path d="M20.7 22.0Q14.8 23.2 12.5 24.3" stroke="#6ca840" stroke-width="1.6"/><path d="M60.6 44.3Q66.9 46.7 71.1 51.0" stroke="#3c7a1c" stroke-width="1.6"/><path d="M56.2 40.1Q60.4 41.7 63.5 44.2" stroke="#356e18" stroke-width="1.6"/><path d="M-0.5 19.4Q4.5 19.2 7.5 21.7" stroke="#4a8c26" stroke-width="1.6"/><path d="M28.2 17.9Q24.4 24.6 21.7 28.4" stroke="#2e6414" stroke-width="1.6"/><path d="M38.6 4.0Q35.7 2.6 31.1 4.7" stroke="#183408" stroke-width="2"/><path d="M20.9 23.1Q26.1 25.1 31.2 29.9" stroke="#6ca840" stroke-width="1.2"/><path d="M13.2 68.8Q17.2 75.3 18.4 78.1" stroke="#24500e" stroke-width="1.2"/><path d="M57.6 39.9Q60.7 42.3 60.6 47.3" stroke="#44821f" stroke-width="1.6"/><path d="M35.8 22.9Q29.3 25.9 24.6 26.9" stroke="#4a8c26" stroke-width="2"/><path d="M52.4 77.0Q48.2 77.9 45.3 79.8" stroke="#5c9c34" stroke-width="1.2"/><path d="M56.3 -2.6Q56.0 3.8 53.3 9.4" stroke="#24500e" stroke-width="2"/><path d="M14.6 5.3Q20.2 5.6 22.0 5.9" stroke="#6ca840" stroke-width="2"/><path d="M51.6 13.0Q57.6 15.2 62.3 19.2" stroke="#6ca840" stroke-width="1.2"/><path d="M39.1 -0.9Q35.5 4.6 32.1 8.0" stroke="#4a8c26" stroke-width="1.2"/><path d="M1.3 22.9Q7.1 24.7 9.9 28.2" stroke="#356e18" stroke-width="1.6"/><path d="M75.8 42.1Q79.1 46.3 79.7 46.7" stroke="#6ca840" stroke-width="1.6"/><path d="M34.4 72.1Q29.3 72.9 27.1 75.0" stroke="#183408" stroke-width="2"/><path d="M25.0 48.7Q19.6 50.2 18.3 53.0" stroke="#4a8c26" stroke-width="1.2"/><path d="M62.1 53.9Q60.7 57.4 62.0 60.2" stroke="#2e6414" stroke-width="2"/><path d="M14.7 5.9Q18.7 9.0 20.5 15.2" stroke="#44821f" stroke-width="2"/><path d="M21.2 16.5Q25.6 20.2 28.0 22.0" stroke="#5c9c34" stroke-width="1.2"/><path d="M20.4 14.4Q17.6 15.7 10.8 20.4" stroke="#24500e" stroke-width="1.6"/><path d="M34.2 53.9Q31.1 54.4 28.5 58.5" stroke="#44821f" stroke-width="1.6"/><path d="M72.5 2.2Q70.8 7.5 66.6 9.5" stroke="#4a8c26" stroke-width="2"/><path d="M63.4 56.4Q68.3 54.8 71.5 57.2" stroke="#4a8c26" stroke-width="1.2"/><path d="M69.1 78.8Q65.2 79.7 62.5 79.7" stroke="#6ca840" stroke-width="1.6"/><path d="M62.0 36.5Q64.5 41.9 68.7 43.9" stroke="#24500e" stroke-width="1.2"/><path d="M8.6 29.9Q10.3 34.2 12.9 36.5" stroke="#183408" stroke-width="1.6"/><path d="M40.3 -0.7Q43.8 0.1 47.5 1.2" stroke="#24500e" stroke-width="2"/><path d="M66.1 50.9Q65.9 57.1 67.1 62.3" stroke="#44821f" stroke-width="2"/><path d="M36.1 30.7Q39.5 33.5 45.3 38.8" stroke="#5c9c34" stroke-width="2"/><path d="M39.9 71.9Q46.5 73.5 50.5 75.2" stroke="#5c9c34" stroke-width="2"/><path d="M40.5 16.1Q46.0 20.7 48.8 24.8" stroke="#3c7a1c" stroke-width="1.2"/><path d="M12.3 40.7Q9.5 45.8 6.7 48.5" stroke="#122804" stroke-width="2"/><path d="M15.1 31.6Q15.5 37.6 17.8 42.0" stroke="#6ca840" stroke-width="1.6"/><path d="M11.3 55.5Q8.6 56.4 2.5 56.3" stroke="#5c9c34" stroke-width="1.6"/><path d="M36.8 44.9Q32.8 47.8 30.7 47.0" stroke="#183408" stroke-width="2"/><path d="M31.4 -0.1Q29.4 3.6 24.6 10.6" stroke="#24500e" stroke-width="2"/><path d="M62.7 14.3Q60.1 18.3 57.3 19.0" stroke="#44821f" stroke-width="2"/><path d="M2.2 76.3Q-1.6 77.1 -6.1 80.6" stroke="#44821f" stroke-width="1.6"/><path d="M27.0 20.7Q20.8 25.1 17.0 28.8" stroke="#4a8c26" stroke-width="2"/><path d="M48.2 8.9Q45.4 10.3 41.1 14.0" stroke="#3c7a1c" stroke-width="2"/><path d="M65.5 3.4Q63.5 3.0 59.2 3.8" stroke="#6ca840" stroke-width="1.6"/><path d="M62.6 35.6Q66.2 38.1 73.3 38.5" stroke="#6ca840" stroke-width="2"/><path d="M43.9 7.5Q43.6 10.4 43.6 14.1" stroke="#3c7a1c" stroke-width="1.6"/><path d="M64.4 59.7Q57.9 63.4 53.5 63.9" stroke="#6ca840" stroke-width="2"/><path d="M55.2 17.5Q55.2 22.6 55.9 25.4" stroke="#122804" stroke-width="2"/><path d="M61.1 27.3Q63.4 34.2 67.1 38.4" stroke="#24500e" stroke-width="1.6"/><path d="M59.3 19.1Q62.3 23.6 61.4 31.6" stroke="#3c7a1c" stroke-width="1.2"/><path d="M72.1 75.5Q72.0 80.1 73.2 87.0" stroke="#6ca840" stroke-width="1.6"/><path d="M1.4 67.2Q5.0 70.7 11.0 73.1" stroke="#3c7a1c" stroke-width="2"/><path d="M41.6 75.4Q43.7 77.2 43.7 81.9" stroke="#122804" stroke-width="2"/><path d="M28.9 77.3Q25.4 76.8 19.5 78.4" stroke="#6ca840" stroke-width="1.2"/><path d="M-3.4 50.1Q0.3 53.5 3.3 55.1" stroke="#6ca840" stroke-width="2"/><path d="M4.4 29.1Q0.8 33.0 -5.9 34.9" stroke="#5c9c34" stroke-width="1.2"/><path d="M53.4 65.9Q56.5 67.4 60.2 72.4" stroke="#6ca840" stroke-width="1.6"/><path d="M58.1 18.2Q66.1 18.7 70.4 18.9" stroke="#2e6414" stroke-width="2"/><path d="M27.9 75.4Q28.9 80.0 29.2 86.6" stroke="#3c7a1c" stroke-width="2"/><path d="M53.3 17.3Q53.9 20.7 57.3 23.4" stroke="#2e6414" stroke-width="1.2"/><path d="M43.4 65.4Q43.3 70.1 43.1 72.5" stroke="#44821f" stroke-width="1.2"/><path d="M17.0 54.0Q12.1 57.6 8.1 61.3" stroke="#183408" stroke-width="1.6"/><path d="M1.0 77.4Q-1.2 79.3 -4.7 83.5" stroke="#122804" stroke-width="1.2"/><path d="M62.8 55.2Q59.7 59.3 59.2 63.1" stroke="#44821f" stroke-width="1.6"/><path d="M78.3 74.9Q80.4 77.3 85.4 76.5" stroke="#2e6414" stroke-width="2"/><path d="M14.0 73.4Q13.9 76.0 11.0 80.1" stroke="#183408" stroke-width="1.2"/><path d="M6.1 24.6Q7.1 30.2 9.3 36.8" stroke="#5c9c34" stroke-width="2"/><path d="M10.6 67.1Q11.9 70.4 15.3 75.7" stroke="#5c9c34" stroke-width="2"/><path d="M44.1 29.6Q42.5 34.3 40.5 37.0" stroke="#4a8c26" stroke-width="1.2"/><path d="M43.8 63.0Q49.9 64.1 53.2 68.0" stroke="#356e18" stroke-width="2"/><path d="M32.1 53.2Q35.9 55.7 39.4 59.6" stroke="#122804" stroke-width="1.2"/><path d="M75.4 78.2Q75.4 80.1 77.2 85.8" stroke="#3c7a1c" stroke-width="1.2"/><path d="M20.9 64.9Q25.3 66.6 27.9 69.5" stroke="#356e18" stroke-width="1.2"/><path d="M78.6 68.1Q82.3 73.5 83.6 78.7" stroke="#24500e" stroke-width="2"/><path d="M64.1 56.3Q63.0 60.9 64.4 66.6" stroke="#6ca840" stroke-width="1.2"/><path d="M63.6 60.2Q58.7 61.6 54.7 64.4" stroke="#356e18" stroke-width="1.2"/><path d="M27.2 43.5Q22.6 46.9 19.0 48.8" stroke="#183408" stroke-width="1.6"/><path d="M46.0 -3.2Q44.4 0.6 43.2 2.1" stroke="#5c9c34" stroke-width="1.2"/><path d="M53.3 56.5Q55.4 57.4 60.9 57.3" stroke="#6ca840" stroke-width="1.6"/><path d="M8.5 12.3Q9.0 15.4 10.3 22.1" stroke="#356e18" stroke-width="1.6"/><path d="M53.3 71.6Q59.9 75.2 62.6 78.3" stroke="#2e6414" stroke-width="2"/><path d="M57.3 5.9Q60.4 8.0 66.7 12.6" stroke="#122804" stroke-width="1.6"/><path d="M56.2 0.7Q54.4 5.4 53.0 11.6" stroke="#122804" stroke-width="2"/><path d="M-1.5 13.9Q3.0 14.4 6.5 15.2" stroke="#356e18" stroke-width="1.2"/><path d="M19.7 56.1Q20.8 60.8 18.7 64.7" stroke="#122804" stroke-width="1.2"/><path d="M21.5 35.8Q15.1 41.9 12.6 44.1" stroke="#183408" stroke-width="1.6"/><path d="M41.9 31.8Q38.1 33.4 31.8 36.3" stroke="#4a8c26" stroke-width="1.6"/><path d="M28.4 7.2Q30.3 9.6 35.2 8.6" stroke="#4a8c26" stroke-width="2"/><path d="M63.3 38.3Q65.2 43.8 70.1 45.5" stroke="#4a8c26" stroke-width="1.6"/><path d="M1.4 1.8Q-3.9 4.0 -6.9 8.3" stroke="#3c7a1c" stroke-width="2"/><path d="M35.8 22.6Q34.6 27.3 36.1 29.0" stroke="#5c9c34" stroke-width="1.2"/><path d="M31.6 30.3Q28.8 33.4 27.9 37.3" stroke="#122804" stroke-width="1.6"/><path d="M40.8 50.6Q33.8 54.0 30.1 55.0" stroke="#24500e" stroke-width="1.6"/><path d="M26.2 33.7Q20.5 34.3 13.9 36.8" stroke="#5c9c34" stroke-width="1.2"/><path d="M52.1 54.7Q54.4 53.5 58.0 55.9" stroke="#44821f" stroke-width="1.6"/><path d="M59.4 41.8Q63.5 44.5 64.3 50.1" stroke="#122804" stroke-width="1.2"/><path d="M20.5 75.8Q18.6 79.0 15.7 79.4" stroke="#44821f" stroke-width="1.6"/><path d="M73.0 78.2Q75.9 80.9 78.7 80.7" stroke="#24500e" stroke-width="1.2"/><path d="M32.6 6.4Q36.1 12.0 42.5 13.8" stroke="#24500e" stroke-width="1.6"/><path d="M63.1 10.7Q65.8 13.6 66.4 19.6" stroke="#2e6414" stroke-width="1.2"/><path d="M29.9 65.2Q30.5 71.1 31.3 73.6" stroke="#183408" stroke-width="2"/><path d="M76.5 45.2Q72.0 45.8 71.1 50.1" stroke="#183408" stroke-width="2"/><path d="M-4.3 68.8Q-0.2 70.0 5.5 73.0" stroke="#4a8c26" stroke-width="1.6"/><path d="M46.1 57.8Q39.9 59.7 35.5 60.3" stroke="#122804" stroke-width="2"/><path d="M39.4 26.7Q37.6 30.2 36.0 36.9" stroke="#6ca840" stroke-width="2"/><path d="M20.1 78.0Q23.3 82.4 26.7 88.6" stroke="#356e18" stroke-width="1.2"/><path d="M1.8 15.2Q5.7 16.2 13.4 15.6" stroke="#3c7a1c" stroke-width="1.6"/><path d="M50.7 75.5Q46.0 76.4 42.2 77.8" stroke="#6ca840" stroke-width="1.2"/><path d="M7.7 75.6Q12.5 77.3 14.6 78.0" stroke="#44821f" stroke-width="1.6"/><path d="M25.1 13.8Q29.2 14.8 35.6 16.7" stroke="#6ca840" stroke-width="1.2"/><path d="M75.0 15.8Q73.5 18.5 74.7 24.7" stroke="#4a8c26" stroke-width="1.6"/><path d="M48.1 14.8Q45.7 21.1 46.3 27.6" stroke="#3c7a1c" stroke-width="1.6"/><path d="M2.6 46.0Q8.2 47.8 11.7 47.4" stroke="#5c9c34" stroke-width="1.2"/><path d="M14.2 58.7Q8.0 61.2 3.4 61.7" stroke="#5c9c34" stroke-width="1.6"/><path d="M14.5 73.2Q20.3 74.1 26.1 73.4" stroke="#5c9c34" stroke-width="1.6"/><path d="M34.0 13.4Q28.9 17.7 23.2 18.6" stroke="#44821f" stroke-width="2"/><path d="M65.5 17.9Q66.1 24.5 66.4 28.3" stroke="#44821f" stroke-width="1.2"/><path d="M12.3 23.5Q15.9 24.7 20.3 25.7" stroke="#4a8c26" stroke-width="2"/><path d="M5.2 73.0Q0.2 74.4 -5.9 75.8" stroke="#24500e" stroke-width="1.6"/><path d="M47.6 73.7Q49.0 75.5 54.2 74.1" stroke="#6ca840" stroke-width="1.2"/><path d="M2.1 48.1Q5.5 51.8 6.3 56.1" stroke="#44821f" stroke-width="1.6"/><path d="M-0.0 5.6Q1.0 8.2 -0.7 12.2" stroke="#6ca840" stroke-width="1.6"/><path d="M61.1 15.6Q54.4 18.8 51.4 22.3" stroke="#2e6414" stroke-width="1.6"/><path d="M1.0 16.4Q2.9 20.4 8.2 24.6" stroke="#183408" stroke-width="1.2"/><path d="M42.3 19.2Q45.8 19.8 49.5 23.8" stroke="#4a8c26" stroke-width="2"/><path d="M33.4 -1.2Q33.9 2.1 32.3 5.4" stroke="#3c7a1c" stroke-width="1.2"/><path d="M3.7 35.4Q1.1 38.0 -2.5 39.3" stroke="#6ca840" stroke-width="1.2"/><path d="M22.8 63.6Q23.2 67.5 27.4 74.9" stroke="#5c9c34" stroke-width="2"/><path d="M69.7 -0.6Q70.3 5.0 71.5 8.5" stroke="#4a8c26" stroke-width="1.2"/><path d="M-4.0 10.5Q-4.4 16.0 -4.9 21.8" stroke="#183408" stroke-width="2"/><path d="M5.5 52.4Q1.1 51.6 -4.7 53.9" stroke="#6ca840" stroke-width="1.2"/><path d="M64.9 13.9Q70.8 15.9 74.8 16.8" stroke="#4a8c26" stroke-width="2"/><path d="M18.0 64.8Q10.3 67.0 5.5 66.3" stroke="#3c7a1c" stroke-width="1.6"/><path d="M77.0 9.6Q82.0 14.2 86.3 15.5" stroke="#3c7a1c" stroke-width="2"/><path d="M44.2 26.6Q40.5 28.7 37.9 29.9" stroke="#3c7a1c" stroke-width="2"/><path d="M48.4 75.2Q47.9 80.1 51.2 86.9" stroke="#5c9c34" stroke-width="1.2"/><path d="M57.9 59.3Q54.1 59.4 46.4 62.2" stroke="#3c7a1c" stroke-width="1.6"/><path d="M79.2 11.1Q76.2 11.9 70.9 13.1" stroke="#24500e" stroke-width="1.6"/><path d="M26.7 42.8Q27.3 45.5 24.2 49.3" stroke="#44821f" stroke-width="1.6"/><path d="M74.2 64.0Q69.0 63.1 64.2 65.1" stroke="#44821f" stroke-width="2"/><path d="M56.2 45.8Q61.5 47.2 63.7 47.4" stroke="#356e18" stroke-width="1.2"/><path d="M52.0 73.0Q56.0 76.2 59.3 78.4" stroke="#3c7a1c" stroke-width="1.2"/><path d="M-2.7 12.3Q-5.8 14.1 -8.3 16.7" stroke="#24500e" stroke-width="1.6"/><path d="M28.7 69.8Q25.5 73.0 20.4 75.0" stroke="#3c7a1c" stroke-width="1.6"/><path d="M17.4 45.2Q22.3 46.9 26.4 51.7" stroke="#4a8c26" stroke-width="1.2"/><path d="M44.0 75.2Q44.8 78.9 43.5 83.4" stroke="#356e18" stroke-width="1.2"/><path d="M48.8 68.3Q49.2 70.6 47.9 75.6" stroke="#5c9c34" stroke-width="1.6"/><path d="M76.8 79.6Q81.8 83.0 85.0 88.9" stroke="#122804" stroke-width="2"/><path d="M39.8 58.7Q35.0 64.8 32.2 68.9" stroke="#2e6414" stroke-width="2"/><path d="M59.2 75.1Q55.7 79.4 51.6 80.5" stroke="#2e6414" stroke-width="1.2"/><path d="M73.7 63.6Q69.3 65.5 62.7 66.9" stroke="#356e18" stroke-width="1.6"/><path d="M8.6 29.0Q12.9 28.2 16.7 30.4" stroke="#122804" stroke-width="1.2"/><path d="M56.8 57.8Q57.6 63.5 56.0 69.1" stroke="#6ca840" stroke-width="1.2"/><path d="M4.4 -4.1Q7.0 -2.4 9.7 1.0" stroke="#183408" stroke-width="1.2"/><path d="M62.1 27.0Q60.5 31.4 56.4 35.4" stroke="#5c9c34" stroke-width="2"/><path d="M38.8 46.8Q39.8 53.1 38.0 58.8" stroke="#4a8c26" stroke-width="1.2"/><path d="M21.5 3.3Q19.3 5.2 13.2 3.4" stroke="#2e6414" stroke-width="1.6"/><path d="M29.6 44.8Q33.2 46.3 34.8 50.8" stroke="#5c9c34" stroke-width="1.2"/><path d="M42.2 79.1Q45.0 82.4 48.1 83.5" stroke="#3c7a1c" stroke-width="2"/><path d="M13.6 49.1Q9.7 49.4 2.4 49.5" stroke="#122804" stroke-width="1.2"/><path d="M74.2 38.1Q79.7 40.1 83.3 41.0" stroke="#4a8c26" stroke-width="1.6"/><path d="M69.1 15.9Q67.2 19.5 64.9 21.3" stroke="#24500e" stroke-width="2"/><path d="M31.1 10.3Q32.5 12.4 33.9 16.6" stroke="#3c7a1c" stroke-width="1.2"/><path d="M59.7 67.3Q64.3 71.1 65.0 73.3" stroke="#183408" stroke-width="1.6"/><path d="M47.2 63.4Q41.2 65.7 38.3 68.4" stroke="#24500e" stroke-width="1.6"/><path d="M14.6 22.9Q17.3 24.9 20.8 25.7" stroke="#3c7a1c" stroke-width="2"/><path d="M58.1 4.5Q57.5 8.1 54.1 10.7" stroke="#122804" stroke-width="1.2"/><path d="M58.3 18.4Q55.8 21.0 56.5 24.7" stroke="#5c9c34" stroke-width="2"/><path d="M59.8 22.8Q57.8 26.9 52.6 32.7" stroke="#3c7a1c" stroke-width="1.2"/><path d="M35.7 12.4Q37.6 16.4 35.6 24.1" stroke="#122804" stroke-width="2"/><path d="M45.5 14.4Q41.7 15.8 35.2 19.7" stroke="#5c9c34" stroke-width="1.6"/><path d="M22.0 14.0Q26.2 16.5 33.4 18.9" stroke="#5c9c34" stroke-width="1.6"/><path d="M66.2 54.1Q63.4 58.3 57.8 59.0" stroke="#5c9c34" stroke-width="1.6"/><path d="M-0.7 33.3Q3.2 34.9 4.8 36.9" stroke="#5c9c34" stroke-width="1.6"/><path d="M73.5 2.7Q75.8 6.4 75.7 10.7" stroke="#356e18" stroke-width="1.2"/><path d="M60.5 66.0Q59.2 68.6 54.0 67.6" stroke="#24500e" stroke-width="1.6"/><path d="M50.0 4.8Q48.5 9.2 44.4 16.3" stroke="#24500e" stroke-width="1.6"/><path d="M27.5 71.7Q29.9 75.8 34.1 79.4" stroke="#2e6414" stroke-width="2"/><path d="M8.5 44.0Q8.7 48.7 11.6 53.6" stroke="#122804" stroke-width="1.2"/><path d="M-2.7 31.6Q-7.3 32.7 -11.6 31.7" stroke="#2e6414" stroke-width="2"/><path d="M44.4 76.2Q41.1 78.4 41.2 82.6" stroke="#5c9c34" stroke-width="1.6"/><path d="M74.1 58.2Q66.8 58.1 61.5 61.3" stroke="#4a8c26" stroke-width="1.2"/><path d="M4.5 36.1Q0.2 39.5 -2.1 40.4" stroke="#24500e" stroke-width="1.2"/><path d="M79.7 72.8Q80.6 77.4 80.0 82.6" stroke="#2e6414" stroke-width="2"/><path d="M27.7 65.9Q24.9 68.0 21.6 71.9" stroke="#44821f" stroke-width="2"/><path d="M8.1 39.4Q6.5 45.6 7.6 48.4" stroke="#2e6414" stroke-width="2"/><path d="M7.7 16.8Q13.2 21.7 16.1 26.4" stroke="#356e18" stroke-width="1.2"/><path d="M1.1 69.5Q-2.2 70.8 -5.8 70.9" stroke="#3c7a1c" stroke-width="1.2"/><path d="M5.6 38.4Q11.3 41.8 13.7 44.6" stroke="#24500e" stroke-width="1.6"/><path d="M1.4 53.2Q-3.1 55.8 -11.1 56.3" stroke="#2e6414" stroke-width="2"/><path d="M30.4 34.1Q35.4 34.3 40.7 35.7" stroke="#4a8c26" stroke-width="2"/><path d="M47.9 42.0Q50.2 41.8 54.7 42.7" stroke="#356e18" stroke-width="1.2"/><path d="M3.6 14.7Q1.8 16.1 -2.2 18.5" stroke="#3c7a1c" stroke-width="1.2"/><path d="M70.0 28.2Q64.1 26.7 61.1 28.9" stroke="#24500e" stroke-width="2"/><path d="M36.8 21.1Q32.4 20.8 29.8 22.8" stroke="#6ca840" stroke-width="1.2"/><path d="M15.9 73.9Q17.8 79.8 19.4 85.4" stroke="#44821f" stroke-width="1.2"/><path d="M55.8 -4.0Q59.7 1.7 65.2 4.7" stroke="#44821f" stroke-width="1.2"/><path d="M52.4 75.6Q55.1 81.9 53.9 88.2" stroke="#122804" stroke-width="2"/><path d="M6.2 42.4Q4.8 49.5 1.0 53.1" stroke="#2e6414" stroke-width="1.6"/><path d="M27.6 -3.5Q31.4 1.0 34.9 7.2" stroke="#6ca840" stroke-width="1.6"/><path d="M-2.2 70.3Q-1.5 74.9 1.1 77.2" stroke="#3c7a1c" stroke-width="2"/><path d="M36.6 77.1Q34.3 76.7 28.6 79.5" stroke="#183408" stroke-width="1.6"/><path d="M4.0 7.1Q-1.4 11.2 -5.4 15.4" stroke="#122804" stroke-width="1.6"/><path d="M76.1 7.0Q76.8 11.6 76.8 14.1" stroke="#122804" stroke-width="1.2"/><path d="M57.3 31.9Q51.5 34.4 46.3 35.0" stroke="#122804" stroke-width="2"/><path d="M18.9 19.0Q17.4 25.7 18.9 28.6" stroke="#2e6414" stroke-width="2"/><path d="M68.5 40.9Q65.4 44.2 63.5 47.8" stroke="#3c7a1c" stroke-width="2"/><path d="M42.2 -0.1Q38.0 2.0 31.9 2.7" stroke="#356e18" stroke-width="1.6"/><path d="M-1.5 62.7Q1.4 61.6 6.7 63.7" stroke="#183408" stroke-width="2"/><path d="M74.1 11.2Q71.1 15.6 66.3 16.9" stroke="#356e18" stroke-width="2"/><path d="M18.8 5.9Q23.4 9.7 25.9 10.7" stroke="#183408" stroke-width="1.6"/><path d="M3.7 12.0Q0.8 14.5 -2.7 14.6" stroke="#24500e" stroke-width="1.2"/><path d="M6.6 56.5Q-0.1 58.0 -3.5 59.9" stroke="#356e18" stroke-width="1.2"/><path d="M20.7 24.3Q24.1 26.9 25.9 31.2" stroke="#6ca840" stroke-width="2"/><path d="M48.2 -1.3Q51.1 3.7 52.4 6.4" stroke="#2e6414" stroke-width="1.2"/><path d="M78.6 20.9Q83.7 22.5 89.8 20.9" stroke="#2e6414" stroke-width="2"/><path d="M5.2 33.4Q7.5 39.0 7.9 44.7" stroke="#4a8c26" stroke-width="2"/><path d="M37.1 69.5Q34.2 69.9 29.1 72.5" stroke="#356e18" stroke-width="2"/><path d="M57.4 56.1Q60.6 55.1 66.4 56.9" stroke="#44821f" stroke-width="1.6"/><path d="M50.6 40.5Q53.0 45.5 54.9 48.4" stroke="#183408" stroke-width="1.2"/><path d="M41.0 38.5Q37.9 45.3 37.3 49.2" stroke="#183408" stroke-width="1.2"/><path d="M2.2 37.3Q6.5 43.3 8.5 47.9" stroke="#5c9c34" stroke-width="1.6"/><path d="M35.4 65.3Q38.5 70.9 40.0 77.3" stroke="#122804" stroke-width="1.6"/><path d="M38.2 23.9Q34.2 27.2 28.0 27.2" stroke="#2e6414" stroke-width="2"/><path d="M60.9 32.2Q58.9 36.5 60.3 39.1" stroke="#44821f" stroke-width="2"/><path d="M13.0 45.3Q9.1 46.0 4.6 50.2" stroke="#44821f" stroke-width="1.2"/><path d="M54.2 -4.1Q50.6 -3.1 44.9 -3.1" stroke="#2e6414" stroke-width="1.2"/><path d="M26.2 46.0Q31.6 48.4 37.2 47.4" stroke="#356e18" stroke-width="1.6"/><path d="M75.8 9.9Q74.0 12.3 74.3 17.8" stroke="#24500e" stroke-width="2"/><path d="M42.7 77.7Q39.7 77.2 35.6 78.3" stroke="#122804" stroke-width="2"/><path d="M31.7 -3.3Q33.7 -0.0 35.0 1.8" stroke="#6ca840" stroke-width="2"/><path d="M-0.6 60.6Q-1.7 63.7 -6.3 68.6" stroke="#356e18" stroke-width="1.2"/><path d="M23.3 17.8Q21.2 17.2 17.8 20.5" stroke="#4a8c26" stroke-width="1.2"/><path d="M36.1 29.7Q41.9 33.9 44.1 36.2" stroke="#356e18" stroke-width="1.2"/><path d="M76.5 35.9Q79.8 36.3 86.9 36.6" stroke="#24500e" stroke-width="2"/><path d="M79.1 79.1Q82.5 81.7 82.5 87.6" stroke="#44821f" stroke-width="2"/><path d="M77.2 46.5Q80.4 52.3 81.6 58.4" stroke="#6ca840" stroke-width="1.6"/><path d="M28.1 38.6Q23.3 42.3 17.1 43.5" stroke="#44821f" stroke-width="1.2"/><path d="M67.4 39.0Q62.8 45.8 61.7 49.2" stroke="#5c9c34" stroke-width="1.6"/><path d="M60.0 20.9Q56.4 21.0 49.2 22.2" stroke="#122804" stroke-width="1.2"/><path d="M17.7 -2.9Q17.6 -0.7 18.9 5.0" stroke="#356e18" stroke-width="2"/><path d="M27.1 58.6Q30.4 60.6 33.1 61.4" stroke="#6ca840" stroke-width="1.2"/><path d="M37.1 45.8Q42.2 50.6 45.6 52.8" stroke="#24500e" stroke-width="1.2"/><path d="M-1.1 29.3Q-2.7 32.4 -6.7 33.9" stroke="#5c9c34" stroke-width="1.6"/><path d="M5.2 51.1Q3.3 51.9 -0.7 52.8" stroke="#6ca840" stroke-width="1.2"/><path d="M5.5 33.9Q11.1 35.3 14.4 40.6" stroke="#6ca840" stroke-width="2"/><path d="M34.0 57.9Q30.5 60.5 28.7 63.5" stroke="#6ca840" stroke-width="2"/><path d="M34.3 79.4Q38.1 83.7 39.8 84.1" stroke="#356e18" stroke-width="1.6"/><path d="M-2.6 2.4Q-7.4 3.6 -10.3 5.9" stroke="#5c9c34" stroke-width="1.2"/><path d="M32.8 52.6Q31.3 55.0 26.2 58.2" stroke="#24500e" stroke-width="1.6"/><path d="M43.7 61.5Q38.2 62.3 31.7 62.1" stroke="#44821f" stroke-width="1.6"/><path d="M36.2 3.6Q41.4 5.0 44.6 4.1" stroke="#183408" stroke-width="1.6"/><path d="M29.3 57.7Q30.0 63.5 34.3 67.9" stroke="#3c7a1c" stroke-width="1.2"/><path d="M40.9 62.1Q43.4 63.5 45.8 66.0" stroke="#5c9c34" stroke-width="1.6"/><path d="M35.7 15.8Q32.4 18.6 31.5 22.3" stroke="#2e6414" stroke-width="2"/><path d="M34.3 23.8Q38.1 26.1 41.9 27.5" stroke="#122804" stroke-width="1.2"/><path d="M40.4 37.3Q36.8 39.4 33.7 43.7" stroke="#5c9c34" stroke-width="1.6"/><path d="M13.8 68.1Q19.2 67.5 21.0 69.5" stroke="#6ca840" stroke-width="1.2"/><path d="M24.3 15.7Q25.8 20.7 25.4 25.6" stroke="#44821f" stroke-width="1.6"/><path d="M55.9 76.8Q55.6 81.2 52.2 87.1" stroke="#6ca840" stroke-width="1.6"/><path d="M18.6 8.4Q17.9 12.2 16.4 16.6" stroke="#6ca840" stroke-width="1.6"/><path d="M35.8 60.3Q41.5 62.2 44.5 63.4" stroke="#6ca840" stroke-width="1.6"/><path d="M5.6 71.6Q-1.9 72.7 -5.5 75.1" stroke="#2e6414" stroke-width="1.2"/><path d="M52.5 49.1Q54.6 52.7 59.2 54.8" stroke="#5c9c34" stroke-width="1.6"/><path d="M67.9 63.4Q66.2 64.2 61.3 68.5" stroke="#44821f" stroke-width="2"/><path d="M68.5 3.5Q66.2 8.2 60.6 10.4" stroke="#122804" stroke-width="2"/><path d="M68.3 38.4Q65.3 45.4 61.3 48.6" stroke="#44821f" stroke-width="1.6"/><path d="M53.0 -3.2Q56.7 -0.1 64.2 0.9" stroke="#356e18" stroke-width="2"/><path d="M75.4 8.9Q72.6 9.9 68.2 9.4" stroke="#2e6414" stroke-width="2"/><path d="M2.9 43.5Q2.6 48.9 4.0 55.1" stroke="#3c7a1c" stroke-width="2"/><path d="M55.0 36.1Q53.4 37.1 48.4 40.7" stroke="#122804" stroke-width="1.6"/><path d="M32.7 14.6Q31.9 20.1 31.7 25.0" stroke="#44821f" stroke-width="1.6"/><path d="M76.1 69.9Q74.7 69.8 69.5 71.8" stroke="#3c7a1c" stroke-width="1.6"/><path d="M79.2 69.5Q81.0 71.8 84.3 73.1" stroke="#3c7a1c" stroke-width="1.6"/><path d="M46.5 -2.1Q47.0 1.4 46.9 7.0" stroke="#4a8c26" stroke-width="1.2"/><path d="M2.6 37.2Q6.3 40.6 10.7 41.5" stroke="#2e6414" stroke-width="1.2"/><path d="M48.3 13.2Q44.4 15.0 38.6 20.7" stroke="#2e6414" stroke-width="1.6"/><path d="M13.8 34.0Q7.9 34.6 1.3 34.1" stroke="#356e18" stroke-width="1.2"/><path d="M52.0 -2.1Q52.9 4.6 57.1 9.7" stroke="#356e18" stroke-width="2"/><path d="M61.9 -1.8Q59.5 2.6 60.0 7.6" stroke="#183408" stroke-width="2"/><path d="M-0.8 56.8Q2.7 62.7 4.1 68.8" stroke="#2e6414" stroke-width="1.2"/><path d="M38.6 75.5Q35.1 78.7 29.2 80.8" stroke="#44821f" stroke-width="1.6"/><path d="M21.7 6.7Q22.4 8.9 26.8 10.7" stroke="#4a8c26" stroke-width="1.2"/><path d="M76.9 60.5Q72.1 61.7 69.8 64.7" stroke="#183408" stroke-width="1.2"/><path d="M2.1 -0.3Q5.7 3.7 8.6 5.0" stroke="#6ca840" stroke-width="1.6"/><path d="M46.9 33.6Q50.8 37.6 51.5 43.4" stroke="#4a8c26" stroke-width="1.6"/><path d="M73.7 14.9Q77.5 19.3 83.7 19.8" stroke="#4a8c26" stroke-width="1.6"/><path d="M48.3 -2.9Q47.6 2.1 44.4 7.7" stroke="#24500e" stroke-width="1.2"/><path d="M49.5 57.7Q54.6 62.6 56.3 65.4" stroke="#183408" stroke-width="1.6"/><path d="M26.0 65.5Q21.5 70.4 15.6 73.1" stroke="#6ca840" stroke-width="2"/><path d="M42.0 41.0Q38.1 46.5 35.3 49.6" stroke="#44821f" stroke-width="1.2"/><path d="M6.1 4.4Q5.3 6.5 4.2 10.5" stroke="#122804" stroke-width="1.6"/><path d="M28.4 58.5Q25.6 61.7 25.9 65.9" stroke="#122804" stroke-width="1.2"/><path d="M25.3 6.6Q25.3 11.3 26.4 14.7" stroke="#24500e" stroke-width="2"/><path d="M44.6 27.9Q49.7 29.9 53.6 33.3" stroke="#4a8c26" stroke-width="1.6"/><path d="M32.0 77.1Q28.2 79.0 22.0 84.5" stroke="#6ca840" stroke-width="2"/><path d="M70.4 79.4Q74.3 81.0 80.1 86.6" stroke="#356e18" stroke-width="1.2"/><path d="M14.9 67.5Q20.5 70.2 25.4 70.5" stroke="#5c9c34" stroke-width="1.6"/><path d="M42.2 11.3Q42.6 17.2 40.6 20.7" stroke="#24500e" stroke-width="1.6"/><path d="M59.1 63.8Q58.6 67.5 54.3 73.7" stroke="#122804" stroke-width="2"/><path d="M51.7 -4.9Q53.2 -0.4 54.0 1.0" stroke="#356e18" stroke-width="1.2"/><path d="M67.0 42.2Q62.8 43.0 61.1 44.8" stroke="#24500e" stroke-width="2"/><path d="M5.5 20.0Q-1.2 22.4 -4.3 24.9" stroke="#5c9c34" stroke-width="1.2"/><path d="M21.5 0.5Q26.7 2.7 33.2 6.1" stroke="#183408" stroke-width="1.6"/><path d="M8.2 -0.7Q7.0 6.6 6.9 11.4" stroke="#122804" stroke-width="1.6"/><path d="M23.8 57.6Q22.6 64.3 24.4 70.0" stroke="#6ca840" stroke-width="2"/><path d="M-1.6 27.1Q-5.5 30.0 -11.2 29.5" stroke="#5c9c34" stroke-width="1.6"/><path d="M7.3 41.2Q9.6 42.2 11.8 46.3" stroke="#24500e" stroke-width="1.6"/><path d="M-0.9 36.1Q-4.0 40.8 -3.8 47.7" stroke="#4a8c26" stroke-width="1.2"/><path d="M5.7 52.1Q2.0 57.6 -2.3 62.3" stroke="#5c9c34" stroke-width="1.2"/><path d="M40.2 53.9Q44.1 57.1 47.6 56.9" stroke="#6ca840" stroke-width="2"/><path d="M26.2 49.6Q27.8 55.0 26.1 59.2" stroke="#122804" stroke-width="2"/><path d="M23.1 3.9Q28.1 5.5 30.8 7.5" stroke="#6ca840" stroke-width="1.2"/><path d="M13.2 58.1Q9.3 61.1 6.2 61.7" stroke="#122804" stroke-width="1.6"/><path d="M37.2 -0.2Q33.0 -0.8 29.6 1.3" stroke="#122804" stroke-width="1.6"/><path d="M65.6 56.5Q61.6 61.1 58.0 65.9" stroke="#183408" stroke-width="1.6"/><path d="M50.4 -4.4Q52.5 -0.1 54.0 3.1" stroke="#24500e" stroke-width="1.6"/><path d="M70.4 42.7Q70.4 44.8 71.7 50.7" stroke="#122804" stroke-width="1.2"/><path d="M68.0 66.1Q65.3 65.0 61.6 67.8" stroke="#183408" stroke-width="2"/><path d="M30.6 41.3Q33.8 45.1 34.7 49.6" stroke="#356e18" stroke-width="1.2"/><path d="M4.4 40.8Q6.8 44.8 8.7 45.5" stroke="#4a8c26" stroke-width="1.2"/><path d="M69.1 3.7Q71.7 9.8 72.8 13.5" stroke="#183408" stroke-width="1.2"/><path d="M12.9 60.3Q14.2 67.5 12.2 71.5" stroke="#3c7a1c" stroke-width="1.6"/><path d="M35.4 57.1Q39.1 57.9 39.6 62.5" stroke="#44821f" stroke-width="2"/><path d="M56.5 -4.7Q54.3 -0.1 53.0 1.7" stroke="#5c9c34" stroke-width="2"/><path d="M43.3 -0.7Q44.2 4.2 45.6 6.6" stroke="#122804" stroke-width="2"/><path d="M16.0 7.3Q12.5 9.8 10.0 11.9" stroke="#356e18" stroke-width="2"/><path d="M75.4 13.8Q79.3 16.8 86.5 16.4" stroke="#24500e" stroke-width="1.2"/><path d="M68.4 48.7Q63.5 49.7 61.2 53.3" stroke="#24500e" stroke-width="1.2"/><path d="M69.7 17.1Q71.0 19.1 75.6 24.6" stroke="#2e6414" stroke-width="2"/><path d="M-0.3 23.0Q2.7 25.5 1.8 29.7" stroke="#2e6414" stroke-width="2"/><path d="M5.5 15.2Q9.8 18.9 16.4 21.4" stroke="#183408" stroke-width="1.2"/><path d="M56.2 60.9Q61.9 65.3 65.3 68.7" stroke="#3c7a1c" stroke-width="2"/><path d="M56.3 55.3Q54.5 60.0 51.6 62.9" stroke="#183408" stroke-width="1.6"/><path d="M17.7 44.9Q21.3 49.1 22.0 51.8" stroke="#183408" stroke-width="1.6"/><path d="M18.0 42.2Q10.4 41.7 5.1 42.8" stroke="#5c9c34" stroke-width="1.6"/><path d="M59.2 69.1Q58.6 73.7 61.6 77.5" stroke="#356e18" stroke-width="1.2"/><path d="M31.2 59.8Q32.2 63.0 36.5 67.9" stroke="#183408" stroke-width="1.6"/><path d="M65.6 70.3Q68.1 76.6 66.6 80.3" stroke="#44821f" stroke-width="1.2"/><path d="M9.6 74.6Q12.7 76.9 18.7 81.6" stroke="#356e18" stroke-width="2"/><path d="M43.3 4.2Q35.6 5.8 31.2 4.2" stroke="#44821f" stroke-width="1.2"/><path d="M32.5 8.1Q34.4 13.5 35.1 19.9" stroke="#3c7a1c" stroke-width="1.6"/><path d="M10.6 43.1Q6.9 44.5 3.3 43.8" stroke="#122804" stroke-width="1.2"/><path d="M17.4 64.0Q14.4 68.5 11.4 74.1" stroke="#183408" stroke-width="1.2"/><path d="M75.8 24.9Q79.5 27.5 80.0 31.3" stroke="#44821f" stroke-width="1.6"/><path d="M77.2 43.2Q81.4 45.1 83.5 48.0" stroke="#24500e" stroke-width="1.6"/><path d="M78.0 35.9Q71.8 35.8 67.6 36.1" stroke="#6ca840" stroke-width="1.2"/><path d="M78.3 27.8Q81.3 32.6 85.7 36.1" stroke="#122804" stroke-width="1.2"/><path d="M61.5 31.2Q60.6 35.7 57.1 40.5" stroke="#4a8c26" stroke-width="1.2"/><path d="M33.4 67.0Q35.3 74.5 35.4 78.7" stroke="#4a8c26" stroke-width="1.6"/><path d="M79.1 58.7Q83.5 61.4 86.8 61.2" stroke="#5c9c34" stroke-width="2"/><path d="M9.4 39.3Q7.0 42.6 3.9 45.6" stroke="#2e6414" stroke-width="1.2"/><path d="M78.0 54.4Q80.8 57.8 87.1 62.6" stroke="#2e6414" stroke-width="1.6"/><path d="M11.8 0.9Q7.4 5.0 6.1 5.9" stroke="#6ca840" stroke-width="1.6"/><path d="M45.0 6.4Q52.2 9.2 55.6 8.5" stroke="#356e18" stroke-width="1.2"/><path d="M16.0 72.7Q11.6 72.5 7.8 73.7" stroke="#6ca840" stroke-width="1.2"/><path d="M22.7 55.2Q24.3 59.7 26.9 60.6" stroke="#122804" stroke-width="2"/><path d="M15.3 29.7Q7.0 29.7 2.6 30.3" stroke="#2e6414" stroke-width="1.2"/><path d="M66.2 78.9Q64.4 82.6 62.8 86.0" stroke="#356e18" stroke-width="2"/><path d="M37.5 33.7Q36.7 37.8 33.5 38.5" stroke="#5c9c34" stroke-width="1.2"/><path d="M-3.2 60.3Q-6.6 62.9 -10.0 66.5" stroke="#2e6414" stroke-width="1.2"/><path d="M19.2 22.0Q20.4 25.8 24.8 29.4" stroke="#356e18" stroke-width="2"/><path d="M66.4 31.4Q67.6 35.1 70.0 42.7" stroke="#6ca840" stroke-width="2"/><path d="M47.2 78.4Q51.3 85.6 52.1 88.8" stroke="#44821f" stroke-width="2"/><path d="M74.0 32.3Q74.6 35.8 73.4 41.3" stroke="#356e18" stroke-width="1.6"/><path d="M41.4 49.6Q44.4 51.7 47.2 53.5" stroke="#122804" stroke-width="1.6"/><path d="M49.2 14.6Q53.1 16.1 53.4 19.0" stroke="#2e6414" stroke-width="2"/><path d="M1.9 58.9Q-0.3 63.9 1.1 65.8" stroke="#3c7a1c" stroke-width="2"/><path d="M63.9 53.2Q63.3 54.9 63.9 60.1" stroke="#24500e" stroke-width="1.6"/><path d="M51.1 38.7Q53.8 45.1 53.0 47.9" stroke="#183408" stroke-width="2"/><path d="M59.7 41.3Q54.4 42.7 51.4 47.6" stroke="#5c9c34" stroke-width="1.6"/><path d="M6.8 38.1Q14.1 37.4 18.2 38.7" stroke="#2e6414" stroke-width="1.2"/><path d="M75.7 13.2Q79.5 14.8 84.1 14.7" stroke="#2e6414" stroke-width="2"/><path d="M33.3 59.0Q30.8 62.9 28.6 63.9" stroke="#2e6414" stroke-width="1.2"/><path d="M75.0 50.6Q68.6 49.2 62.2 51.2" stroke="#6ca840" stroke-width="1.6"/><path d="M44.5 75.6Q45.4 80.0 43.3 84.1" stroke="#2e6414" stroke-width="1.2"/><path d="M25.5 61.0Q22.3 67.2 22.9 71.7" stroke="#2e6414" stroke-width="1.6"/><path d="M0.7 24.6Q-3.6 26.3 -9.8 26.6" stroke="#122804" stroke-width="2"/><path d="M35.1 18.4Q40.1 18.1 43.3 19.6" stroke="#3c7a1c" stroke-width="1.6"/><path d="M62.3 75.1Q67.7 76.5 69.6 78.0" stroke="#5c9c34" stroke-width="1.6"/><path d="M67.8 47.9Q64.1 49.4 62.1 50.7" stroke="#3c7a1c" stroke-width="2"/><path d="M18.9 77.4Q16.2 81.3 10.2 85.7" stroke="#6ca840" stroke-width="1.2"/><path d="M28.9 76.9Q23.8 75.1 22.1 77.1" stroke="#5c9c34" stroke-width="2"/><path d="M36.2 78.1Q33.2 80.1 30.3 82.0" stroke="#356e18" stroke-width="1.6"/><path d="M67.2 31.5Q66.5 36.5 66.7 42.2" stroke="#5c9c34" stroke-width="1.6"/><path d="M79.9 6.7Q74.8 7.4 70.3 11.3" stroke="#24500e" stroke-width="2"/><path d="M78.4 53.8Q75.7 57.2 75.1 64.1" stroke="#5c9c34" stroke-width="2"/></g></svg></div><div class="th" style="left:253px;top:251px"><svg width="75" height="75" viewBox="0 0 75 75"><rect width="75" height="75" filter="url(#f24)"/><ellipse cx="7.3" cy="11.1" rx="2" ry="2.4" fill="#b0b8dc"/><ellipse cx="6.6" cy="10.2" rx="2" ry="2.4" fill="#f6f8ff"/><ellipse cx="22.8" cy="3.8" rx="2.6" ry="3.1" fill="#b0b8dc"/><ellipse cx="22.1" cy="2.9" rx="2.6" ry="3.1" fill="#f6f8ff"/><ellipse cx="32.8" cy="3.8" rx="2" ry="2.4" fill="#b0b8dc"/><ellipse cx="32.1" cy="2.9" rx="2" ry="2.4" fill="#f6f8ff"/><ellipse cx="40.1" cy="10.0" rx="3" ry="3.6" fill="#b0b8dc"/><ellipse cx="39.4" cy="9.1" rx="3" ry="3.6" fill="#f6f8ff"/><ellipse cx="57.7" cy="5.9" rx="2" ry="2.4" fill="#b0b8dc"/><ellipse cx="57.0" cy="5.0" rx="2" ry="2.4" fill="#f6f8ff"/><ellipse cx="70.4" cy="3.5" rx="0.9" ry="1.1" fill="#b0b8dc"/><ellipse cx="69.7" cy="2.6" rx="0.9" ry="1.1" fill="#f6f8ff"/><ellipse cx="2.3" cy="14.8" rx="1.2" ry="1.4" fill="#b0b8dc"/><ellipse cx="1.6" cy="13.9" rx="1.2" ry="1.4" fill="#f6f8ff"/><ellipse cx="22.0" cy="17.7" rx="2.6" ry="3.1" fill="#b0b8dc"/><ellipse cx="21.3" cy="16.8" rx="2.6" ry="3.1" fill="#f6f8ff"/><ellipse cx="31.9" cy="20.8" rx="2" ry="2.4" fill="#b0b8dc"/><ellipse cx="31.2" cy="19.9" rx="2" ry="2.4" fill="#f6f8ff"/><ellipse cx="68.3" cy="19.9" rx="0.9" ry="1.1" fill="#b0b8dc"/><ellipse cx="67.6" cy="19.0" rx="0.9" ry="1.1" fill="#f6f8ff"/><ellipse cx="4.9" cy="29.2" rx="1.5" ry="1.8" fill="#b0b8dc"/><ellipse cx="4.2" cy="28.3" rx="1.5" ry="1.8" fill="#f6f8ff"/><ellipse cx="27.8" cy="28.0" rx="1.5" ry="1.8" fill="#b0b8dc"/><ellipse cx="27.1" cy="27.1" rx="1.5" ry="1.8" fill="#f6f8ff"/><ellipse cx="48.8" cy="35.4" rx="0.9" ry="1.1" fill="#b0b8dc"/><ellipse cx="48.1" cy="34.5" rx="0.9" ry="1.1" fill="#f6f8ff"/><ellipse cx="61.0" cy="27.4" rx="2" ry="2.4" fill="#b0b8dc"/><ellipse cx="60.3" cy="26.5" rx="2" ry="2.4" fill="#f6f8ff"/><ellipse cx="68.2" cy="27.6" rx="3" ry="3.6" fill="#b0b8dc"/><ellipse cx="67.5" cy="26.7" rx="3" ry="3.6" fill="#f6f8ff"/><ellipse cx="8.4" cy="42.8" rx="1.5" ry="1.8" fill="#b0b8dc"/><ellipse cx="7.7" cy="41.9" rx="1.5" ry="1.8" fill="#f6f8ff"/><ellipse cx="23.8" cy="47.0" rx="0.9" ry="1.1" fill="#b0b8dc"/><ellipse cx="23.1" cy="46.1" rx="0.9" ry="1.1" fill="#f6f8ff"/><ellipse cx="33.8" cy="39.5" rx="2" ry="2.4" fill="#b0b8dc"/><ellipse cx="33.1" cy="38.6" rx="2" ry="2.4" fill="#f6f8ff"/><ellipse cx="41.0" cy="45.0" rx="2" ry="2.4" fill="#b0b8dc"/><ellipse cx="40.3" cy="44.1" rx="2" ry="2.4" fill="#f6f8ff"/><ellipse cx="61.6" cy="47.1" rx="2" ry="2.4" fill="#b0b8dc"/><ellipse cx="60.9" cy="46.2" rx="2" ry="2.4" fill="#f6f8ff"/><ellipse cx="65.4" cy="43.6" rx="1.2" ry="1.4" fill="#b0b8dc"/><ellipse cx="64.7" cy="42.7" rx="1.2" ry="1.4" fill="#f6f8ff"/><ellipse cx="23.9" cy="57.8" rx="0.9" ry="1.1" fill="#b0b8dc"/><ellipse cx="23.2" cy="56.9" rx="0.9" ry="1.1" fill="#f6f8ff"/><ellipse cx="30.6" cy="60.4" rx="3" ry="3.6" fill="#b0b8dc"/><ellipse cx="29.9" cy="59.5" rx="3" ry="3.6" fill="#f6f8ff"/><ellipse cx="39.6" cy="53.4" rx="2" ry="2.4" fill="#b0b8dc"/><ellipse cx="38.9" cy="52.5" rx="2" ry="2.4" fill="#f6f8ff"/><ellipse cx="59.4" cy="55.2" rx="1.5" ry="1.8" fill="#b0b8dc"/><ellipse cx="58.7" cy="54.3" rx="1.5" ry="1.8" fill="#f6f8ff"/><ellipse cx="64.9" cy="54.0" rx="3" ry="3.6" fill="#b0b8dc"/><ellipse cx="64.2" cy="53.1" rx="3" ry="3.6" fill="#f6f8ff"/><ellipse cx="7.7" cy="68.1" rx="2" ry="2.4" fill="#b0b8dc"/><ellipse cx="7.0" cy="67.2" rx="2" ry="2.4" fill="#f6f8ff"/><ellipse cx="20.1" cy="72.7" rx="1.2" ry="1.4" fill="#b0b8dc"/><ellipse cx="19.4" cy="71.8" rx="1.2" ry="1.4" fill="#f6f8ff"/><ellipse cx="28.5" cy="65.9" rx="1.2" ry="1.4" fill="#b0b8dc"/><ellipse cx="27.8" cy="65.0" rx="1.2" ry="1.4" fill="#f6f8ff"/><ellipse cx="41.7" cy="66.3" rx="3" ry="3.6" fill="#b0b8dc"/><ellipse cx="41.0" cy="65.4" rx="3" ry="3.6" fill="#f6f8ff"/><ellipse cx="57.2" cy="71.3" rx="2" ry="2.4" fill="#b0b8dc"/><ellipse cx="56.5" cy="70.4" rx="2" ry="2.4" fill="#f6f8ff"/><ellipse cx="70.2" cy="68.6" rx="0.9" ry="1.1" fill="#b0b8dc"/><ellipse cx="69.5" cy="67.7" rx="0.9" ry="1.1" fill="#f6f8ff"/></svg></div><div class="th" style="left:336px;top:251px"><svg width="75" height="75" viewBox="0 0 75 75"><rect width="75" height="75" filter="url(#f25)"/></svg></div><div class="th" style="left:419px;top:251px"><svg width="75" height="75" viewBox="0 0 75 75"><rect width="75" height="75" filter="url(#f26)"/></svg></div><div class="th" style="left:502px;top:251px"><svg width="75" height="75" viewBox="0 0 75 75"><rect width="75" height="75" filter="url(#f27)"/></svg></div><div class="th" style="left:585px;top:251px"><svg width="75" height="75" viewBox="0 0 75 75"><rect width="75" height="75" filter="url(#f28)"/></svg></div><div class="th" style="left:667px;top:251px"><svg width="75" height="75" viewBox="0 0 75 75"><g transform="rotate(35 37 37) scale(1.5) translate(-12 -12)"><rect width="75" height="75" filter="url(#f29)"/></g></svg></div><div class="th" style="left:5px;top:334px"><svg width="75" height="75" viewBox="0 0 75 75"><rect width="75" height="75" fill="#0c0c62"/><rect width="75" height="75" filter="url(#f30)"/><g stroke="#3038c8" stroke-width="1" fill="none" opacity=".8"><path d="M28 36h12v4"/><path d="M60 16h4v4"/><path d="M48 68h4v4h12"/><path d="M68 44h4v4h8"/><path d="M24 0h8v4h4v4"/><path d="M36 36h12v4h4v8"/><path d="M40 48h4v4h4v4"/><path d="M32 8h8v4h8v8"/><path d="M36 64h8v4"/><path d="M36 52h4v4h8"/><path d="M32 4h4v4"/><path d="M32 64h12v4h12v4"/><path d="M16 24h8v4"/><path d="M56 32h8v4"/><path d="M72 40h12v4h8v4"/><path d="M4 28h12v8h4"/><path d="M12 40h8v4"/><path d="M0 4h12v4h8"/><path d="M40 0h8v4h4"/><path d="M52 8h12v4h8"/><path d="M36 16h8v8h4"/><path d="M40 72h8v4"/><path d="M56 20h8v4h12"/><path d="M12 56h8v4"/><path d="M12 4h4v8"/><path d="M20 16h4v8h8v8"/><path d="M28 40h4v8"/><path d="M36 52h4v4h4v4"/><path d="M56 52h4v4h8"/><path d="M56 28h8v4h8v4"/><path d="M4 4h8v4h12"/><path d="M24 28h8v4h8"/><path d="M4 40h4v8h8v8"/><path d="M4 60h4v4h4"/><path d="M72 20h8v8h8"/><path d="M40 52h4v8h12v4"/><path d="M40 48h4v4h12"/><path d="M24 4h12v4h8"/><path d="M4 20h12v4h12v4"/><path d="M48 48h4v4"/><path d="M20 0h8v4h8v4"/><path d="M28 68h4v4"/></g></svg></div><div class="th" style="left:88px;top:334px"><svg width="75" height="75" viewBox="0 0 75 75"><rect width="75" height="75" filter="url(#f31)"/></svg></div><div class="th" style="left:171px;top:334px"><svg width="75" height="75" viewBox="0 0 75 75"><rect width="75" height="75" fill="#f9f4dc"/><g transform="translate(5.8 19.8) rotate(10)" fill="#dedac2" stroke="#dedac2"><ellipse cx="0" cy="0" rx="2" ry="1.400" transform="rotate(-20)" stroke="none"/><path d="M1.800 0V-10" stroke-width=".7" fill="none"/><path d="M1.800-10q3.500 1.500 2.500 5" stroke-width=".9" fill="none"/></g><g transform="translate(5 19) rotate(10)" fill="#a8a492" stroke="#a8a492"><ellipse cx="0" cy="0" rx="2" ry="1.400" transform="rotate(-20)" stroke="none"/><path d="M1.800 0V-10" stroke-width=".7" fill="none"/><path d="M1.800-10q3.500 1.500 2.500 5" stroke-width=".9" fill="none"/></g><g transform="translate(15.8 30.8) rotate(-5)" fill="#dedac2" stroke="#dedac2"><ellipse cx="0" cy="0" rx="2" ry="1.400" transform="rotate(-20)" stroke="none"/><path d="M1.800 0V-10" stroke-width=".7" fill="none"/><path d="M1.800-10q3.500 1.500 2.500 5" stroke-width=".9" fill="none"/></g><g transform="translate(15 30) rotate(-5)" fill="#a8a492" stroke="#a8a492"><ellipse cx="0" cy="0" rx="2" ry="1.400" transform="rotate(-20)" stroke="none"/><path d="M1.800 0V-10" stroke-width=".7" fill="none"/><path d="M1.800-10q3.500 1.500 2.500 5" stroke-width=".9" fill="none"/></g><g transform="translate(27.8 22.8) rotate(15)" fill="#dedac2" stroke="#dedac2"><ellipse cx="0" cy="0" rx="2" ry="1.400" transform="rotate(-20)" stroke="none"/><path d="M1.800 0V-10" stroke-width=".7" fill="none"/><path d="M1.800-10l4.500-1.500v2l-4.500 1.500z" stroke="none"/><path d="M6.300-11.500V-2.500" stroke-width=".7" fill="none"/><ellipse cx="4.500" cy="-2" rx="2" ry="1.400" transform="rotate(-20 4.500 -2)" stroke="none"/></g><g transform="translate(27 22) rotate(15)" fill="#a8a492" stroke="#a8a492"><ellipse cx="0" cy="0" rx="2" ry="1.400" transform="rotate(-20)" stroke="none"/><path d="M1.800 0V-10" stroke-width=".7" fill="none"/><path d="M1.800-10l4.500-1.500v2l-4.500 1.500z" stroke="none"/><path d="M6.300-11.500V-2.500" stroke-width=".7" fill="none"/><ellipse cx="4.500" cy="-2" rx="2" ry="1.400" transform="rotate(-20 4.500 -2)" stroke="none"/></g><g transform="translate(41.8 30.8) rotate(0)" fill="#dedac2" stroke="#dedac2"><ellipse cx="0" cy="0" rx="2" ry="1.400" transform="rotate(-20)" stroke="none"/><path d="M1.800 0V-10" stroke-width=".7" fill="none"/><path d="M1.800-10q3.500 1.500 2.500 5" stroke-width=".9" fill="none"/></g><g transform="translate(41 30) rotate(0)" fill="#a8a492" stroke="#a8a492"><ellipse cx="0" cy="0" rx="2" ry="1.400" transform="rotate(-20)" stroke="none"/><path d="M1.800 0V-10" stroke-width=".7" fill="none"/><path d="M1.800-10q3.500 1.500 2.500 5" stroke-width=".9" fill="none"/></g><g transform="translate(56.8 18.8) rotate(-20)" fill="#dedac2" stroke="#dedac2"><ellipse cx="0" cy="0" rx="2" ry="1.400" transform="rotate(-20)" stroke="none"/><path d="M1.800 0V-10" stroke-width=".7" fill="none"/><path d="M1.800-10q3.500 1.500 2.500 5" stroke-width=".9" fill="none"/></g><g transform="translate(56 18) rotate(-20)" fill="#a8a492" stroke="#a8a492"><ellipse cx="0" cy="0" rx="2" ry="1.400" transform="rotate(-20)" stroke="none"/><path d="M1.800 0V-10" stroke-width=".7" fill="none"/><path d="M1.800-10q3.500 1.500 2.500 5" stroke-width=".9" fill="none"/></g><g transform="translate(66.8 24.8) rotate(20)" fill="#dedac2" stroke="#dedac2"><ellipse cx="0" cy="0" rx="2" ry="1.400" transform="rotate(-20)" stroke="none"/><path d="M1.800 0V-10" stroke-width=".7" fill="none"/><path d="M1.800-10l4.500-1.500v2l-4.500 1.500z" stroke="none"/><path d="M6.300-11.500V-2.500" stroke-width=".7" fill="none"/><ellipse cx="4.500" cy="-2" rx="2" ry="1.400" transform="rotate(-20 4.500 -2)" stroke="none"/></g><g transform="translate(66 24) rotate(20)" fill="#a8a492" stroke="#a8a492"><ellipse cx="0" cy="0" rx="2" ry="1.400" transform="rotate(-20)" stroke="none"/><path d="M1.800 0V-10" stroke-width=".7" fill="none"/><path d="M1.800-10l4.500-1.500v2l-4.500 1.500z" stroke="none"/><path d="M6.300-11.500V-2.500" stroke-width=".7" fill="none"/><ellipse cx="4.500" cy="-2" rx="2" ry="1.400" transform="rotate(-20 4.500 -2)" stroke="none"/></g><g transform="translate(4.8 60.8) rotate(-15)" fill="#dedac2" stroke="#dedac2"><ellipse cx="0" cy="0" rx="2" ry="1.400" transform="rotate(-20)" stroke="none"/><path d="M1.800 0V-10" stroke-width=".7" fill="none"/><path d="M1.800-10q3.500 1.500 2.500 5" stroke-width=".9" fill="none"/></g><g transform="translate(4 60) rotate(-15)" fill="#a8a492" stroke="#a8a492"><ellipse cx="0" cy="0" rx="2" ry="1.400" transform="rotate(-20)" stroke="none"/><path d="M1.800 0V-10" stroke-width=".7" fill="none"/><path d="M1.800-10q3.500 1.500 2.500 5" stroke-width=".9" fill="none"/></g><g transform="translate(15.8 65.8) rotate(10)" fill="#dedac2" stroke="#dedac2"><ellipse cx="0" cy="0" rx="2" ry="1.400" transform="rotate(-20)" stroke="none"/><path d="M1.800 0V-10" stroke-width=".7" fill="none"/><path d="M1.800-10l4.500-1.500v2l-4.500 1.500z" stroke="none"/><path d="M6.300-11.500V-2.500" stroke-width=".7" fill="none"/><ellipse cx="4.500" cy="-2" rx="2" ry="1.400" transform="rotate(-20 4.500 -2)" stroke="none"/></g><g transform="translate(15 65) rotate(10)" fill="#a8a492" stroke="#a8a492"><ellipse cx="0" cy="0" rx="2" ry="1.400" transform="rotate(-20)" stroke="none"/><path d="M1.800 0V-10" stroke-width=".7" fill="none"/><path d="M1.800-10l4.500-1.500v2l-4.500 1.500z" stroke="none"/><path d="M6.300-11.500V-2.500" stroke-width=".7" fill="none"/><ellipse cx="4.500" cy="-2" rx="2" ry="1.400" transform="rotate(-20 4.500 -2)" stroke="none"/></g><g transform="translate(27.8 58.8) rotate(5)" fill="#dedac2" stroke="#dedac2"><ellipse cx="0" cy="0" rx="2" ry="1.400" transform="rotate(-20)" stroke="none"/><path d="M1.800 0V-10" stroke-width=".7" fill="none"/><path d="M1.800-10q3.500 1.500 2.500 5" stroke-width=".9" fill="none"/></g><g transform="translate(27 58) rotate(5)" fill="#a8a492" stroke="#a8a492"><ellipse cx="0" cy="0" rx="2" ry="1.400" transform="rotate(-20)" stroke="none"/><path d="M1.800 0V-10" stroke-width=".7" fill="none"/><path d="M1.800-10q3.500 1.500 2.500 5" stroke-width=".9" fill="none"/></g><g transform="translate(41.8 68.8) rotate(-10)" fill="#dedac2" stroke="#dedac2"><ellipse cx="0" cy="0" rx="2" ry="1.400" transform="rotate(-20)" stroke="none"/><path d="M1.800 0V-10" stroke-width=".7" fill="none"/><path d="M1.800-10l4.500-1.500v2l-4.500 1.500z" stroke="none"/><path d="M6.300-11.500V-2.500" stroke-width=".7" fill="none"/><ellipse cx="4.500" cy="-2" rx="2" ry="1.400" transform="rotate(-20 4.500 -2)" stroke="none"/></g><g transform="translate(41 68) rotate(-10)" fill="#a8a492" stroke="#a8a492"><ellipse cx="0" cy="0" rx="2" ry="1.400" transform="rotate(-20)" stroke="none"/><path d="M1.800 0V-10" stroke-width=".7" fill="none"/><path d="M1.800-10l4.500-1.500v2l-4.500 1.500z" stroke="none"/><path d="M6.300-11.500V-2.500" stroke-width=".7" fill="none"/><ellipse cx="4.500" cy="-2" rx="2" ry="1.400" transform="rotate(-20 4.500 -2)" stroke="none"/></g><g transform="translate(56.8 56.8) rotate(-15)" fill="#dedac2" stroke="#dedac2"><ellipse cx="0" cy="0" rx="2" ry="1.400" transform="rotate(-20)" stroke="none"/><path d="M1.800 0V-10" stroke-width=".7" fill="none"/><path d="M1.800-10q3.500 1.500 2.500 5" stroke-width=".9" fill="none"/></g><g transform="translate(56 56) rotate(-15)" fill="#a8a492" stroke="#a8a492"><ellipse cx="0" cy="0" rx="2" ry="1.400" transform="rotate(-20)" stroke="none"/><path d="M1.800 0V-10" stroke-width=".7" fill="none"/><path d="M1.800-10q3.500 1.500 2.500 5" stroke-width=".9" fill="none"/></g><g transform="translate(65.8 66.8) rotate(10)" fill="#dedac2" stroke="#dedac2"><ellipse cx="0" cy="0" rx="2" ry="1.400" transform="rotate(-20)" stroke="none"/><path d="M1.800 0V-10" stroke-width=".7" fill="none"/><path d="M1.800-10l4.500-1.500v2l-4.500 1.500z" stroke="none"/><path d="M6.300-11.500V-2.500" stroke-width=".7" fill="none"/><ellipse cx="4.500" cy="-2" rx="2" ry="1.400" transform="rotate(-20 4.500 -2)" stroke="none"/></g><g transform="translate(65 66) rotate(10)" fill="#a8a492" stroke="#a8a492"><ellipse cx="0" cy="0" rx="2" ry="1.400" transform="rotate(-20)" stroke="none"/><path d="M1.800 0V-10" stroke-width=".7" fill="none"/><path d="M1.800-10l4.500-1.500v2l-4.500 1.500z" stroke="none"/><path d="M6.300-11.500V-2.500" stroke-width=".7" fill="none"/><ellipse cx="4.500" cy="-2" rx="2" ry="1.400" transform="rotate(-20 4.500 -2)" stroke="none"/></g></svg></div><div class="th" style="left:253px;top:334px"><svg width="75" height="75" viewBox="0 0 75 75"><rect width="75" height="75" fill="#140804"/><defs><pattern id="wv" width="10.7" height="10.7" patternUnits="userSpaceOnUse"><rect width="10.7" height="10.7" fill="#140804"/><rect x="1.00" y="0" width=".95" height="5.35" fill="#b88a68"/><rect x="6.35" y="5.35" width=".95" height="5.35" fill="#b88a68"/><rect x="5.35" y="1.00" width="5.35" height=".95" fill="#8e6246"/><rect x="0" y="6.35" width="5.35" height=".95" fill="#8e6246"/><rect x="2.20" y="0" width=".95" height="5.35" fill="#8e6246"/><rect x="7.55" y="5.35" width=".95" height="5.35" fill="#8e6246"/><rect x="5.35" y="2.20" width="5.35" height=".95" fill="#ac7e5e"/><rect x="0" y="7.55" width="5.35" height=".95" fill="#ac7e5e"/><rect x="3.40" y="0" width=".95" height="5.35" fill="#ac7e5e"/><rect x="8.75" y="5.35" width=".95" height="5.35" fill="#ac7e5e"/><rect x="5.35" y="3.40" width="5.35" height=".95" fill="#b88a68"/><rect x="0" y="8.75" width="5.35" height=".95" fill="#b88a68"/></pattern></defs><rect width="75" height="75" fill="url(#wv)"/></svg></div><div class="th" style="left:336px;top:334px"><svg width="75" height="75" viewBox="0 0 75 75"><rect width="75" height="75" fill="#8ea4b2"/><ellipse cx="-4.5" cy="-8.5" rx="5.9" ry="5.7" transform="rotate(114 -4.5 -8.5)" fill="#c6d4de" stroke="#8aa0b0" stroke-width=".9"/><ellipse cx="-5.3" cy="-9.3" rx="3.2" ry="3.1" transform="rotate(114 -4.5 -8.5)" fill="#e6eef2" opacity=".55"/><ellipse cx="6.2" cy="-7.7" rx="6.8" ry="6.0" transform="rotate(30 6.2 -7.7)" fill="#bfced9" stroke="#8aa0b0" stroke-width=".9"/><ellipse cx="5.4" cy="-8.5" rx="3.7" ry="3.3" transform="rotate(30 6.2 -7.7)" fill="#e6eef2" opacity=".55"/><ellipse cx="16.0" cy="-7.8" rx="5.7" ry="6.0" transform="rotate(87 16.0 -7.8)" fill="#d3dde5" stroke="#8aa0b0" stroke-width=".9"/><ellipse cx="15.2" cy="-8.6" rx="3.2" ry="3.3" transform="rotate(87 16.0 -7.8)" fill="#e6eef2" opacity=".55"/><ellipse cx="23.1" cy="-9.6" rx="5.6" ry="5.5" transform="rotate(68 23.1 -9.6)" fill="#d3dde5" stroke="#8aa0b0" stroke-width=".9"/><ellipse cx="22.3" cy="-10.4" rx="3.1" ry="3.0" transform="rotate(68 23.1 -9.6)" fill="#e6eef2" opacity=".55"/><ellipse cx="36.8" cy="-8.9" rx="5.7" ry="5.2" transform="rotate(129 36.8 -8.9)" fill="#ced9e2" stroke="#8aa0b0" stroke-width=".9"/><ellipse cx="36.0" cy="-9.7" rx="3.1" ry="2.9" transform="rotate(129 36.8 -8.9)" fill="#e6eef2" opacity=".55"/><ellipse cx="46.6" cy="-11.0" rx="5.6" ry="5.4" transform="rotate(50 46.6 -11.0)" fill="#c3d0da" stroke="#8aa0b0" stroke-width=".9"/><ellipse cx="45.8" cy="-11.8" rx="3.1" ry="3.0" transform="rotate(50 46.6 -11.0)" fill="#e6eef2" opacity=".55"/><ellipse cx="54.9" cy="-10.5" rx="6.6" ry="5.7" transform="rotate(99 54.9 -10.5)" fill="#c6d4de" stroke="#8aa0b0" stroke-width=".9"/><ellipse cx="54.1" cy="-11.3" rx="3.7" ry="3.1" transform="rotate(99 54.9 -10.5)" fill="#e6eef2" opacity=".55"/><ellipse cx="65.2" cy="-9.2" rx="6.3" ry="5.3" transform="rotate(53 65.2 -9.2)" fill="#d3dde5" stroke="#8aa0b0" stroke-width=".9"/><ellipse cx="64.4" cy="-10.0" rx="3.4" ry="2.9" transform="rotate(53 65.2 -9.2)" fill="#e6eef2" opacity=".55"/><ellipse cx="73.1" cy="-10.6" rx="6.0" ry="5.6" transform="rotate(172 73.1 -10.6)" fill="#bfced9" stroke="#8aa0b0" stroke-width=".9"/><ellipse cx="72.3" cy="-11.4" rx="3.3" ry="3.1" transform="rotate(172 73.1 -10.6)" fill="#e6eef2" opacity=".55"/><ellipse cx="84.1" cy="-7.8" rx="6.1" ry="5.8" transform="rotate(116 84.1 -7.8)" fill="#ced9e2" stroke="#8aa0b0" stroke-width=".9"/><ellipse cx="83.3" cy="-8.6" rx="3.4" ry="3.2" transform="rotate(116 84.1 -7.8)" fill="#e6eef2" opacity=".55"/><ellipse cx="-8.9" cy="-1.4" rx="6.2" ry="5.2" transform="rotate(69 -8.9 -1.4)" fill="#c3d0da" stroke="#8aa0b0" stroke-width=".9"/><ellipse cx="-9.7" cy="-2.2" rx="3.4" ry="2.8" transform="rotate(69 -8.9 -1.4)" fill="#e6eef2" opacity=".55"/><ellipse cx="1.2" cy="-1.4" rx="6.7" ry="6.0" transform="rotate(110 1.2 -1.4)" fill="#ced9e2" stroke="#8aa0b0" stroke-width=".9"/><ellipse cx="0.4" cy="-2.2" rx="3.7" ry="3.3" transform="rotate(110 1.2 -1.4)" fill="#e6eef2" opacity=".55"/><ellipse cx="10.5" cy="-1.5" rx="6.6" ry="5.7" transform="rotate(69 10.5 -1.5)" fill="#ced9e2" stroke="#8aa0b0" stroke-width=".9"/><ellipse cx="9.7" cy="-2.3" rx="3.6" ry="3.1" transform="rotate(69 10.5 -1.5)" fill="#e6eef2" opacity=".55"/><ellipse cx="18.0" cy="1.5" rx="6.3" ry="5.6" transform="rotate(25 18.0 1.5)" fill="#d3dde5" stroke="#8aa0b0" stroke-width=".9"/><ellipse cx="17.2" cy="0.7" rx="3.5" ry="3.1" transform="rotate(25 18.0 1.5)" fill="#e6eef2" opacity=".55"/><ellipse cx="28.8" cy="-1.1" rx="6.1" ry="5.4" transform="rotate(41 28.8 -1.1)" fill="#ced9e2" stroke="#8aa0b0" stroke-width=".9"/><ellipse cx="28.0" cy="-1.9" rx="3.3" ry="3.0" transform="rotate(41 28.8 -1.1)" fill="#e6eef2" opacity=".55"/><ellipse cx="41.9" cy="1.5" rx="6.2" ry="5.7" transform="rotate(69 41.9 1.5)" fill="#bfced9" stroke="#8aa0b0" stroke-width=".9"/><ellipse cx="41.1" cy="0.7" rx="3.4" ry="3.1" transform="rotate(69 41.9 1.5)" fill="#e6eef2" opacity=".55"/><ellipse cx="49.2" cy="1.8" rx="6.3" ry="5.3" transform="rotate(177 49.2 1.8)" fill="#c3d0da" stroke="#8aa0b0" stroke-width=".9"/><ellipse cx="48.4" cy="1.0" rx="3.5" ry="2.9" transform="rotate(177 49.2 1.8)" fill="#e6eef2" opacity=".55"/><ellipse cx="60.2" cy="0.7" rx="5.9" ry="5.0" transform="rotate(170 60.2 0.7)" fill="#ced9e2" stroke="#8aa0b0" stroke-width=".9"/><ellipse cx="59.4" cy="-0.1" rx="3.2" ry="2.8" transform="rotate(170 60.2 0.7)" fill="#e6eef2" opacity=".55"/><ellipse cx="68.8" cy="1.8" rx="6.2" ry="5.3" transform="rotate(86 68.8 1.8)" fill="#c6d4de" stroke="#8aa0b0" stroke-width=".9"/><ellipse cx="68.0" cy="1.0" rx="3.4" ry="2.9" transform="rotate(86 68.8 1.8)" fill="#e6eef2" opacity=".55"/><ellipse cx="80.8" cy="1.9" rx="6.4" ry="6.0" transform="rotate(44 80.8 1.9)" fill="#c6d4de" stroke="#8aa0b0" stroke-width=".9"/><ellipse cx="80.0" cy="1.1" rx="3.5" ry="3.3" transform="rotate(44 80.8 1.9)" fill="#e6eef2" opacity=".55"/><ellipse cx="-3.4" cy="8.7" rx="6.5" ry="5.8" transform="rotate(2 -3.4 8.7)" fill="#d3dde5" stroke="#8aa0b0" stroke-width=".9"/><ellipse cx="-4.2" cy="7.9" rx="3.6" ry="3.2" transform="rotate(2 -3.4 8.7)" fill="#e6eef2" opacity=".55"/><ellipse cx="4.4" cy="8.2" rx="6.3" ry="5.2" transform="rotate(85 4.4 8.2)" fill="#c6d4de" stroke="#8aa0b0" stroke-width=".9"/><ellipse cx="3.6" cy="7.4" rx="3.4" ry="2.9" transform="rotate(85 4.4 8.2)" fill="#e6eef2" opacity=".55"/><ellipse cx="13.6" cy="7.8" rx="5.9" ry="5.3" transform="rotate(28 13.6 7.8)" fill="#ced9e2" stroke="#8aa0b0" stroke-width=".9"/><ellipse cx="12.8" cy="7.0" rx="3.2" ry="2.9" transform="rotate(28 13.6 7.8)" fill="#e6eef2" opacity=".55"/><ellipse cx="24.2" cy="9.9" rx="6.0" ry="5.6" transform="rotate(85 24.2 9.9)" fill="#d3dde5" stroke="#8aa0b0" stroke-width=".9"/><ellipse cx="23.4" cy="9.1" rx="3.3" ry="3.1" transform="rotate(85 24.2 9.9)" fill="#e6eef2" opacity=".55"/><ellipse cx="33.0" cy="10.2" rx="6.7" ry="5.9" transform="rotate(3 33.0 10.2)" fill="#bfced9" stroke="#8aa0b0" stroke-width=".9"/><ellipse cx="32.2" cy="9.4" rx="3.7" ry="3.2" transform="rotate(3 33.0 10.2)" fill="#e6eef2" opacity=".55"/><ellipse cx="44.4" cy="8.7" rx="6.0" ry="5.5" transform="rotate(61 44.4 8.7)" fill="#ced9e2" stroke="#8aa0b0" stroke-width=".9"/><ellipse cx="43.6" cy="7.9" rx="3.3" ry="3.0" transform="rotate(61 44.4 8.7)" fill="#e6eef2" opacity=".55"/><ellipse cx="56.3" cy="9.4" rx="6.5" ry="5.0" transform="rotate(63 56.3 9.4)" fill="#d3dde5" stroke="#8aa0b0" stroke-width=".9"/><ellipse cx="55.5" cy="8.6" rx="3.6" ry="2.8" transform="rotate(63 56.3 9.4)" fill="#e6eef2" opacity=".55"/><ellipse cx="64.3" cy="9.4" rx="5.8" ry="5.0" transform="rotate(100 64.3 9.4)" fill="#c6d4de" stroke="#8aa0b0" stroke-width=".9"/><ellipse cx="63.5" cy="8.6" rx="3.2" ry="2.8" transform="rotate(100 64.3 9.4)" fill="#e6eef2" opacity=".55"/><ellipse cx="75.8" cy="7.7" rx="6.7" ry="5.5" transform="rotate(3 75.8 7.7)" fill="#c3d0da" stroke="#8aa0b0" stroke-width=".9"/><ellipse cx="75.0" cy="6.9" rx="3.7" ry="3.1" transform="rotate(3 75.8 7.7)" fill="#e6eef2" opacity=".55"/><ellipse cx="86.9" cy="7.6" rx="6.3" ry="5.7" transform="rotate(172 86.9 7.6)" fill="#c3d0da" stroke="#8aa0b0" stroke-width=".9"/><ellipse cx="86.1" cy="6.8" rx="3.5" ry="3.1" transform="rotate(172 86.9 7.6)" fill="#e6eef2" opacity=".55"/><ellipse cx="-9.0" cy="20.4" rx="6.6" ry="5.8" transform="rotate(86 -9.0 20.4)" fill="#bfced9" stroke="#8aa0b0" stroke-width=".9"/><ellipse cx="-9.8" cy="19.6" rx="3.6" ry="3.2" transform="rotate(86 -9.0 20.4)" fill="#e6eef2" opacity=".55"/><ellipse cx="-1.9" cy="20.2" rx="6.7" ry="5.5" transform="rotate(136 -1.9 20.2)" fill="#ced9e2" stroke="#8aa0b0" stroke-width=".9"/><ellipse cx="-2.7" cy="19.4" rx="3.7" ry="3.0" transform="rotate(136 -1.9 20.2)" fill="#e6eef2" opacity=".55"/><ellipse cx="9.5" cy="19.3" rx="6.6" ry="5.7" transform="rotate(78 9.5 19.3)" fill="#ced9e2" stroke="#8aa0b0" stroke-width=".9"/><ellipse cx="8.7" cy="18.5" rx="3.6" ry="3.1" transform="rotate(78 9.5 19.3)" fill="#e6eef2" opacity=".55"/><ellipse cx="18.0" cy="17.2" rx="6.4" ry="5.5" transform="rotate(56 18.0 17.2)" fill="#bfced9" stroke="#8aa0b0" stroke-width=".9"/><ellipse cx="17.2" cy="16.4" rx="3.5" ry="3.0" transform="rotate(56 18.0 17.2)" fill="#e6eef2" opacity=".55"/><ellipse cx="28.7" cy="20.8" rx="6.2" ry="5.5" transform="rotate(90 28.7 20.8)" fill="#ced9e2" stroke="#8aa0b0" stroke-width=".9"/><ellipse cx="27.9" cy="20.0" rx="3.4" ry="3.1" transform="rotate(90 28.7 20.8)" fill="#e6eef2" opacity=".55"/><ellipse cx="38.8" cy="20.0" rx="6.2" ry="5.4" transform="rotate(97 38.8 20.0)" fill="#c6d4de" stroke="#8aa0b0" stroke-width=".9"/><ellipse cx="38.0" cy="19.2" rx="3.4" ry="3.0" transform="rotate(97 38.8 20.0)" fill="#e6eef2" opacity=".55"/><ellipse cx="51.7" cy="20.8" rx="5.7" ry="5.2" transform="rotate(148 51.7 20.8)" fill="#c6d4de" stroke="#8aa0b0" stroke-width=".9"/><ellipse cx="50.9" cy="20.0" rx="3.1" ry="2.9" transform="rotate(148 51.7 20.8)" fill="#e6eef2" opacity=".55"/><ellipse cx="59.4" cy="18.4" rx="6.4" ry="5.0" transform="rotate(130 59.4 18.4)" fill="#c6d4de" stroke="#8aa0b0" stroke-width=".9"/><ellipse cx="58.6" cy="17.6" rx="3.5" ry="2.8" transform="rotate(130 59.4 18.4)" fill="#e6eef2" opacity=".55"/><ellipse cx="70.1" cy="20.1" rx="6.8" ry="5.7" transform="rotate(9 70.1 20.1)" fill="#c6d4de" stroke="#8aa0b0" stroke-width=".9"/><ellipse cx="69.3" cy="19.3" rx="3.7" ry="3.1" transform="rotate(9 70.1 20.1)" fill="#e6eef2" opacity=".55"/><ellipse cx="78.4" cy="20.0" rx="5.9" ry="5.6" transform="rotate(171 78.4 20.0)" fill="#bfced9" stroke="#8aa0b0" stroke-width=".9"/><ellipse cx="77.6" cy="19.2" rx="3.2" ry="3.1" transform="rotate(171 78.4 20.0)" fill="#e6eef2" opacity=".55"/><ellipse cx="-3.8" cy="29.9" rx="6.8" ry="5.7" transform="rotate(79 -3.8 29.9)" fill="#bfced9" stroke="#8aa0b0" stroke-width=".9"/><ellipse cx="-4.6" cy="29.1" rx="3.7" ry="3.1" transform="rotate(79 -3.8 29.9)" fill="#e6eef2" opacity=".55"/><ellipse cx="3.1" cy="30.3" rx="6.3" ry="5.4" transform="rotate(29 3.1 30.3)" fill="#d3dde5" stroke="#8aa0b0" stroke-width=".9"/><ellipse cx="2.3" cy="29.5" rx="3.5" ry="3.0" transform="rotate(29 3.1 30.3)" fill="#e6eef2" opacity=".55"/><ellipse cx="13.4" cy="27.9" rx="5.9" ry="5.6" transform="rotate(119 13.4 27.9)" fill="#c6d4de" stroke="#8aa0b0" stroke-width=".9"/><ellipse cx="12.6" cy="27.1" rx="3.2" ry="3.1" transform="rotate(119 13.4 27.9)" fill="#e6eef2" opacity=".55"/><ellipse cx="25.4" cy="30.2" rx="5.9" ry="5.6" transform="rotate(21 25.4 30.2)" fill="#c3d0da" stroke="#8aa0b0" stroke-width=".9"/><ellipse cx="24.6" cy="29.4" rx="3.3" ry="3.1" transform="rotate(21 25.4 30.2)" fill="#e6eef2" opacity=".55"/><ellipse cx="34.4" cy="30.2" rx="6.7" ry="5.1" transform="rotate(78 34.4 30.2)" fill="#ced9e2" stroke="#8aa0b0" stroke-width=".9"/><ellipse cx="33.6" cy="29.4" rx="3.7" ry="2.8" transform="rotate(78 34.4 30.2)" fill="#e6eef2" opacity=".55"/><ellipse cx="45.2" cy="27.7" rx="6.4" ry="5.5" transform="rotate(64 45.2 27.7)" fill="#ced9e2" stroke="#8aa0b0" stroke-width=".9"/><ellipse cx="44.4" cy="26.9" rx="3.5" ry="3.0" transform="rotate(64 45.2 27.7)" fill="#e6eef2" opacity=".55"/><ellipse cx="54.3" cy="27.2" rx="6.7" ry="5.1" transform="rotate(53 54.3 27.2)" fill="#d3dde5" stroke="#8aa0b0" stroke-width=".9"/><ellipse cx="53.5" cy="26.4" rx="3.7" ry="2.8" transform="rotate(53 54.3 27.2)" fill="#e6eef2" opacity=".55"/><ellipse cx="63.3" cy="27.1" rx="6.4" ry="5.5" transform="rotate(164 63.3 27.1)" fill="#d3dde5" stroke="#8aa0b0" stroke-width=".9"/><ellipse cx="62.5" cy="26.3" rx="3.5" ry="3.0" transform="rotate(164 63.3 27.1)" fill="#e6eef2" opacity=".55"/><ellipse cx="75.8" cy="30.5" rx="6.3" ry="5.2" transform="rotate(11 75.8 30.5)" fill="#bfced9" stroke="#8aa0b0" stroke-width=".9"/><ellipse cx="75.0" cy="29.7" rx="3.4" ry="2.9" transform="rotate(11 75.8 30.5)" fill="#e6eef2" opacity=".55"/><ellipse cx="83.6" cy="26.7" rx="5.9" ry="5.8" transform="rotate(93 83.6 26.7)" fill="#bfced9" stroke="#8aa0b0" stroke-width=".9"/><ellipse cx="82.8" cy="25.9" rx="3.2" ry="3.2" transform="rotate(93 83.6 26.7)" fill="#e6eef2" opacity=".55"/><ellipse cx="-8.1" cy="38.1" rx="6.6" ry="5.9" transform="rotate(82 -8.1 38.1)" fill="#c3d0da" stroke="#8aa0b0" stroke-width=".9"/><ellipse cx="-8.9" cy="37.3" rx="3.6" ry="3.2" transform="rotate(82 -8.1 38.1)" fill="#e6eef2" opacity=".55"/><ellipse cx="-0.4" cy="36.9" rx="5.8" ry="5.7" transform="rotate(118 -0.4 36.9)" fill="#c6d4de" stroke="#8aa0b0" stroke-width=".9"/><ellipse cx="-1.2" cy="36.1" rx="3.2" ry="3.1" transform="rotate(118 -0.4 36.9)" fill="#e6eef2" opacity=".55"/><ellipse cx="10.4" cy="39.3" rx="6.3" ry="5.0" transform="rotate(155 10.4 39.3)" fill="#d3dde5" stroke="#8aa0b0" stroke-width=".9"/><ellipse cx="9.6" cy="38.5" rx="3.5" ry="2.8" transform="rotate(155 10.4 39.3)" fill="#e6eef2" opacity=".55"/><ellipse cx="19.8" cy="37.7" rx="6.3" ry="5.2" transform="rotate(158 19.8 37.7)" fill="#c3d0da" stroke="#8aa0b0" stroke-width=".9"/><ellipse cx="19.0" cy="36.9" rx="3.5" ry="2.9" transform="rotate(158 19.8 37.7)" fill="#e6eef2" opacity=".55"/><ellipse cx="28.2" cy="39.7" rx="6.8" ry="5.1" transform="rotate(96 28.2 39.7)" fill="#d3dde5" stroke="#8aa0b0" stroke-width=".9"/><ellipse cx="27.4" cy="38.9" rx="3.7" ry="2.8" transform="rotate(96 28.2 39.7)" fill="#e6eef2" opacity=".55"/><ellipse cx="38.1" cy="38.0" rx="6.5" ry="5.1" transform="rotate(27 38.1 38.0)" fill="#c3d0da" stroke="#8aa0b0" stroke-width=".9"/><ellipse cx="37.3" cy="37.2" rx="3.6" ry="2.8" transform="rotate(27 38.1 38.0)" fill="#e6eef2" opacity=".55"/><ellipse cx="51.4" cy="36.5" rx="6.4" ry="5.2" transform="rotate(21 51.4 36.5)" fill="#c3d0da" stroke="#8aa0b0" stroke-width=".9"/><ellipse cx="50.6" cy="35.7" rx="3.5" ry="2.9" transform="rotate(21 51.4 36.5)" fill="#e6eef2" opacity=".55"/><ellipse cx="60.9" cy="39.8" rx="6.6" ry="5.1" transform="rotate(112 60.9 39.8)" fill="#ced9e2" stroke="#8aa0b0" stroke-width=".9"/><ellipse cx="60.1" cy="39.0" rx="3.6" ry="2.8" transform="rotate(112 60.9 39.8)" fill="#e6eef2" opacity=".55"/><ellipse cx="70.5" cy="39.2" rx="6.6" ry="5.3" transform="rotate(167 70.5 39.2)" fill="#ced9e2" stroke="#8aa0b0" stroke-width=".9"/><ellipse cx="69.7" cy="38.4" rx="3.6" ry="2.9" transform="rotate(167 70.5 39.2)" fill="#e6eef2" opacity=".55"/><ellipse cx="78.4" cy="37.7" rx="6.6" ry="5.4" transform="rotate(130 78.4 37.7)" fill="#ced9e2" stroke="#8aa0b0" stroke-width=".9"/><ellipse cx="77.6" cy="36.9" rx="3.6" ry="3.0" transform="rotate(130 78.4 37.7)" fill="#e6eef2" opacity=".55"/><ellipse cx="-6.4" cy="48.9" rx="6.4" ry="5.8" transform="rotate(78 -6.4 48.9)" fill="#ced9e2" stroke="#8aa0b0" stroke-width=".9"/><ellipse cx="-7.2" cy="48.1" rx="3.5" ry="3.2" transform="rotate(78 -6.4 48.9)" fill="#e6eef2" opacity=".55"/><ellipse cx="4.2" cy="47.3" rx="6.2" ry="5.6" transform="rotate(103 4.2 47.3)" fill="#bfced9" stroke="#8aa0b0" stroke-width=".9"/><ellipse cx="3.4" cy="46.5" rx="3.4" ry="3.1" transform="rotate(103 4.2 47.3)" fill="#e6eef2" opacity=".55"/><ellipse cx="17.0" cy="48.9" rx="6.1" ry="5.1" transform="rotate(6 17.0 48.9)" fill="#bfced9" stroke="#8aa0b0" stroke-width=".9"/><ellipse cx="16.2" cy="48.1" rx="3.3" ry="2.8" transform="rotate(6 17.0 48.9)" fill="#e6eef2" opacity=".55"/><ellipse cx="26.9" cy="47.3" rx="5.8" ry="5.5" transform="rotate(169 26.9 47.3)" fill="#ced9e2" stroke="#8aa0b0" stroke-width=".9"/><ellipse cx="26.1" cy="46.5" rx="3.2" ry="3.0" transform="rotate(169 26.9 47.3)" fill="#e6eef2" opacity=".55"/><ellipse cx="35.0" cy="48.4" rx="5.6" ry="5.5" transform="rotate(160 35.0 48.4)" fill="#d3dde5" stroke="#8aa0b0" stroke-width=".9"/><ellipse cx="34.2" cy="47.6" rx="3.1" ry="3.0" transform="rotate(160 35.0 48.4)" fill="#e6eef2" opacity=".55"/><ellipse cx="44.9" cy="46.7" rx="6.7" ry="5.3" transform="rotate(83 44.9 46.7)" fill="#bfced9" stroke="#8aa0b0" stroke-width=".9"/><ellipse cx="44.1" cy="45.9" rx="3.7" ry="2.9" transform="rotate(83 44.9 46.7)" fill="#e6eef2" opacity=".55"/><ellipse cx="54.6" cy="46.1" rx="5.8" ry="5.2" transform="rotate(67 54.6 46.1)" fill="#c3d0da" stroke="#8aa0b0" stroke-width=".9"/><ellipse cx="53.8" cy="45.3" rx="3.2" ry="2.8" transform="rotate(67 54.6 46.1)" fill="#e6eef2" opacity=".55"/><ellipse cx="64.5" cy="49.5" rx="6.6" ry="5.5" transform="rotate(99 64.5 49.5)" fill="#c6d4de" stroke="#8aa0b0" stroke-width=".9"/><ellipse cx="63.7" cy="48.7" rx="3.7" ry="3.0" transform="rotate(99 64.5 49.5)" fill="#e6eef2" opacity=".55"/><ellipse cx="76.8" cy="48.0" rx="5.9" ry="5.2" transform="rotate(52 76.8 48.0)" fill="#bfced9" stroke="#8aa0b0" stroke-width=".9"/><ellipse cx="76.0" cy="47.2" rx="3.3" ry="2.8" transform="rotate(52 76.8 48.0)" fill="#e6eef2" opacity=".55"/><ellipse cx="85.0" cy="46.9" rx="5.6" ry="5.9" transform="rotate(62 85.0 46.9)" fill="#ced9e2" stroke="#8aa0b0" stroke-width=".9"/><ellipse cx="84.2" cy="46.1" rx="3.1" ry="3.2" transform="rotate(62 85.0 46.9)" fill="#e6eef2" opacity=".55"/><ellipse cx="-11.6" cy="56.1" rx="6.0" ry="5.1" transform="rotate(4 -11.6 56.1)" fill="#c3d0da" stroke="#8aa0b0" stroke-width=".9"/><ellipse cx="-12.4" cy="55.3" rx="3.3" ry="2.8" transform="rotate(4 -11.6 56.1)" fill="#e6eef2" opacity=".55"/><ellipse cx="1.1" cy="58.5" rx="6.2" ry="5.9" transform="rotate(21 1.1 58.5)" fill="#ced9e2" stroke="#8aa0b0" stroke-width=".9"/><ellipse cx="0.3" cy="57.7" rx="3.4" ry="3.3" transform="rotate(21 1.1 58.5)" fill="#e6eef2" opacity=".55"/><ellipse cx="9.4" cy="58.1" rx="5.9" ry="5.7" transform="rotate(131 9.4 58.1)" fill="#bfced9" stroke="#8aa0b0" stroke-width=".9"/><ellipse cx="8.6" cy="57.3" rx="3.3" ry="3.1" transform="rotate(131 9.4 58.1)" fill="#e6eef2" opacity=".55"/><ellipse cx="21.1" cy="57.8" rx="5.6" ry="5.7" transform="rotate(103 21.1 57.8)" fill="#c6d4de" stroke="#8aa0b0" stroke-width=".9"/><ellipse cx="20.3" cy="57.0" rx="3.1" ry="3.1" transform="rotate(103 21.1 57.8)" fill="#e6eef2" opacity=".55"/><ellipse cx="30.7" cy="58.0" rx="6.3" ry="5.9" transform="rotate(127 30.7 58.0)" fill="#ced9e2" stroke="#8aa0b0" stroke-width=".9"/><ellipse cx="29.9" cy="57.2" rx="3.5" ry="3.3" transform="rotate(127 30.7 58.0)" fill="#e6eef2" opacity=".55"/><ellipse cx="39.5" cy="57.8" rx="5.8" ry="5.4" transform="rotate(12 39.5 57.8)" fill="#c3d0da" stroke="#8aa0b0" stroke-width=".9"/><ellipse cx="38.7" cy="57.0" rx="3.2" ry="2.9" transform="rotate(12 39.5 57.8)" fill="#e6eef2" opacity=".55"/><ellipse cx="49.1" cy="56.9" rx="5.8" ry="5.2" transform="rotate(121 49.1 56.9)" fill="#c6d4de" stroke="#8aa0b0" stroke-width=".9"/><ellipse cx="48.3" cy="56.1" rx="3.2" ry="2.9" transform="rotate(121 49.1 56.9)" fill="#e6eef2" opacity=".55"/><ellipse cx="61.1" cy="57.8" rx="6.4" ry="5.4" transform="rotate(176 61.1 57.8)" fill="#c6d4de" stroke="#8aa0b0" stroke-width=".9"/><ellipse cx="60.3" cy="57.0" rx="3.5" ry="3.0" transform="rotate(176 61.1 57.8)" fill="#e6eef2" opacity=".55"/><ellipse cx="69.2" cy="58.8" rx="6.2" ry="5.5" transform="rotate(123 69.2 58.8)" fill="#bfced9" stroke="#8aa0b0" stroke-width=".9"/><ellipse cx="68.4" cy="58.0" rx="3.4" ry="3.0" transform="rotate(123 69.2 58.8)" fill="#e6eef2" opacity=".55"/><ellipse cx="80.6" cy="57.3" rx="5.7" ry="5.5" transform="rotate(178 80.6 57.3)" fill="#d3dde5" stroke="#8aa0b0" stroke-width=".9"/><ellipse cx="79.8" cy="56.5" rx="3.1" ry="3.1" transform="rotate(178 80.6 57.3)" fill="#e6eef2" opacity=".55"/><ellipse cx="-7.0" cy="66.7" rx="6.3" ry="5.9" transform="rotate(129 -7.0 66.7)" fill="#bfced9" stroke="#8aa0b0" stroke-width=".9"/><ellipse cx="-7.8" cy="65.9" rx="3.5" ry="3.3" transform="rotate(129 -7.0 66.7)" fill="#e6eef2" opacity=".55"/><ellipse cx="4.0" cy="67.2" rx="6.7" ry="5.5" transform="rotate(168 4.0 67.2)" fill="#c6d4de" stroke="#8aa0b0" stroke-width=".9"/><ellipse cx="3.2" cy="66.4" rx="3.7" ry="3.0" transform="rotate(168 4.0 67.2)" fill="#e6eef2" opacity=".55"/><ellipse cx="14.9" cy="67.8" rx="6.4" ry="5.6" transform="rotate(90 14.9 67.8)" fill="#c6d4de" stroke="#8aa0b0" stroke-width=".9"/><ellipse cx="14.1" cy="67.0" rx="3.5" ry="3.1" transform="rotate(90 14.9 67.8)" fill="#e6eef2" opacity=".55"/><ellipse cx="25.6" cy="67.7" rx="5.7" ry="5.8" transform="rotate(80 25.6 67.7)" fill="#c6d4de" stroke="#8aa0b0" stroke-width=".9"/><ellipse cx="24.8" cy="66.9" rx="3.1" ry="3.2" transform="rotate(80 25.6 67.7)" fill="#e6eef2" opacity=".55"/><ellipse cx="34.4" cy="67.1" rx="6.7" ry="6.0" transform="rotate(35 34.4 67.1)" fill="#d3dde5" stroke="#8aa0b0" stroke-width=".9"/><ellipse cx="33.6" cy="66.3" rx="3.7" ry="3.3" transform="rotate(35 34.4 67.1)" fill="#e6eef2" opacity=".55"/><ellipse cx="46.0" cy="67.8" rx="6.4" ry="5.2" transform="rotate(42 46.0 67.8)" fill="#ced9e2" stroke="#8aa0b0" stroke-width=".9"/><ellipse cx="45.2" cy="67.0" rx="3.5" ry="2.9" transform="rotate(42 46.0 67.8)" fill="#e6eef2" opacity=".55"/><ellipse cx="54.4" cy="67.9" rx="6.5" ry="5.1" transform="rotate(177 54.4 67.9)" fill="#bfced9" stroke="#8aa0b0" stroke-width=".9"/><ellipse cx="53.6" cy="67.1" rx="3.6" ry="2.8" transform="rotate(177 54.4 67.9)" fill="#e6eef2" opacity=".55"/><ellipse cx="66.5" cy="67.3" rx="6.3" ry="5.9" transform="rotate(39 66.5 67.3)" fill="#c6d4de" stroke="#8aa0b0" stroke-width=".9"/><ellipse cx="65.7" cy="66.5" rx="3.5" ry="3.2" transform="rotate(39 66.5 67.3)" fill="#e6eef2" opacity=".55"/><ellipse cx="76.9" cy="68.3" rx="6.1" ry="5.4" transform="rotate(76 76.9 68.3)" fill="#c3d0da" stroke="#8aa0b0" stroke-width=".9"/><ellipse cx="76.1" cy="67.5" rx="3.4" ry="2.9" transform="rotate(76 76.9 68.3)" fill="#e6eef2" opacity=".55"/><ellipse cx="85.1" cy="66.6" rx="6.2" ry="5.1" transform="rotate(2 85.1 66.6)" fill="#ced9e2" stroke="#8aa0b0" stroke-width=".9"/><ellipse cx="84.3" cy="65.8" rx="3.4" ry="2.8" transform="rotate(2 85.1 66.6)" fill="#e6eef2" opacity=".55"/><ellipse cx="-11.3" cy="77.3" rx="6.4" ry="5.9" transform="rotate(180 -11.3 77.3)" fill="#d3dde5" stroke="#8aa0b0" stroke-width=".9"/><ellipse cx="-12.1" cy="76.5" rx="3.5" ry="3.2" transform="rotate(180 -11.3 77.3)" fill="#e6eef2" opacity=".55"/><ellipse cx="1.7" cy="75.9" rx="5.7" ry="5.3" transform="rotate(16 1.7 75.9)" fill="#ced9e2" stroke="#8aa0b0" stroke-width=".9"/><ellipse cx="0.9" cy="75.1" rx="3.2" ry="2.9" transform="rotate(16 1.7 75.9)" fill="#e6eef2" opacity=".55"/><ellipse cx="10.8" cy="76.9" rx="6.6" ry="5.3" transform="rotate(23 10.8 76.9)" fill="#c6d4de" stroke="#8aa0b0" stroke-width=".9"/><ellipse cx="10.0" cy="76.1" rx="3.6" ry="2.9" transform="rotate(23 10.8 76.9)" fill="#e6eef2" opacity=".55"/><ellipse cx="20.9" cy="74.7" rx="6.2" ry="5.7" transform="rotate(144 20.9 74.7)" fill="#d3dde5" stroke="#8aa0b0" stroke-width=".9"/><ellipse cx="20.1" cy="73.9" rx="3.4" ry="3.1" transform="rotate(144 20.9 74.7)" fill="#e6eef2" opacity=".55"/><ellipse cx="31.1" cy="76.3" rx="6.4" ry="5.3" transform="rotate(89 31.1 76.3)" fill="#bfced9" stroke="#8aa0b0" stroke-width=".9"/><ellipse cx="30.3" cy="75.5" rx="3.5" ry="2.9" transform="rotate(89 31.1 76.3)" fill="#e6eef2" opacity=".55"/><ellipse cx="40.7" cy="75.7" rx="5.7" ry="5.2" transform="rotate(51 40.7 75.7)" fill="#ced9e2" stroke="#8aa0b0" stroke-width=".9"/><ellipse cx="39.9" cy="74.9" rx="3.1" ry="2.9" transform="rotate(51 40.7 75.7)" fill="#e6eef2" opacity=".55"/><ellipse cx="50.5" cy="77.1" rx="6.7" ry="5.1" transform="rotate(139 50.5 77.1)" fill="#c3d0da" stroke="#8aa0b0" stroke-width=".9"/><ellipse cx="49.7" cy="76.3" rx="3.7" ry="2.8" transform="rotate(139 50.5 77.1)" fill="#e6eef2" opacity=".55"/><ellipse cx="60.5" cy="76.9" rx="6.5" ry="5.6" transform="rotate(161 60.5 76.9)" fill="#bfced9" stroke="#8aa0b0" stroke-width=".9"/><ellipse cx="59.7" cy="76.1" rx="3.6" ry="3.1" transform="rotate(161 60.5 76.9)" fill="#e6eef2" opacity=".55"/><ellipse cx="68.1" cy="74.6" rx="6.3" ry="5.4" transform="rotate(147 68.1 74.6)" fill="#c6d4de" stroke="#8aa0b0" stroke-width=".9"/><ellipse cx="67.3" cy="73.8" rx="3.5" ry="3.0" transform="rotate(147 68.1 74.6)" fill="#e6eef2" opacity=".55"/><ellipse cx="79.8" cy="76.6" rx="6.5" ry="5.7" transform="rotate(48 79.8 76.6)" fill="#c3d0da" stroke="#8aa0b0" stroke-width=".9"/><ellipse cx="79.0" cy="75.8" rx="3.6" ry="3.1" transform="rotate(48 79.8 76.6)" fill="#e6eef2" opacity=".55"/></svg></div><div class="th" style="left:419px;top:334px"><svg width="75" height="75" viewBox="0 0 75 75"><rect width="75" height="75" filter="url(#f32)"/></svg></div><div class="th" style="left:502px;top:334px"><svg width="75" height="75" viewBox="0 0 75 75"><rect width="75" height="75" filter="url(#f33)"/></svg></div><div class="th" style="left:585px;top:334px"><svg width="75" height="75" viewBox="0 0 75 75"><rect width="75" height="75" filter="url(#f34)"/><g filter="url(#f35)"><circle cx="17.0" cy="72.2" r="3.4" fill="#fffbe6" opacity=".75"/><path d="M13.6 74.2q3.4 3.4 6.8 0" stroke="#e0a848" stroke-width="1.200" fill="none" opacity=".7"/><circle cx="52.9" cy="6.4" r="3.7" fill="#fffbe6" opacity=".75"/><path d="M49.1 8.6q3.7 3.7 7.5 0" stroke="#e0a848" stroke-width="1.200" fill="none" opacity=".7"/><circle cx="74.9" cy="15.7" r="4.9" fill="#fffbe6" opacity=".75"/><path d="M70.0 18.7q4.9 4.9 9.9 0" stroke="#e0a848" stroke-width="1.200" fill="none" opacity=".7"/><circle cx="34.4" cy="34.0" r="4.5" fill="#fffbe6" opacity=".75"/><path d="M30.0 36.7q4.5 4.5 9.0 0" stroke="#e0a848" stroke-width="1.200" fill="none" opacity=".7"/><circle cx="14.4" cy="62.3" r="3.3" fill="#fffbe6" opacity=".75"/><path d="M11.1 64.3q3.3 3.3 6.5 0" stroke="#e0a848" stroke-width="1.200" fill="none" opacity=".7"/><circle cx="17.6" cy="1.5" r="3.8" fill="#fffbe6" opacity=".75"/><path d="M13.8 3.8q3.8 3.8 7.6 0" stroke="#e0a848" stroke-width="1.200" fill="none" opacity=".7"/><circle cx="30.6" cy="67.7" r="4.1" fill="#fffbe6" opacity=".75"/><path d="M26.4 70.1q4.1 4.1 8.3 0" stroke="#e0a848" stroke-width="1.200" fill="none" opacity=".7"/><circle cx="8.5" cy="19.4" r="6.0" fill="#fffbe6" opacity=".75"/><path d="M2.6 23.0q6.0 6.0 11.9 0" stroke="#e0a848" stroke-width="1.200" fill="none" opacity=".7"/><circle cx="4.7" cy="46.5" r="4.1" fill="#fffbe6" opacity=".75"/><path d="M0.6 49.0q4.1 4.1 8.3 0" stroke="#e0a848" stroke-width="1.200" fill="none" opacity=".7"/><circle cx="49.6" cy="25.4" r="5.1" fill="#fffbe6" opacity=".75"/><path d="M44.5 28.4q5.1 5.1 10.1 0" stroke="#e0a848" stroke-width="1.200" fill="none" opacity=".7"/><circle cx="37.3" cy="48.7" r="5.7" fill="#fffbe6" opacity=".75"/><path d="M31.6 52.2q5.7 5.7 11.4 0" stroke="#e0a848" stroke-width="1.200" fill="none" opacity=".7"/><circle cx="43.6" cy="10.7" r="3.2" fill="#fffbe6" opacity=".75"/><path d="M40.4 12.6q3.2 3.2 6.4 0" stroke="#e0a848" stroke-width="1.200" fill="none" opacity=".7"/><circle cx="71.0" cy="36.7" r="3.6" fill="#fffbe6" opacity=".75"/><path d="M67.4 38.8q3.6 3.6 7.2 0" stroke="#e0a848" stroke-width="1.200" fill="none" opacity=".7"/><circle cx="71.0" cy="43.4" r="5.2" fill="#fffbe6" opacity=".75"/><path d="M65.8 46.5q5.2 5.2 10.4 0" stroke="#e0a848" stroke-width="1.200" fill="none" opacity=".7"/><circle cx="66.1" cy="21.4" r="4.1" fill="#fffbe6" opacity=".75"/><path d="M62.0 23.9q4.1 4.1 8.1 0" stroke="#e0a848" stroke-width="1.200" fill="none" opacity=".7"/><circle cx="65.9" cy="10.1" r="5.3" fill="#fffbe6" opacity=".75"/><path d="M60.6 13.3q5.3 5.3 10.6 0" stroke="#e0a848" stroke-width="1.200" fill="none" opacity=".7"/><circle cx="7.3" cy="51.8" r="5.1" fill="#fffbe6" opacity=".75"/><path d="M2.2 54.8q5.1 5.1 10.2 0" stroke="#e0a848" stroke-width="1.200" fill="none" opacity=".7"/><circle cx="71.2" cy="63.3" r="4.5" fill="#fffbe6" opacity=".75"/><path d="M66.7 66.0q4.5 4.5 9.0 0" stroke="#e0a848" stroke-width="1.200" fill="none" opacity=".7"/><circle cx="14.8" cy="11.3" r="4.6" fill="#fffbe6" opacity=".75"/><path d="M10.2 14.0q4.6 4.6 9.2 0" stroke="#e0a848" stroke-width="1.200" fill="none" opacity=".7"/><circle cx="38.2" cy="5.4" r="5.7" fill="#fffbe6" opacity=".75"/><path d="M32.5 8.8q5.7 5.7 11.4 0" stroke="#e0a848" stroke-width="1.200" fill="none" opacity=".7"/><circle cx="38.1" cy="52.6" r="3.7" fill="#fffbe6" opacity=".75"/><path d="M34.4 54.8q3.7 3.7 7.3 0" stroke="#e0a848" stroke-width="1.200" fill="none" opacity=".7"/><circle cx="18.3" cy="0.9" r="4.0" fill="#fffbe6" opacity=".75"/><path d="M14.3 3.3q4.0 4.0 8.1 0" stroke="#e0a848" stroke-width="1.200" fill="none" opacity=".7"/><circle cx="20.0" cy="31.8" r="4.1" fill="#fffbe6" opacity=".75"/><path d="M15.9 34.2q4.1 4.1 8.3 0" stroke="#e0a848" stroke-width="1.200" fill="none" opacity=".7"/><circle cx="62.6" cy="66.9" r="3.5" fill="#fffbe6" opacity=".75"/><path d="M59.0 69.0q3.5 3.5 7.1 0" stroke="#e0a848" stroke-width="1.200" fill="none" opacity=".7"/><circle cx="29.7" cy="12.5" r="5.0" fill="#fffbe6" opacity=".75"/><path d="M24.7 15.5q5.0 5.0 10.0 0" stroke="#e0a848" stroke-width="1.200" fill="none" opacity=".7"/><circle cx="73.1" cy="15.1" r="5.3" fill="#fffbe6" opacity=".75"/><path d="M67.8 18.3q5.3 5.3 10.6 0" stroke="#e0a848" stroke-width="1.200" fill="none" opacity=".7"/></g></svg></div><div class="th" style="left:667px;top:334px"><svg width="75" height="75" viewBox="0 0 75 75"><rect width="75" height="75" filter="url(#f36)"/></svg></div><div class="th" style="left:5px;top:417px"><svg width="75" height="75" viewBox="0 0 75 75"><rect width="75" height="75" filter="url(#f37)"/></svg></div><div class="th" style="left:88px;top:417px"><svg width="75" height="75" viewBox="0 0 75 75"><rect width="75" height="75" fill="#fdfdfd"/><g fill="none" stroke-width="4" opacity=".8" filter="url(#f38)"><circle cx="1.0" cy="21.7" r="12.0" stroke="#b4ecd0"/><circle cx="11.7" cy="22.8" r="9.2" stroke="#b4ecd0"/><circle cx="21.2" cy="1.6" r="10.3" stroke="#c8c4f0"/><circle cx="26.0" cy="1.3" r="9.2" stroke="#c8c4f0"/><circle cx="35.3" cy="3.8" r="12.3" stroke="#d0ccf4"/><circle cx="42.3" cy="23.5" r="8.7" stroke="#d0ccf4"/><circle cx="51.0" cy="-1.9" r="12.4" stroke="#c8c4f0"/><circle cx="65.2" cy="28.7" r="8.8" stroke="#c8c4f0"/><circle cx="70.3" cy="28.8" r="10.7" stroke="#c8c4f0"/></g></svg></div><div class="th" style="left:171px;top:417px"><svg width="75" height="75" viewBox="0 0 75 75"><rect width="75" height="75" fill="#fdfaf0"/><g fill="none" stroke-width="4" opacity=".8" filter="url(#f39)"><circle cx="-0.3" cy="9.9" r="8.7" stroke="#f4a0c4"/><circle cx="7.7" cy="12.8" r="11.0" stroke="#f090b8"/><circle cx="18.4" cy="17.7" r="8.2" stroke="#fcd4a0"/><circle cx="24.4" cy="28.3" r="12.8" stroke="#fcd4a0"/><circle cx="33.3" cy="5.6" r="8.6" stroke="#f4a0c4"/><circle cx="47.2" cy="10.3" r="11.7" stroke="#f4a0c4"/><circle cx="57.4" cy="4.6" r="9.1" stroke="#fcd4a0"/><circle cx="66.1" cy="22.7" r="12.6" stroke="#fcd4a0"/><circle cx="70.2" cy="23.9" r="9.0" stroke="#f4a0c4"/></g></svg></div><div class="th" style="left:253px;top:417px"><svg width="75" height="75" viewBox="0 0 75 75"><rect width="75" height="75" filter="url(#f40)"/></svg></div><div class="th" style="left:336px;top:417px"><svg width="75" height="75" viewBox="0 0 75 75"><rect width="75" height="75" filter="url(#f41)"/></svg></div><div class="th" style="left:419px;top:417px"><svg width="75" height="75" viewBox="0 0 75 75"><rect width="75" height="75" filter="url(#f42)"/></svg></div><div class="th" style="left:502px;top:417px"><svg width="75" height="75" viewBox="0 0 75 75"><rect width="75" height="75" filter="url(#f43)"/></svg></div><div class="th" style="left:585px;top:417px"><svg width="75" height="75" viewBox="0 0 75 75"><rect width="75" height="75" filter="url(#f44)"/></svg></div><div class="th" style="left:667px;top:417px"><svg width="75" height="75" viewBox="0 0 75 75"><rect width="75" height="75" fill="#0b1664"/><g fill="#fff" filter="url(#f45)"><circle cx="15.4" cy="8.5" r="1.7"/><circle cx="36.9" cy="8.9" r="1.4"/><circle cx="44.2" cy="4.9" r="1.6"/><circle cx="66.3" cy="10" r="1.2"/><circle cx="49.5" cy="17.5" r="1.3"/><circle cx="21" cy="23.2" r="1.1"/><circle cx="11.6" cy="26.4" r="1"/><circle cx="7" cy="10.6" r="0.8"/><circle cx="40" cy="13" r="0.6"/><circle cx="58" cy="24" r="0.7"/></g></svg></div><div class="abs" style="left:770px;top:0;width:16px;height:447px;background:#f1f1f1"></div><div class="abs" style="left:770px;top:17px;width:15px;height:293px;border:1px solid #a9a9a9;border-radius:2px;background:linear-gradient(90deg,#f4f4f4 0,#eaeaea 45%,#d6d6d6 55%,#cfcfcf 100%)"></div><svg class="abs" style="left:774px;top:6px" width="8" height="6"><path d="M0 5l4-4 4 4z" fill="#444"/></svg><svg class="abs" style="left:774px;top:436px" width="8" height="6"><path d="M0 1l4 4 4-4z" fill="#444"/></svg><svg class="abs" style="left:774px;top:160px" width="8" height="8"><path d="M0 1h7M0 3.700h7M0 6.400h7" stroke="#555" stroke-width="1.100"/></svg></div></div>
 <div class="abs" style="left:0;top:572px;width:933px;height:1px;background:#fff"></div><div class="abs" style="left:0;top:576px;width:933px;height:1px;background:#b0b0b0"></div><div class="abs" style="left:0;top:577px;width:933px;height:6px;background:#f4f4f4"></div><div class="abs" style="left:0;top:583px;width:933px;height:1px;background:#9c9c9c"></div><svg class="abs" style="left:450px;top:577px" width="32" height="6" viewBox="0 0 32 6"><path d="M0 4.5l2-2.5 2 2.5z M28 4.5l2-2.5 2 2.5z" fill="#555"/><g fill="#777"><rect x="8" y="3" width="1.3" height="1.3"/><rect x="11.7" y="3" width="1.3" height="1.3"/><rect x="15.4" y="3" width="1.3" height="1.3"/><rect x="19.1" y="3" width="1.3" height="1.3"/><rect x="22.8" y="3" width="1.3" height="1.3"/></g></svg><div class="abs" style="left:0;top:584px;width:933px;height:16px;background:linear-gradient(#e6e6e6,#f3f3f3 30%,#f3f3f3)"></div><div class="abs" style="left:18px;top:584px;width:881px;height:16px;border:1px solid #a3a3a3;border-radius:2px;background:linear-gradient(#f6f6f6 0,#e9e9e9 45%,#d4d4d4 55%,#cfcfcf 100%)"></div><svg class="abs" style="left:5px;top:588px" width="6" height="8"><path d="M5 0L1 4l4 4z" fill="#444"/></svg><svg class="abs" style="left:907px;top:588px" width="6" height="8"><path d="M1 0l4 4-4 4z" fill="#444"/></svg><svg class="abs" style="left:455px;top:588px" width="8" height="8"><path d="M1 0v7M3.7 0v7M6.4 0v7" stroke="#555" stroke-width="1.2"/></svg><div class="abs" style="left:0;top:584px;width:2px;height:16px;background:#9a9a9a"></div><div class="abs" style="left:927px;top:85px;width:13px;height:487px;background:#f2f2f2"></div><div class="abs" style="left:933px;top:85px;width:1px;height:515px;background:#b5b5b5"></div><div class="abs" style="left:939px;top:85px;width:1px;height:515px;background:#b5b5b5"></div><svg class="abs" style="left:934px;top:326px" width="5" height="31" viewBox="0 0 5 31"><path d="M.5 3.5L2.5 .8 4.5 3.5z M.5 27.5L2.5 30.2 4.5 27.5z" fill="#555"/><g fill="#777"><rect x="1.8" y="8" width="1.3" height="1.3"/><rect x="1.8" y="11.5" width="1.3" height="1.3"/><rect x="1.8" y="15" width="1.3" height="1.3"/><rect x="1.8" y="18.5" width="1.3" height="1.3"/><rect x="1.8" y="22" width="1.3" height="1.3"/></g></svg><div class="abs" style="left:940px;top:85px;width:36px;height:515px;background:#f0f0f0"></div><div class="abs" style="left:943px;top:125px;width:30px;height:29px;border:1px solid #b9b9b9;border-radius:3px;background:linear-gradient(#f9f9f9,#ececec)"></div><svg class="ic" style="left:953.0px;top:98.0px" width="10" height="10" viewBox="0 0 10 10"><rect x=".5" y=".5" width="6" height="5.500" fill="#7c8490"/><path d="M4 7h5.500L6.800 9.800z" fill="#1c1c1c"/></svg><svg class="ic" style="left:946.5px;top:128.4px" width="23.1" height="23.1" viewBox="0 0 22 22"><g stroke-width=".6"><path d="M2 6l5-2.500L12 6v5.500L7 14 2 11.500z" fill="#2c9cf0" stroke="#1c6cb0"/><path d="M2 6l5 2.500L12 6 7 3.500z" fill="#7cccfc" stroke="#1c6cb0"/><path d="M7 8.500V14" stroke="#1c6cb0"/><path d="M10 4l5-2.500L20 4v5.500L15 12 10 9.500z" fill="#2c9cf0" stroke="#1c6cb0"/><path d="M10 4l5 2.500L20 4 15 1.500z" fill="#7cccfc" stroke="#1c6cb0"/><path d="M15 6.500V12" stroke="#1c6cb0"/><path d="M3 14l5-2.500 5 2.500v5.500L8 22 3 19.500z" fill="#2c9cf0" stroke="#1c6cb0"/><path d="M3 14l5 2.500 5-2.500-5-2.500z" fill="#7cccfc" stroke="#1c6cb0"/><path d="M8 16.500V22" stroke="#1c6cb0"/><path d="M11 12l5-2.500 5 2.500v6L16 20.500 11 18z" fill="#6cc42c" stroke="#3c8c0c"/><path d="M11 12l5 2.500 5-2.500-5-2.500z" fill="#b4ec6c" stroke="#3c8c0c"/><path d="M16 14.500v6" stroke="#3c8c0c"/></g></svg><svg class="ic" style="left:946.5px;top:160.9px" width="23.1" height="23.1" viewBox="0 0 22 22"><path d="M6 6l10 2-6 13z" fill="#2c84e0" stroke="#1c4c94" stroke-width=".6"/><path d="M6 6l5 7 5-5z" fill="#1c2c4c"/><circle cx="5" cy="6" r="3.500" fill="#f0841c"/><path d="M16.500 1l1 2.200 2.400.3-1.800 1.600.5 2.400-2.100-1.200-2.100 1.200.5-2.400-1.800-1.600 2.400-.3z" fill="#f4d41c"/><circle cx="11" cy="3" r="2" fill="#c04cc0"/><path d="M15 11q4-1 5 3-3 2-5 0z" fill="#4cb42c"/><circle cx="18" cy="9" r="1.600" fill="#e43c6c"/><ellipse cx="11" cy="21" rx="7" ry="1" fill="#000" opacity=".25"/></svg><svg class="ic" style="left:945.9px;top:191.4px" width="24.2" height="24.2" viewBox="0 0 22 22"><g transform="rotate(-14 11 11)"><rect x="3" y="6" width="15" height="12" fill="#c8dcf0" stroke="#8c9cb0" stroke-width=".6"/><rect x="1.500" y="3.500" width="16" height="12.500" fill="#fdfdfd" stroke="#8c949c" stroke-width=".7"/><rect x="3" y="5" width="13" height="9.500" fill="#5cacf0"/><path d="M3 14.500v-3l4-3 3.500 3 2-1.500 3.500 2.500v2z" fill="#4ca42c"/><circle cx="12.500" cy="7.500" r="1.300" fill="#fcf0a0"/></g><ellipse cx="11" cy="21" rx="7" ry="1" fill="#000" opacity=".2"/></svg><svg class="ic" style="left:946.5px;top:225.9px" width="23.1" height="23.1" viewBox="0 0 22 22"><circle cx="11" cy="11.500" r="9" fill="#fbfbfb" stroke="#f09c1c" stroke-width="2.200"/><circle cx="11" cy="11.500" r="10.200" fill="none" stroke="#b86c08" stroke-width=".6"/><path d="M11 11.500L9.400 10 15.500 5.500z" fill="#2c5cc8"/><path d="M11 11.500l1.600 1.500 2.900-7.500z" fill="#1c3c94"/><path d="M11 11.500L9.400 10 6.500 17.500z" fill="#f04030"/><path d="M11 11.500l1.600 1.500-6.100 4.500z" fill="#c01c14"/><text x="11" y="5.500" font-size="4.500" font-family="Liberation Sans,sans-serif" font-weight="bold" fill="#c02c1c" text-anchor="middle">N</text></svg><div class="abs" style="left:947px;top:120px;width:22px;height:1px;background:#d4d4d4"></div>
 <div class="abs" id="status"><div class="st" style="left:9px">Page 1 / 1</div><div class="st" style="left:141px">Default</div><div class="st" style="left:295px">English (USA)</div><div class="st" style="left:410px">INSRT</div><div class="st" style="left:453px">STD</div><svg class="abs" style="left:734px;top:4px" width="60" height="14" viewBox="0 0 60 14"><path d="M1.500 1.500h5.500l2.500 2.500v8.500h-8z" fill="#fbfbfb" stroke="#8c96a4" stroke-width="1"/><path d="M15 1.500h8v11h-8zM24.500 1.500h8v11h-8z" fill="#a4c8f4" stroke="#2c64b4" stroke-width="1.100"/><path d="M39.500 3q3.500-2 7.500 0v9.500q-4-2-7.500 0zM47 3q4-2 7.500 0v9.500q-3.500-2-7.500 0z" fill="#fafafa" stroke="#8c96a4" stroke-width="1"/></svg><svg class="abs" style="left:803px;top:5px" width="130" height="14" viewBox="0 0 130 14"><path d="M17 7.500h96" stroke="#8c8c8c" stroke-width="1"/><circle cx="6.500" cy="7.200" r="5" fill="#dce8f4" stroke="#5c7c9c" stroke-width="1.200"/><path d="M4 7.200h5" stroke="#2c4c6c" stroke-width="1.300"/><circle cx="118" cy="7.200" r="5" fill="#dce8f4" stroke="#5c7c9c" stroke-width="1.200"/><path d="M115.500 7.200h5M118 4.700v5" stroke="#2c4c6c" stroke-width="1.300"/><path d="M58 2.500h6v7l-3 3-3-3z" fill="#e4e4e4" stroke="#7c7c7c" stroke-width="1"/></svg><div class="ssep" style="left:135px"></div><div class="ssep" style="left:255px"></div><div class="ssep" style="left:406px"></div><div class="ssep" style="left:448px"></div><div class="ssep" style="left:480px"></div><div class="ssep" style="left:495px"></div><div class="ssep" style="left:522px"></div><div class="ssep" style="left:728px"></div><div class="ssep" style="left:799px"></div></div>
</div>
<div class="abs" style="left:866px;top:632px;width:122px;height:20px;background:linear-gradient(90deg,rgba(244,244,244,0),rgba(244,244,244,.7) 12%,rgba(244,244,244,.7))"></div><div class="abs" style="left:871px;top:630px;font-family:'Liberation Serif',serif;font-size:19px;white-space:nowrap;letter-spacing:-.2px;font-weight:bold"><span style="color:#a8242c;font-weight:normal;letter-spacing:.3px;-webkit-text-stroke:.35px #a8242c">Sharper</span> <span style="color:#1b76bf;letter-spacing:.3px">Jacks</span></div>
</body></html>
